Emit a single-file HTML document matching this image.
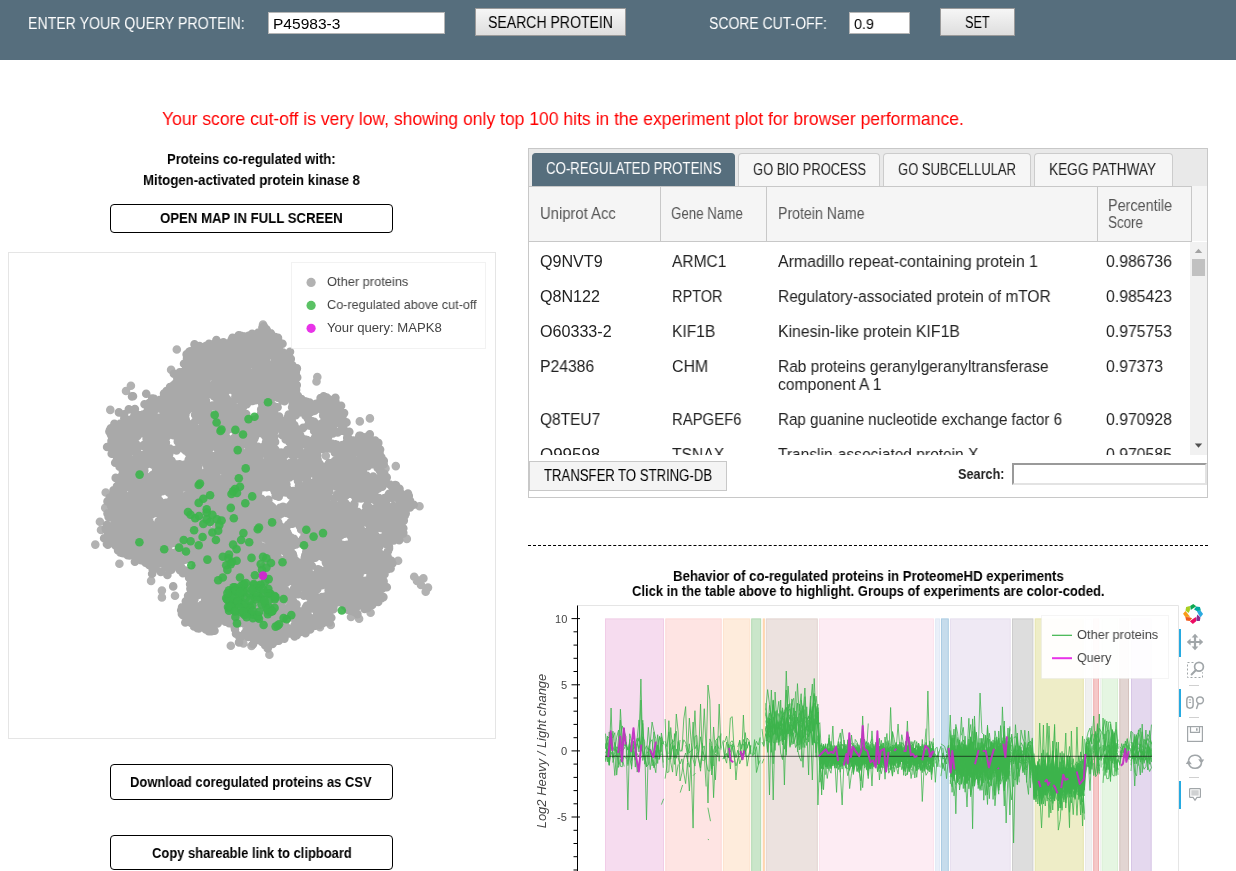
<!DOCTYPE html>
<html><head><meta charset="utf-8"><title>ProteomeHD</title>
<style>
html,body{margin:0;padding:0;background:#fff;}
body{width:1236px;height:871px;position:relative;overflow:hidden;font-family:"Liberation Sans",sans-serif;color:#000;}
.t{position:absolute;white-space:nowrap;transform-origin:0 0;line-height:20px;display:block;will-change:transform;}
.a{position:absolute;box-sizing:border-box;}
.btn{position:absolute;box-sizing:border-box;border:1px solid #9a9a9a;background:linear-gradient(#f6f6f6,#dedede);}
.bb{position:absolute;box-sizing:border-box;border:1px solid #000;border-radius:4px;background:#fff;}
.tab{position:absolute;box-sizing:border-box;border:1px solid #ccc;border-bottom:none;background:#f6f6f6;border-radius:4px 4px 0 0;}
</style></head><body>

<div class="a" style="left:0;top:0;width:1236px;height:60px;background:#566e7d"></div>
<span class="t" id="t0" style="left:28.30px;top:13.59px;font-size:15.6px;color:#fff;transform:scaleX(0.9061);">ENTER YOUR QUERY PROTEIN:</span>
<div class="a" style="left:268px;top:12px;width:177px;height:22px;background:#fff;border:1px solid #b5b5b5"></div>
<span class="t" id="t1" style="left:273.30px;top:13.80px;font-size:15px;transform:scaleX(1.0359);">P45983-3</span>
<div class="btn" style="left:475px;top:8px;width:151px;height:28px"></div>
<span class="t" id="t2" style="left:488.00px;top:12.41px;font-size:16.12px;transform:scaleX(0.8728);">SEARCH PROTEIN</span>
<span class="t" id="t3" style="left:709.00px;top:13.59px;font-size:15.6px;color:#fff;transform:scaleX(0.8961);">SCORE CUT-OFF:</span>
<div class="a" style="left:849px;top:12px;width:61px;height:22px;background:#fff;border:1px solid #b5b5b5"></div>
<span class="t" id="t4" style="left:854.00px;top:13.80px;font-size:15px;transform:scaleX(0.9588);">0.9</span>
<div class="btn" style="left:940px;top:8px;width:75px;height:28px"></div>
<span class="t" id="t5" style="left:965.00px;top:12.41px;font-size:16.12px;transform:scaleX(0.7880);">SET</span>
<span class="t" id="t6" style="left:161.70px;top:108.81px;font-size:18.72px;color:#f00;transform:scaleX(0.9371);">Your score cut-off is very low, showing only top 100 hits in the experiment plot for browser performance.</span>
<span class="t" id="t7" style="left:166.70px;top:148.95px;font-size:14.56px;font-weight:700;transform:scaleX(0.8991);">Proteins co-regulated with:</span>
<span class="t" id="t8" style="left:143.00px;top:169.95px;font-size:14.56px;font-weight:700;transform:scaleX(0.9100);">Mitogen-activated protein kinase 8</span>
<div class="bb" style="left:110px;top:204px;width:283px;height:29px"></div>
<span class="t" id="t9" style="left:160.00px;top:207.77px;font-size:15.08px;font-weight:700;transform:scaleX(0.8746);">OPEN MAP IN FULL SCREEN</span>
<div class="bb" style="left:110px;top:764px;width:283px;height:36px"></div>
<span class="t" id="t10" style="left:130.40px;top:772.25px;font-size:14.56px;font-weight:700;transform:scaleX(0.8892);">Download coregulated proteins as CSV</span>
<div class="bb" style="left:110px;top:835px;width:283px;height:35px"></div>
<span class="t" id="t11" style="left:151.50px;top:843.25px;font-size:14.56px;font-weight:700;transform:scaleX(0.8891);">Copy shareable link to clipboard</span>
<div class="a" style="left:528px;top:148px;width:680px;height:350px;background:#e9e9e9;border:1px solid #c8c8c8"></div>
<div class="a" style="left:529px;top:186px;width:678px;height:56px;background:#f5f5f5"></div>
<div class="a" style="left:529px;top:241px;width:678px;height:256px;background:#fff"></div>
<div class="tab" style="left:532px;top:153px;width:203px;height:33px;background:#566e7d;border-color:#566e7d"></div>
<span class="t" id="t12" style="left:546.20px;top:158.59px;font-size:15.6px;color:#fff;transform:scaleX(0.8482);">CO-REGULATED PROTEINS</span>
<div class="tab" style="left:738px;top:153px;width:142px;height:33px"></div>
<span class="t" id="t13" style="left:753.00px;top:159.59px;font-size:15.6px;color:#222;transform:scaleX(0.8306);">GO BIO PROCESS</span>
<div class="tab" style="left:883px;top:153px;width:148px;height:33px"></div>
<span class="t" id="t14" style="left:898.00px;top:159.59px;font-size:15.6px;color:#222;transform:scaleX(0.8353);">GO SUBCELLULAR</span>
<div class="tab" style="left:1034px;top:153px;width:139px;height:33px"></div>
<span class="t" id="t15" style="left:1049.00px;top:159.59px;font-size:15.6px;color:#222;transform:scaleX(0.8738);">KEGG PATHWAY</span>
<div class="a" style="left:529px;top:186px;width:663px;height:56px;background:#f5f5f5;border:1px solid #c8c8c8;border-left:none"></div>
<div class="a" style="left:660px;top:187px;width:1px;height:54px;background:#c8c8c8"></div>
<div class="a" style="left:766px;top:187px;width:1px;height:54px;background:#c8c8c8"></div>
<div class="a" style="left:1097px;top:187px;width:1px;height:54px;background:#c8c8c8"></div>
<span class="t" id="t16" style="left:539.80px;top:203.59px;font-size:15.6px;color:#555;transform:scaleX(0.9492);">Uniprot Acc</span>
<span class="t" id="t17" style="left:671.30px;top:203.59px;font-size:15.6px;color:#555;transform:scaleX(0.8528);">Gene Name</span>
<span class="t" id="t18" style="left:777.50px;top:203.59px;font-size:15.6px;color:#555;transform:scaleX(0.9072);">Protein Name</span>
<span class="t" id="t19" style="left:1108.00px;top:195.59px;font-size:15.6px;color:#555;transform:scaleX(0.9229);">Percentile</span>
<span class="t" id="t20" style="left:1108.00px;top:212.59px;font-size:15.6px;color:#555;transform:scaleX(0.8589);">Score</span>
<div class="a" style="left:529px;top:242px;width:661px;height:213px;overflow:hidden">
<span class="t" id="t21" style="left:10.80px;top:8.51px;font-size:16.12px;color:#222;transform:scaleX(0.9973);">Q9NVT9</span>
<span class="t" id="t22" style="left:142.80px;top:8.51px;font-size:16.12px;color:#222;transform:scaleX(0.9627);">ARMC1</span>
<span class="t" id="t23" style="left:248.60px;top:8.51px;font-size:16.12px;color:#222;transform:scaleX(0.9872);">Armadillo repeat-containing protein 1</span>
<span class="t" id="t24" style="left:577.20px;top:8.51px;font-size:16.12px;color:#222;transform:scaleX(0.9806);">0.986736</span>
<span class="t" id="t25" style="left:10.80px;top:43.51px;font-size:16.12px;color:#222;transform:scaleX(0.9947);">Q8N122</span>
<span class="t" id="t26" style="left:142.80px;top:43.51px;font-size:16.12px;color:#222;transform:scaleX(0.8985);">RPTOR</span>
<span class="t" id="t27" style="left:248.60px;top:43.51px;font-size:16.12px;color:#222;transform:scaleX(0.9617);">Regulatory-associated protein of mTOR</span>
<span class="t" id="t28" style="left:577.20px;top:43.51px;font-size:16.12px;color:#222;transform:scaleX(0.9806);">0.985423</span>
<span class="t" id="t29" style="left:10.80px;top:78.61px;font-size:16.12px;color:#222;transform:scaleX(0.9992);">O60333-2</span>
<span class="t" id="t30" style="left:142.80px;top:78.61px;font-size:16.12px;color:#222;transform:scaleX(0.9673);">KIF1B</span>
<span class="t" id="t31" style="left:248.60px;top:78.61px;font-size:16.12px;color:#222;transform:scaleX(0.9813);">Kinesin-like protein KIF1B</span>
<span class="t" id="t32" style="left:577.20px;top:78.61px;font-size:16.12px;color:#222;transform:scaleX(0.9806);">0.975753</span>
<span class="t" id="t33" style="left:10.80px;top:113.61px;font-size:16.12px;color:#222;transform:scaleX(0.9758);">P24386</span>
<span class="t" id="t34" style="left:142.80px;top:113.61px;font-size:16.12px;color:#222;transform:scaleX(0.9840);">CHM</span>
<span class="t" id="t35" style="left:248.60px;top:113.61px;font-size:16.12px;color:#222;transform:scaleX(0.9593);">Rab proteins geranylgeranyltransferase</span>
<span class="t" id="t36" style="left:577.20px;top:113.61px;font-size:16.12px;color:#222;transform:scaleX(0.9788);">0.97373</span>
<span class="t" id="t37" style="left:10.80px;top:166.71px;font-size:16.12px;color:#222;transform:scaleX(0.9606);">Q8TEU7</span>
<span class="t" id="t38" style="left:142.80px;top:166.71px;font-size:16.12px;color:#222;transform:scaleX(0.9228);">RAPGEF6</span>
<span class="t" id="t39" style="left:248.60px;top:166.71px;font-size:16.12px;color:#222;transform:scaleX(0.9413);">Rap guanine nucleotide exchange factor 6</span>
<span class="t" id="t40" style="left:577.20px;top:166.71px;font-size:16.12px;color:#222;transform:scaleX(0.9806);">0.970928</span>
<span class="t" id="t41" style="left:10.80px;top:201.81px;font-size:16.12px;color:#222;transform:scaleX(1.0501);">Q99598</span>
<span class="t" id="t42" style="left:142.80px;top:201.81px;font-size:16.12px;color:#222;transform:scaleX(0.9717);">TSNAX</span>
<span class="t" id="t43" style="left:248.60px;top:201.81px;font-size:16.12px;color:#222;transform:scaleX(0.9633);">Translin-associated protein X</span>
<span class="t" id="t44" style="left:577.20px;top:201.81px;font-size:16.12px;color:#222;transform:scaleX(0.9806);">0.970585</span>
<span class="t" id="t45" style="left:248.60px;top:132.31px;font-size:16.12px;color:#222;transform:scaleX(0.9719);">component A 1</span>
</div>
<div class="a" style="left:1190px;top:242px;width:17px;height:213px;background:#f1f1f1"></div>
<div class="a" style="left:1192px;top:259px;width:13px;height:17px;background:#c1c1c1"></div>
<svg class="a" style="left:1190px;top:242px" width="17" height="215"><path d="M4.8 11L8.5 6.7L12.2 11Z" fill="#a3a3a3"/><path d="M4.8 201.5L8.5 205.8L12.2 201.5Z" fill="#505050"/></svg>
<div class="a" style="left:529px;top:461px;width:198px;height:30px;background:#f4f4f4;border:1px solid #c8c8c8"></div>
<span class="t" id="t46" style="left:544.00px;top:465.59px;font-size:15.6px;transform:scaleX(0.8418);">TRANSFER TO STRING-DB</span>
<span class="t" id="t47" style="left:958.10px;top:463.55px;font-size:14.56px;font-weight:700;color:#222;transform:scaleX(0.8693);">Search:</span>
<div class="a" style="left:1012px;top:463px;width:195px;height:22px;background:#fff;border:2px solid;border-color:#9a9a9a #e3e3e3 #e3e3e3 #9a9a9a"></div>
<div class="a" style="left:528px;top:545px;width:680px;height:0;border-top:1px dashed #000"></div>
<span class="t" id="t48" style="left:673.40px;top:565.94px;font-size:14.04px;font-weight:700;transform:scaleX(0.9386);">Behavior of co-regulated proteins in ProteomeHD experiments</span>
<span class="t" id="t49" style="left:632.10px;top:581.34px;font-size:14.04px;font-weight:700;transform:scaleX(0.9253);">Click in the table above to highlight. Groups of experiments are color-coded.</span>
<svg class="a" style="left:8px;top:252px" width="488" height="487" viewBox="0 0 488 487">
<rect x=".5" y=".5" width="487" height="486" fill="#fff" stroke="#e5e5e5"/>
<g fill="none" stroke-linecap="round" stroke-width="8.6">
<path stroke="#b2b2b2" d="M168.8 97.5h.01M163.1 117.7h.01M102.3 157.9h.01M97.7 240.5h.01M111.4 311.7h.01M143.1 328.9h.01M153.9 338.6h.01M153.9 345.4h.01M167.0 343.8h.01M309.3 125.0h.01M308.5 129.5h.01M351.8 169.4h.01M361.9 166.4h.01M387.8 214.1h.01M377.5 216.4h.01M261.4 402.8h.01M222.8 393.7h.01M235.4 391.5h.01M243.5 394.0h.01M406.2 324.8h.01M409.0 329.0h.01M411.9 328.2h.01M415.4 326.4h.01M420.0 335.6h.01M417.7 339.7h.01M413.0 333.0h.01M343.0 365.0h.01M351.1 366.8h.01M362.6 360.8h.01M322.8 373.0h.01M312.0 375.3h.01M317.8 203.8h.01M255.0 72.5h.01M258.0 77.0h.01M122.9 133.8h.01M118.0 139.0h.01M87.3 292.6h.01M91.9 269.7h.01M93.0 278.0h.01M97.2 255.9h.01M390.1 308.7h.01M411.5 254.3h.01M398.8 286.9h.01"/>
<path stroke="#a9a9a9" d="M207.0 137.0h.01M227.8 258.2h.01M266.7 190.1h.01M221.1 239.1h.01M369.3 326.9h.01M120.1 209.7h.01M274.7 315.6h.01M257.1 306.7h.01M138.7 179.8h.01M342.8 327.4h.01M307.2 323.7h.01M107.8 279.3h.01M285.1 211.7h.01M267.8 99.6h.01M140.8 168.2h.01M255.8 74.4h.01M248.2 134.1h.01M251.2 206.9h.01M215.5 131.9h.01M255.4 155.2h.01M311.5 180.2h.01M236.7 137.5h.01M182.4 250.4h.01M304.7 335.9h.01M225.9 193.0h.01M273.4 280.3h.01M207.9 306.4h.01M329.0 298.9h.01M233.1 160.3h.01M199.4 376.3h.01M290.1 380.5h.01M282.6 135.1h.01M146.7 188.2h.01M322.3 351.7h.01M185.2 331.3h.01M124.7 242.4h.01M198.1 178.4h.01M154.6 260.8h.01M258.4 254.1h.01M220.5 245.7h.01M136.9 248.2h.01M239.9 88.4h.01M270.6 92.0h.01M187.7 144.5h.01M249.3 92.7h.01M378.7 255.5h.01M324.6 352.7h.01M336.1 257.7h.01M173.7 150.9h.01M302.2 258.2h.01M206.8 204.8h.01M224.1 109.8h.01M186.1 259.6h.01M212.3 260.9h.01M345.8 280.3h.01M216.5 144.2h.01M342.9 331.5h.01M129.5 273.8h.01M180.3 142.4h.01M308.4 205.4h.01M323.1 339.9h.01M261.5 289.9h.01M139.2 212.1h.01M324.7 346.4h.01M189.6 209.1h.01M117.9 201.5h.01M326.9 148.9h.01M307.3 373.8h.01M188.8 279.7h.01M282.0 223.9h.01M214.7 118.4h.01M208.8 300.3h.01M378.8 335.3h.01M160.8 240.5h.01M355.2 269.1h.01M191.2 105.4h.01M309.6 321.6h.01M196.9 266.6h.01M188.3 176.9h.01M127.1 217.5h.01M309.2 294.4h.01M210.1 264.0h.01M254.9 235.1h.01M329.5 317.2h.01M348.7 189.9h.01M198.5 143.0h.01M195.1 96.6h.01M240.6 255.0h.01M132.0 298.2h.01M281.8 381.5h.01M314.9 243.6h.01M217.5 139.9h.01M385.6 283.9h.01M301.9 266.3h.01M320.3 221.1h.01M348.3 317.5h.01M225.9 164.9h.01M304.8 291.6h.01M343.4 267.0h.01M208.6 175.2h.01M378.2 307.4h.01M233.6 233.0h.01M241.3 266.7h.01M350.4 338.0h.01M130.6 284.5h.01M184.4 350.1h.01M284.5 147.3h.01M96.1 286.2h.01M231.3 96.3h.01M138.4 181.2h.01M300.9 281.7h.01M363.5 208.5h.01M309.4 190.8h.01M242.4 344.0h.01M218.0 179.7h.01M297.6 152.2h.01M211.2 369.1h.01M278.2 211.7h.01M213.9 163.0h.01M147.7 307.7h.01M237.1 252.7h.01M350.2 243.7h.01M391.9 259.8h.01M190.8 208.8h.01M221.5 253.2h.01M192.4 99.6h.01M245.9 313.9h.01M341.0 187.3h.01M345.3 300.5h.01M311.6 184.7h.01M365.2 224.5h.01M324.4 262.3h.01M309.6 153.0h.01M191.2 342.6h.01M201.9 297.9h.01M303.2 292.4h.01M277.0 279.8h.01M190.6 185.6h.01M161.9 265.0h.01M362.9 315.5h.01M131.9 243.3h.01M286.4 179.3h.01M317.6 181.4h.01M299.1 188.1h.01M225.8 219.6h.01M295.3 256.3h.01M176.8 185.4h.01M251.5 259.7h.01M330.8 160.6h.01M346.3 289.8h.01M206.1 306.6h.01M108.3 268.7h.01M232.9 83.9h.01M117.8 178.8h.01M278.0 255.9h.01M223.8 364.9h.01M323.8 343.0h.01M226.8 375.9h.01M398.4 251.7h.01M189.1 157.9h.01M115.3 191.3h.01M271.2 211.7h.01M365.4 256.8h.01M252.1 301.9h.01M324.1 288.6h.01M299.3 204.9h.01M358.1 355.0h.01M193.9 223.2h.01M152.0 196.6h.01M321.0 321.6h.01M270.5 104.5h.01M179.1 107.0h.01M228.7 263.6h.01M110.2 181.5h.01M151.5 248.8h.01M264.8 334.1h.01M283.8 314.5h.01M165.1 162.2h.01M215.1 200.3h.01M331.3 349.6h.01M309.9 154.7h.01M240.0 343.2h.01M225.0 219.3h.01M177.4 162.8h.01M350.0 303.0h.01M295.4 159.3h.01M191.8 168.2h.01M279.1 128.9h.01M362.4 321.5h.01M168.3 265.6h.01M342.6 219.1h.01M204.0 306.6h.01M244.6 126.0h.01M325.6 171.1h.01M128.8 218.1h.01M281.3 179.6h.01M183.5 116.8h.01M237.2 352.0h.01M305.9 252.9h.01M218.9 200.7h.01M312.7 277.8h.01M229.3 209.9h.01M294.8 176.1h.01M253.2 161.1h.01M263.8 292.8h.01M292.4 291.1h.01M344.2 332.0h.01M108.2 286.7h.01M133.8 257.2h.01M173.2 142.4h.01M270.0 310.5h.01M266.1 120.9h.01M267.2 320.7h.01M266.2 89.7h.01M144.4 163.7h.01M169.7 159.2h.01M249.2 387.9h.01M136.3 218.5h.01M259.6 314.2h.01M379.6 268.0h.01M277.3 219.0h.01M140.9 231.6h.01M280.2 135.8h.01M218.8 289.6h.01M128.2 291.8h.01M368.6 321.1h.01M343.4 210.6h.01M348.9 321.9h.01M381.3 259.2h.01M278.6 236.4h.01M189.5 343.1h.01M148.0 307.9h.01M366.8 342.2h.01M269.9 145.7h.01M135.9 202.8h.01M292.8 235.5h.01M205.1 100.3h.01M365.9 188.8h.01M269.0 209.4h.01M208.2 332.7h.01M122.8 215.5h.01M220.9 164.1h.01M363.5 286.9h.01M327.3 273.2h.01M325.6 258.6h.01M233.1 252.6h.01M265.2 195.3h.01M269.3 378.3h.01M183.7 191.2h.01M187.9 193.2h.01M174.3 161.9h.01M121.8 182.8h.01M223.7 87.6h.01M348.5 196.6h.01M179.0 106.2h.01M226.9 239.4h.01M256.8 156.8h.01M367.5 309.7h.01M204.9 363.2h.01M189.9 199.7h.01M145.6 223.0h.01M147.7 165.8h.01M227.8 202.8h.01M275.4 222.0h.01M233.2 140.4h.01M309.8 255.4h.01M315.6 361.7h.01M258.0 366.4h.01M233.8 233.3h.01M269.0 332.4h.01M221.3 166.5h.01M315.2 163.5h.01M167.8 245.6h.01M110.9 160.4h.01M194.0 175.5h.01M195.7 148.8h.01M337.2 267.7h.01M242.9 359.6h.01M111.9 293.1h.01M202.1 115.2h.01M325.7 296.4h.01M381.6 307.8h.01M181.1 223.9h.01M216.5 225.4h.01M255.1 86.0h.01M248.3 111.5h.01M126.7 302.4h.01M328.5 341.0h.01M365.4 332.8h.01M153.2 230.5h.01M189.7 254.7h.01M185.6 349.0h.01M99.8 292.8h.01M131.0 177.3h.01M124.1 193.9h.01M263.0 83.0h.01M146.2 261.2h.01M238.4 341.9h.01M238.1 370.4h.01M182.0 208.6h.01M150.1 181.7h.01M273.4 350.9h.01M306.8 255.8h.01M246.4 186.6h.01M400.7 252.5h.01M205.9 170.9h.01M367.0 332.3h.01M244.7 315.3h.01M282.8 349.4h.01M265.5 343.5h.01M151.1 298.4h.01M263.4 218.0h.01M312.6 173.4h.01M362.4 324.0h.01M234.1 178.3h.01M189.3 303.4h.01M381.3 286.1h.01M352.3 316.9h.01M117.0 283.4h.01M356.4 350.9h.01M170.5 275.3h.01M245.2 248.5h.01M127.9 166.8h.01M311.9 362.6h.01M217.6 265.4h.01M193.1 367.3h.01M187.5 258.4h.01M208.3 181.7h.01M143.5 260.2h.01M322.9 308.0h.01M217.1 212.7h.01M310.3 332.8h.01M300.2 290.2h.01M278.9 330.4h.01M270.2 274.5h.01M373.4 205.2h.01M310.6 178.9h.01M307.1 222.2h.01M394.9 251.1h.01M229.9 173.3h.01M229.2 204.9h.01M108.9 234.4h.01M267.2 205.3h.01M111.5 226.3h.01M297.7 189.0h.01M232.5 93.0h.01M362.3 330.4h.01M362.1 262.2h.01M274.5 376.5h.01M255.8 299.1h.01M241.7 280.2h.01M323.8 263.6h.01M258.6 136.6h.01M233.7 116.4h.01M248.0 128.6h.01M314.3 181.3h.01M328.0 169.7h.01M356.5 317.7h.01M331.8 318.7h.01M272.4 309.5h.01M238.3 247.5h.01M255.7 151.1h.01M244.2 112.2h.01M116.6 275.1h.01M214.2 289.9h.01M361.9 331.8h.01M178.7 291.3h.01M144.3 226.4h.01M192.4 182.6h.01M148.1 203.4h.01M380.3 277.2h.01M234.9 329.4h.01M247.9 222.4h.01M312.7 239.2h.01M250.7 225.9h.01M321.9 279.7h.01M349.2 215.9h.01M165.8 256.5h.01M269.8 137.6h.01M212.0 228.0h.01M260.0 144.6h.01M226.5 282.9h.01M161.6 261.0h.01M245.8 241.6h.01M136.8 303.0h.01M390.5 237.0h.01M141.9 172.0h.01M224.3 258.6h.01M165.3 239.6h.01M247.4 344.1h.01M276.8 228.8h.01M231.3 173.1h.01M301.6 150.5h.01M208.7 93.1h.01M106.4 266.5h.01M260.2 208.7h.01M275.1 105.4h.01M309.9 221.7h.01M118.0 274.5h.01M239.3 207.0h.01M169.2 233.5h.01M291.7 310.9h.01M271.6 90.8h.01M254.7 320.8h.01M141.9 250.3h.01M137.9 207.0h.01M300.2 363.8h.01M297.2 203.4h.01M310.0 317.3h.01M232.0 384.2h.01M161.4 215.1h.01M221.0 246.2h.01M332.3 281.6h.01M230.3 131.1h.01M182.7 300.4h.01M187.7 315.4h.01M327.8 154.1h.01M138.6 280.3h.01M111.5 252.1h.01M188.2 228.0h.01M127.4 289.9h.01M119.6 303.2h.01M286.8 184.7h.01M128.6 227.5h.01M297.0 266.4h.01M131.2 251.9h.01M199.6 313.2h.01M252.4 197.9h.01M326.2 172.6h.01M301.4 304.5h.01M109.7 286.1h.01M303.9 350.3h.01M234.9 309.4h.01M165.2 156.9h.01M297.9 311.4h.01M154.1 236.3h.01M225.1 130.8h.01M215.3 282.3h.01M177.3 370.5h.01M280.4 118.2h.01M292.0 326.7h.01M305.0 289.3h.01M249.0 106.5h.01M260.0 220.8h.01M219.0 258.8h.01M265.4 257.7h.01M194.1 181.6h.01M174.1 270.0h.01M316.0 246.9h.01M101.9 178.0h.01M224.4 305.4h.01M269.8 127.1h.01M195.2 157.3h.01M201.3 347.1h.01M249.6 326.1h.01M198.4 93.9h.01M340.4 300.7h.01M206.2 207.0h.01M187.5 288.6h.01M232.6 366.1h.01M190.1 269.3h.01M140.4 298.7h.01M211.9 110.4h.01M168.5 140.1h.01M195.8 339.0h.01M250.8 285.7h.01M238.0 130.0h.01M219.3 291.7h.01M297.8 210.6h.01M242.4 93.6h.01M226.9 185.6h.01M105.2 187.3h.01M272.1 277.2h.01M251.5 98.1h.01M265.2 391.0h.01M261.8 161.5h.01M130.8 206.1h.01M336.7 307.8h.01M274.4 327.6h.01M139.8 202.5h.01M292.8 325.8h.01M296.7 281.8h.01M146.9 259.8h.01M212.0 314.2h.01M365.0 336.4h.01M279.4 285.4h.01M156.6 152.0h.01M357.3 185.8h.01M189.4 304.8h.01M268.4 339.5h.01M292.2 160.1h.01M253.9 199.3h.01M123.3 176.3h.01M359.6 232.0h.01M180.9 118.4h.01M188.0 238.9h.01M274.8 371.2h.01M263.0 154.6h.01M177.6 137.0h.01M156.0 165.2h.01M211.7 203.0h.01M340.0 301.2h.01M254.8 120.2h.01M191.2 286.7h.01M320.7 264.9h.01M226.4 213.0h.01M145.7 166.8h.01M239.9 183.6h.01M111.9 268.0h.01M251.4 369.3h.01M150.2 281.4h.01M170.5 299.2h.01M208.1 275.4h.01M247.9 379.4h.01M99.4 275.6h.01M165.9 249.3h.01M309.6 207.5h.01M266.6 268.4h.01M250.3 248.5h.01M136.1 176.1h.01M150.0 301.1h.01M140.2 288.8h.01M184.8 139.3h.01M145.9 159.3h.01M280.6 256.4h.01M253.5 226.4h.01M241.0 215.7h.01M345.7 254.4h.01M257.9 301.9h.01M325.3 302.1h.01M365.3 279.0h.01M273.5 353.9h.01M150.0 286.2h.01M249.1 351.5h.01M245.1 287.3h.01M257.3 277.9h.01M384.5 239.2h.01M295.2 318.4h.01M246.0 227.1h.01M314.8 305.2h.01M121.4 303.5h.01M215.7 321.9h.01M329.3 242.4h.01M190.5 128.9h.01M357.9 190.7h.01M342.6 283.8h.01M395.2 247.8h.01M206.7 189.5h.01M290.2 255.2h.01M177.6 283.2h.01M156.7 141.1h.01M228.3 164.4h.01M347.0 226.8h.01M390.8 272.3h.01M130.6 250.5h.01M279.2 115.3h.01M273.4 280.1h.01M196.9 254.0h.01M266.1 128.8h.01M366.6 229.7h.01M362.5 342.8h.01M191.1 99.7h.01M259.8 281.3h.01M361.6 186.3h.01M137.1 265.4h.01M312.7 173.3h.01M164.4 256.8h.01M127.3 208.3h.01M219.1 95.8h.01M313.5 154.4h.01M355.4 317.2h.01M190.7 146.2h.01M313.8 320.0h.01M147.5 226.0h.01M240.2 193.9h.01M149.5 165.5h.01M286.2 160.8h.01M301.6 342.4h.01M183.2 216.8h.01M287.9 220.6h.01M213.2 203.8h.01M310.7 237.4h.01M286.5 364.5h.01M244.4 143.1h.01M373.2 210.9h.01M225.8 264.9h.01M243.7 295.2h.01M286.9 265.5h.01M189.4 376.2h.01M290.6 359.0h.01M179.8 151.3h.01M267.9 177.2h.01M232.6 361.2h.01M219.2 318.2h.01M348.0 329.2h.01M200.7 198.4h.01M244.0 260.3h.01M203.5 257.9h.01M233.4 118.6h.01M176.8 134.9h.01M186.1 236.5h.01M223.5 101.0h.01M365.7 265.2h.01M323.3 157.6h.01M355.7 309.1h.01M195.9 244.2h.01M327.0 277.5h.01M194.7 134.8h.01M346.5 313.5h.01M164.1 218.4h.01M340.8 318.5h.01M239.2 359.6h.01M231.6 236.0h.01M238.8 365.3h.01M212.0 328.5h.01M215.8 130.4h.01M193.2 104.8h.01M186.5 137.7h.01M137.0 193.3h.01M319.8 235.5h.01M378.5 267.4h.01M366.3 266.7h.01M296.3 311.7h.01M124.7 265.5h.01M154.9 147.2h.01M252.5 360.8h.01M136.4 168.0h.01M264.3 255.1h.01M313.4 346.9h.01M232.0 238.4h.01M353.6 218.5h.01M226.9 261.3h.01M333.1 206.0h.01M229.8 267.5h.01M215.3 119.6h.01M289.1 332.6h.01M242.0 288.2h.01M260.5 86.6h.01M282.4 285.4h.01M264.3 192.7h.01M316.4 235.8h.01M141.2 233.0h.01M245.9 249.9h.01M295.6 150.7h.01M188.9 178.9h.01M228.4 356.5h.01M176.9 177.7h.01M214.9 339.4h.01M189.2 245.2h.01M342.1 282.5h.01M145.6 293.5h.01M199.4 338.7h.01M231.4 347.2h.01M334.9 330.3h.01M282.5 359.3h.01M138.5 173.9h.01M366.0 241.5h.01M220.1 303.8h.01M217.1 107.3h.01M185.2 132.2h.01M396.7 263.8h.01M234.6 161.4h.01M381.2 266.0h.01M266.3 86.8h.01M347.6 275.1h.01M190.0 118.6h.01M329.6 163.6h.01M312.6 146.1h.01M250.3 143.6h.01M226.3 160.4h.01M173.5 257.2h.01M159.4 301.7h.01M296.5 155.2h.01M303.8 283.8h.01M291.2 183.9h.01M225.7 120.7h.01M131.2 165.9h.01M177.9 157.3h.01M196.3 126.7h.01M389.8 255.0h.01M269.6 109.3h.01M215.4 90.2h.01M199.9 226.3h.01M349.3 192.1h.01M388.6 269.9h.01M193.9 295.0h.01M340.4 186.1h.01M337.1 267.7h.01M265.1 230.8h.01M148.7 248.4h.01M339.7 339.1h.01M110.5 190.6h.01M242.4 307.2h.01M382.6 316.4h.01M101.4 179.6h.01M168.5 198.4h.01M288.0 135.4h.01M182.3 254.4h.01M334.1 242.5h.01M339.6 274.9h.01M236.5 153.3h.01M110.1 233.7h.01M360.0 293.5h.01M220.8 347.9h.01M332.3 276.5h.01M363.5 346.3h.01M279.4 308.8h.01M180.8 207.5h.01M216.3 148.0h.01M214.5 193.3h.01M241.7 280.9h.01M187.4 227.0h.01M225.7 329.6h.01M164.6 173.0h.01M362.5 317.4h.01M294.8 243.1h.01M305.8 273.9h.01M257.2 351.1h.01M224.9 336.7h.01M151.6 277.6h.01M122.5 278.0h.01M126.3 209.0h.01M364.2 352.9h.01M202.8 154.4h.01M253.5 256.7h.01M273.3 261.6h.01M163.4 317.6h.01M286.5 373.4h.01M190.1 260.4h.01M256.9 107.2h.01M199.2 185.3h.01M134.6 277.7h.01M310.0 190.6h.01M294.9 327.4h.01M246.4 97.3h.01M250.3 345.4h.01M326.5 166.1h.01M195.4 318.4h.01M213.8 253.8h.01M134.9 203.1h.01M268.2 87.4h.01M323.2 265.0h.01M198.9 202.8h.01M290.0 254.8h.01M209.6 138.6h.01M351.8 193.6h.01M318.5 359.5h.01M347.1 244.6h.01M268.2 264.0h.01M287.6 331.7h.01M222.1 271.4h.01M266.8 214.5h.01M116.5 298.3h.01M215.7 205.6h.01M138.6 282.6h.01M249.6 283.5h.01M304.5 155.5h.01M231.9 156.7h.01M370.4 332.9h.01M402.2 250.1h.01M123.5 279.1h.01M241.2 374.3h.01M312.7 283.4h.01M188.0 309.2h.01M315.1 238.8h.01M364.5 286.2h.01M294.1 360.0h.01M351.8 191.1h.01M371.4 286.1h.01M179.6 179.9h.01M213.8 300.5h.01M347.4 335.4h.01M338.7 304.3h.01M264.5 356.2h.01M196.1 352.1h.01M317.5 234.2h.01M225.3 198.7h.01M153.4 280.8h.01M190.3 238.4h.01M190.5 135.6h.01M193.8 200.6h.01M164.4 143.7h.01M320.3 259.1h.01M225.2 202.2h.01M331.3 349.9h.01M249.3 319.4h.01M394.1 244.3h.01M135.2 235.2h.01M236.5 262.7h.01M196.5 206.7h.01M254.7 252.8h.01M346.9 244.3h.01M122.1 297.6h.01M258.0 256.1h.01M314.6 180.9h.01M302.2 338.0h.01M228.8 211.7h.01M198.4 95.2h.01M223.4 149.6h.01M201.9 284.6h.01M258.7 254.6h.01M248.1 220.5h.01M225.4 233.5h.01M259.3 175.6h.01M228.9 369.1h.01M142.0 170.6h.01M311.6 271.8h.01M307.2 231.2h.01M364.0 299.8h.01M201.7 175.6h.01M270.7 96.7h.01M245.1 109.9h.01M184.1 277.3h.01M242.4 367.6h.01M277.7 362.2h.01M271.8 330.0h.01M258.1 358.1h.01M169.8 260.5h.01M296.7 363.6h.01M320.0 227.3h.01M309.6 369.7h.01M238.8 152.1h.01M260.5 201.6h.01M171.3 154.4h.01M225.3 190.0h.01M364.8 342.9h.01M376.5 322.2h.01M197.1 318.2h.01M297.1 214.2h.01M188.0 196.4h.01M200.8 352.4h.01M259.8 369.1h.01M274.0 324.3h.01M262.8 345.4h.01M143.6 313.1h.01M133.9 303.7h.01M168.7 155.1h.01M160.0 285.4h.01M305.1 212.8h.01M179.8 349.0h.01M400.0 248.0h.01M329.0 168.8h.01M227.2 177.0h.01M229.2 237.3h.01M277.0 136.4h.01M239.2 93.1h.01M262.0 343.9h.01M306.7 172.7h.01M190.2 214.5h.01M260.9 366.4h.01M284.0 254.5h.01M182.1 360.7h.01M275.4 120.3h.01M135.7 297.1h.01M237.0 318.0h.01M217.5 369.6h.01M273.1 200.5h.01M292.5 328.6h.01M215.8 122.5h.01M218.4 241.0h.01M363.9 287.8h.01M125.5 169.0h.01M208.1 330.3h.01M152.0 233.9h.01M375.9 264.1h.01M199.2 164.0h.01M374.1 308.3h.01M257.0 393.1h.01M143.3 233.7h.01M116.6 287.4h.01M289.9 181.3h.01M384.1 276.6h.01M142.7 271.7h.01M313.8 221.8h.01M258.7 322.4h.01M132.7 243.8h.01M240.2 101.4h.01M156.8 304.6h.01M156.9 144.1h.01M265.5 230.5h.01M263.9 322.8h.01M147.7 193.6h.01M298.6 270.8h.01M264.3 114.7h.01M219.9 324.4h.01M257.4 328.1h.01M194.2 221.7h.01M331.2 231.3h.01M224.7 171.6h.01M159.7 155.9h.01M115.0 233.6h.01M213.1 356.5h.01M300.3 173.1h.01M170.0 188.5h.01M195.6 327.1h.01M231.8 300.6h.01M186.3 135.8h.01M265.5 294.3h.01M316.4 296.0h.01M258.7 77.8h.01M138.6 240.4h.01M297.0 332.4h.01M167.4 247.4h.01M301.2 209.0h.01M355.6 285.9h.01M145.0 212.7h.01M277.1 298.0h.01M356.4 291.6h.01M231.5 196.6h.01M253.8 199.1h.01M207.9 154.2h.01M221.4 277.0h.01M369.8 345.8h.01M270.6 347.9h.01M134.0 252.1h.01M325.9 265.0h.01M275.4 226.1h.01M234.0 151.9h.01M263.8 144.2h.01M283.4 285.9h.01M216.0 267.5h.01M375.1 323.5h.01M210.3 203.1h.01M189.2 130.9h.01M272.1 281.8h.01M193.1 267.7h.01M274.5 226.0h.01M280.7 376.9h.01M180.0 243.4h.01M301.7 194.7h.01M246.8 113.7h.01M321.0 312.8h.01M240.0 133.4h.01M312.7 273.5h.01M270.5 239.9h.01M263.4 115.7h.01M287.0 376.3h.01M336.9 239.1h.01M184.2 149.0h.01M283.3 180.1h.01M313.1 299.6h.01M228.1 257.5h.01M313.5 219.2h.01M248.3 111.9h.01M128.3 298.8h.01M361.0 238.8h.01M209.0 143.1h.01M252.4 362.6h.01M135.7 243.2h.01M176.9 278.5h.01M329.7 294.8h.01M301.1 282.2h.01M228.3 371.8h.01M256.7 316.3h.01M250.2 213.4h.01M218.6 276.4h.01M297.2 278.5h.01M366.8 289.2h.01M214.8 206.8h.01M151.3 257.6h.01M396.2 255.9h.01M128.5 206.6h.01M263.8 350.3h.01M373.7 346.1h.01M256.8 380.7h.01M190.5 233.4h.01M201.6 300.6h.01M190.5 254.4h.01M198.9 237.2h.01M349.5 348.8h.01M261.4 322.3h.01M144.1 306.1h.01M368.9 312.0h.01M300.5 241.2h.01M262.8 208.5h.01M202.2 370.0h.01M206.8 131.0h.01M252.5 260.8h.01M323.3 333.1h.01M304.0 278.5h.01M120.1 256.0h.01M205.6 347.6h.01M379.3 280.0h.01M292.0 273.9h.01M180.4 227.9h.01M132.9 270.5h.01M158.9 214.1h.01M125.8 215.8h.01M246.7 267.0h.01M295.0 264.1h.01M171.3 312.6h.01M283.3 187.7h.01M264.8 359.9h.01M99.0 272.8h.01M365.3 201.5h.01M198.9 358.7h.01M334.7 295.9h.01M340.2 278.6h.01M223.6 170.7h.01M162.0 135.1h.01M183.4 174.4h.01M221.1 122.6h.01M193.7 323.1h.01M262.0 169.2h.01M205.9 110.2h.01M221.9 131.8h.01M331.8 335.2h.01M206.6 296.5h.01M199.2 373.3h.01M191.0 110.3h.01M296.0 335.2h.01M391.4 237.9h.01M244.0 365.8h.01M219.4 170.4h.01M280.9 218.4h.01M116.8 193.8h.01M291.6 148.1h.01M203.4 366.1h.01M251.3 212.9h.01M149.2 287.6h.01M234.2 191.0h.01M327.5 217.4h.01M234.5 84.4h.01M177.0 256.4h.01M277.6 338.2h.01M288.1 252.6h.01M217.5 329.1h.01M255.0 201.5h.01M183.0 357.8h.01M264.5 190.4h.01M119.3 260.8h.01M351.6 285.0h.01M261.7 153.4h.01M261.6 100.9h.01M332.8 211.3h.01M112.5 276.8h.01M220.1 171.7h.01M309.6 290.3h.01M112.3 300.4h.01M203.4 375.6h.01M152.8 319.9h.01M149.8 237.7h.01M290.8 267.5h.01M327.3 192.2h.01M184.5 103.2h.01M160.3 298.1h.01M124.2 254.9h.01M325.3 325.5h.01M204.9 340.6h.01M205.1 117.2h.01M370.5 211.7h.01M344.4 304.1h.01M275.3 345.5h.01M104.4 276.6h.01M215.1 266.1h.01M183.7 340.2h.01M146.7 173.9h.01M325.4 357.3h.01M216.5 363.0h.01M272.7 231.6h.01M180.5 173.9h.01M271.3 138.4h.01M260.9 198.2h.01M168.6 215.9h.01M400.0 241.6h.01M140.5 267.3h.01M356.1 339.5h.01M277.4 319.4h.01M171.9 318.1h.01M180.2 150.3h.01M260.1 206.9h.01M357.2 329.1h.01M221.0 312.5h.01M229.8 161.2h.01M308.6 200.3h.01M247.1 320.3h.01M317.5 369.8h.01M208.8 296.5h.01M225.4 288.5h.01M318.7 145.6h.01M303.0 327.9h.01M216.8 158.7h.01M312.2 185.2h.01M203.5 367.1h.01M225.1 91.8h.01M269.4 126.2h.01M391.5 258.9h.01M168.5 281.5h.01M230.9 269.6h.01M278.7 292.8h.01M334.0 292.8h.01M234.8 145.3h.01M171.4 255.1h.01M274.6 371.7h.01M314.6 232.0h.01M287.8 163.3h.01M199.0 107.5h.01M282.0 99.7h.01M225.5 162.0h.01M303.6 215.9h.01M351.3 230.9h.01M227.3 125.7h.01M344.1 295.4h.01M210.6 345.2h.01M330.1 261.8h.01M264.3 85.8h.01M171.3 243.8h.01M287.1 183.1h.01M323.9 262.6h.01M173.1 179.6h.01M180.4 108.5h.01M208.4 355.4h.01M134.9 224.3h.01M340.4 266.1h.01M290.1 227.5h.01M241.4 381.7h.01M191.8 329.7h.01M195.6 151.8h.01M371.4 309.0h.01M192.5 188.7h.01M152.4 212.8h.01M251.4 366.9h.01M333.0 305.7h.01M221.9 274.6h.01M369.9 342.8h.01M190.5 262.9h.01M253.9 99.8h.01M116.3 193.9h.01M298.6 374.5h.01M332.5 276.7h.01M269.7 363.4h.01M183.0 253.3h.01M247.4 298.8h.01M117.1 255.4h.01M200.0 320.8h.01M162.2 135.5h.01M146.8 313.8h.01M126.6 279.3h.01M179.7 123.0h.01M195.9 276.1h.01M268.5 357.8h.01M261.8 208.8h.01M264.6 100.6h.01M282.6 319.0h.01M313.0 281.8h.01M379.7 310.1h.01M331.2 296.8h.01M169.8 183.0h.01M182.4 336.8h.01M215.0 337.8h.01M200.9 137.2h.01M187.8 365.8h.01M158.3 299.7h.01M135.0 270.2h.01M284.3 212.4h.01M308.7 209.2h.01M169.8 168.4h.01M369.6 331.8h.01M227.4 144.8h.01M263.1 254.0h.01M254.9 109.8h.01M188.3 249.7h.01M241.6 306.5h.01M279.0 260.2h.01M322.4 260.8h.01M373.2 264.8h.01M191.7 151.4h.01M354.6 279.8h.01M363.9 206.8h.01M298.5 371.5h.01M354.8 217.2h.01M294.2 249.3h.01M307.3 351.8h.01M167.3 268.2h.01M376.5 269.0h.01M247.1 380.9h.01M282.4 270.5h.01M375.4 328.9h.01M200.0 155.9h.01M154.5 294.0h.01M168.2 181.1h.01M288.5 248.8h.01M196.8 107.0h.01M266.3 349.6h.01M276.7 290.5h.01M224.0 265.4h.01M313.0 346.9h.01M173.8 263.2h.01M145.5 206.4h.01M163.6 208.8h.01M327.4 145.7h.01M235.9 229.2h.01M363.1 262.0h.01M309.7 153.6h.01M136.0 297.3h.01M269.2 109.7h.01M231.0 307.5h.01M376.0 256.5h.01M247.9 203.3h.01M184.7 337.8h.01M150.8 184.3h.01M125.3 183.3h.01M250.9 251.5h.01M293.5 257.9h.01M120.2 182.6h.01M301.9 340.7h.01M167.5 281.6h.01M266.0 154.2h.01M299.3 224.8h.01M183.0 201.3h.01M133.6 235.2h.01M249.6 223.9h.01M205.2 204.2h.01M375.4 345.1h.01M112.7 186.4h.01M134.6 256.2h.01M189.6 235.9h.01M222.7 305.8h.01M175.0 267.1h.01M173.3 274.7h.01M254.2 138.4h.01M383.2 255.7h.01M298.6 149.8h.01M232.5 154.9h.01M251.9 362.9h.01M144.5 316.7h.01M244.4 337.9h.01M141.1 263.4h.01M353.7 331.3h.01M275.0 240.1h.01M178.2 217.2h.01M353.9 348.2h.01M178.9 262.3h.01M234.9 306.4h.01M149.9 241.2h.01M194.7 267.0h.01M243.1 249.9h.01M292.6 372.1h.01M197.3 293.5h.01M181.5 266.8h.01M107.7 191.1h.01M227.4 224.9h.01M151.4 149.4h.01M191.6 152.6h.01M217.1 99.0h.01M233.1 317.3h.01M307.3 254.1h.01M114.4 217.5h.01M258.7 264.1h.01M106.8 266.4h.01M186.1 292.6h.01M153.5 214.9h.01M385.9 262.3h.01M118.0 181.4h.01M263.9 209.1h.01M283.0 353.3h.01M147.3 276.0h.01M283.9 342.6h.01M281.6 305.9h.01M196.2 264.1h.01M302.1 258.1h.01M263.9 282.9h.01M231.0 114.2h.01M311.5 282.7h.01M114.8 294.5h.01M183.1 320.9h.01M316.6 179.9h.01M265.2 121.8h.01M123.1 217.9h.01M117.6 293.6h.01M166.6 166.2h.01M229.5 199.6h.01M208.6 91.3h.01M319.0 191.9h.01M299.4 220.8h.01M281.9 295.5h.01M233.7 294.9h.01M174.8 123.3h.01M208.3 274.2h.01M285.4 289.4h.01M348.5 301.0h.01M208.2 101.1h.01M185.2 264.2h.01M360.4 271.6h.01M216.8 304.2h.01M299.5 243.2h.01M117.4 287.0h.01M304.5 231.8h.01M172.1 242.8h.01M134.8 216.5h.01M116.9 193.1h.01M164.7 279.6h.01M265.8 380.3h.01M326.3 214.6h.01M137.9 172.6h.01M317.3 219.5h.01M223.0 173.5h.01M143.1 307.4h.01M323.6 191.6h.01M341.0 188.4h.01M161.4 270.5h.01M305.6 205.2h.01M217.2 273.0h.01M191.1 361.7h.01M271.7 292.4h.01M325.7 332.6h.01M245.9 366.8h.01M167.1 290.6h.01M263.6 260.3h.01M215.7 289.9h.01M375.6 329.3h.01M157.4 206.7h.01M315.5 236.4h.01M185.9 99.9h.01M199.6 241.4h.01M252.7 315.9h.01M305.5 216.5h.01M339.2 185.9h.01M269.1 347.6h.01M292.2 263.4h.01M323.8 195.9h.01M305.2 238.7h.01M148.0 252.8h.01M213.7 155.0h.01M359.5 291.6h.01M191.6 182.4h.01M181.9 284.0h.01M279.0 128.7h.01M308.2 218.6h.01M107.7 225.9h.01M251.0 230.1h.01M154.2 311.5h.01M211.6 275.1h.01M164.9 282.7h.01M211.7 173.9h.01M195.0 367.0h.01M255.3 117.1h.01M213.3 97.8h.01M109.4 207.4h.01M202.4 258.6h.01M342.2 349.4h.01M241.9 246.1h.01M124.5 215.8h.01M282.9 202.0h.01M101.7 250.0h.01M113.9 198.8h.01M169.3 230.2h.01M308.3 220.4h.01M221.8 294.7h.01M318.4 311.5h.01M338.4 344.4h.01M324.5 313.8h.01M211.5 136.3h.01M321.9 265.8h.01M153.3 174.4h.01M270.1 351.9h.01M207.7 235.6h.01M190.4 135.9h.01M173.9 125.5h.01M196.5 162.4h.01M217.3 331.2h.01M110.3 257.1h.01M319.3 239.0h.01M195.7 373.4h.01M219.4 216.8h.01M255.8 276.5h.01M373.2 271.6h.01M309.2 353.7h.01M116.3 301.1h.01M343.3 273.7h.01M218.8 154.8h.01M247.3 101.7h.01M354.7 220.5h.01M179.1 248.0h.01M240.6 274.5h.01M298.1 363.0h.01M214.7 299.0h.01M316.9 319.0h.01M183.8 195.0h.01M216.1 314.5h.01M391.5 236.7h.01M219.0 205.8h.01M104.6 274.5h.01M280.7 213.5h.01M240.5 168.6h.01M231.3 332.1h.01M271.0 231.2h.01M140.8 248.7h.01M248.5 257.2h.01M157.2 184.3h.01M302.2 250.0h.01M129.9 177.0h.01M115.3 243.1h.01M283.7 341.4h.01M323.3 365.8h.01M126.3 163.9h.01M370.9 264.3h.01M158.8 224.9h.01M184.6 119.6h.01M364.5 212.3h.01M116.0 285.6h.01M174.5 130.5h.01M147.2 228.2h.01M163.6 160.7h.01M189.3 317.5h.01M292.7 210.9h.01M361.8 182.2h.01M202.5 310.8h.01M339.2 345.6h.01M204.0 269.4h.01M216.4 354.1h.01M147.3 279.1h.01M141.3 290.4h.01M198.5 358.8h.01M259.4 121.1h.01M268.7 307.2h.01M174.0 134.1h.01M185.5 130.1h.01M128.1 172.9h.01M292.9 273.0h.01M238.3 124.8h.01M330.0 303.4h.01M260.0 193.8h.01M187.7 368.5h.01M181.9 116.6h.01M187.1 145.4h.01M355.4 212.4h.01M240.5 244.0h.01M315.0 216.8h.01M358.3 244.9h.01M128.8 204.3h.01M196.5 314.7h.01M285.4 304.3h.01M353.0 296.6h.01M377.4 273.9h.01M273.1 205.9h.01M201.0 91.8h.01M163.5 291.4h.01M257.6 383.2h.01M103.8 290.4h.01M223.8 187.5h.01M241.9 264.5h.01M194.0 366.7h.01M244.7 244.4h.01M222.1 152.5h.01M210.8 285.3h.01M285.9 254.2h.01M230.3 214.1h.01M208.0 203.8h.01M343.0 213.7h.01M183.0 295.1h.01M278.8 217.8h.01M260.4 247.9h.01M321.5 231.0h.01M247.3 311.0h.01M117.1 231.4h.01M359.9 214.1h.01M318.4 186.2h.01M290.0 252.3h.01M358.2 254.5h.01M395.2 281.4h.01M199.8 248.1h.01M107.0 292.3h.01M140.9 208.8h.01M126.9 157.0h.01M192.6 105.9h.01M219.1 369.3h.01M201.8 137.2h.01M133.9 246.6h.01M376.8 335.2h.01M98.9 292.0h.01M360.6 187.8h.01M205.5 346.9h.01M254.3 210.5h.01M193.6 184.2h.01M207.4 355.4h.01M209.8 115.0h.01M288.1 239.5h.01M290.9 234.1h.01M196.8 128.7h.01M177.1 358.7h.01M181.5 325.1h.01M346.3 354.7h.01M129.4 302.0h.01M264.1 166.4h.01M134.9 234.3h.01M141.8 262.5h.01M324.5 347.2h.01M289.8 201.9h.01M313.1 271.3h.01M348.8 348.5h.01M187.5 252.0h.01M319.8 265.9h.01M252.0 110.0h.01M120.1 194.4h.01M274.3 327.0h.01M197.3 265.5h.01M257.0 378.2h.01M231.5 237.2h.01M105.0 265.4h.01M252.6 198.0h.01M167.7 181.9h.01M356.6 357.0h.01M229.9 235.7h.01M209.3 206.0h.01M302.0 367.2h.01M335.2 326.6h.01M319.5 274.8h.01M231.2 211.5h.01M320.6 338.0h.01M180.7 207.8h.01M294.1 370.1h.01M212.6 286.0h.01M336.5 217.7h.01M240.0 340.4h.01M204.1 204.5h.01M129.7 207.5h.01M225.7 305.0h.01M210.8 125.6h.01M282.5 261.4h.01M183.9 229.1h.01M274.6 216.5h.01M351.2 188.1h.01M378.3 280.0h.01M262.4 301.4h.01M152.7 172.6h.01M285.0 328.3h.01M225.9 290.5h.01M155.7 160.9h.01M193.0 121.7h.01M378.0 270.2h.01M221.5 240.1h.01M259.1 111.3h.01M212.7 311.7h.01M173.8 121.0h.01M242.5 290.5h.01M297.5 381.3h.01M199.9 204.5h.01M238.9 318.0h.01M259.0 223.1h.01M280.8 224.6h.01M357.4 226.2h.01M350.7 228.4h.01M195.6 171.1h.01M369.0 192.5h.01M328.9 306.0h.01M179.9 145.6h.01M207.7 210.7h.01M215.5 154.7h.01M387.3 264.1h.01M270.8 168.6h.01M368.8 318.2h.01M223.0 278.1h.01M176.1 223.8h.01M148.1 198.6h.01M353.8 319.0h.01M145.5 228.4h.01M220.8 364.8h.01M226.6 286.2h.01M348.3 340.8h.01M291.6 329.4h.01M277.7 117.5h.01M155.9 229.1h.01M316.5 238.8h.01M226.7 364.7h.01M110.9 205.9h.01M339.1 293.8h.01M141.6 241.4h.01M334.1 274.2h.01M352.5 300.7h.01M107.3 275.3h.01M280.4 300.1h.01M114.0 258.6h.01M140.4 299.9h.01M229.6 370.7h.01M347.0 227.6h.01M146.2 297.3h.01M360.3 209.7h.01M254.9 94.0h.01M303.7 197.8h.01M355.1 186.2h.01M381.7 264.6h.01M187.0 223.9h.01M348.1 306.0h.01M266.2 287.8h.01M304.1 339.1h.01M297.0 192.5h.01M277.1 280.5h.01M395.3 276.2h.01M236.4 354.5h.01M112.6 194.6h.01M339.1 228.7h.01M384.4 311.5h.01M213.5 361.8h.01M243.4 253.8h.01M162.8 283.7h.01M197.9 324.0h.01M240.9 85.2h.01M183.1 223.6h.01M156.9 290.8h.01M328.7 260.3h.01M244.1 269.4h.01M179.6 118.7h.01M140.0 180.9h.01M264.1 139.9h.01M369.2 229.5h.01M237.0 362.6h.01M391.2 288.2h.01M303.0 339.9h.01M368.7 273.4h.01M281.5 364.3h.01M195.8 206.1h.01M211.6 350.3h.01M256.2 182.1h.01M224.4 305.0h.01M312.5 220.2h.01M317.9 176.9h.01M211.7 172.7h.01M302.7 254.2h.01M341.9 295.7h.01M227.8 112.4h.01M270.2 270.3h.01M199.8 215.8h.01M187.4 373.1h.01M121.9 167.8h.01M358.0 263.0h.01M359.0 342.8h.01M255.7 385.7h.01M234.3 89.4h.01M192.1 128.3h.01M203.6 338.8h.01M126.9 227.6h.01M236.9 317.5h.01M198.0 172.3h.01M328.8 307.7h.01M237.2 294.8h.01M215.3 273.6h.01M263.8 189.4h.01M250.3 284.6h.01M189.8 121.7h.01M133.7 249.9h.01M145.2 292.0h.01M175.0 363.3h.01M253.8 296.4h.01M256.9 286.4h.01M294.3 366.4h.01M207.4 366.8h.01M199.9 99.2h.01M223.4 268.8h.01M371.9 311.1h.01M173.2 143.3h.01M263.8 281.8h.01M170.2 168.8h.01M193.3 246.3h.01M345.3 340.4h.01M265.6 335.5h.01M319.0 331.2h.01M217.3 235.8h.01M260.0 196.7h.01M373.0 254.9h.01M155.0 220.9h.01M254.7 348.8h.01M141.2 203.8h.01M264.0 206.1h.01M228.9 254.6h.01M260.7 164.1h.01M250.0 175.3h.01M353.5 288.2h.01M270.4 165.5h.01M269.1 127.2h.01M338.4 170.3h.01M136.0 238.0h.01M350.4 353.3h.01M188.4 105.9h.01M209.0 225.0h.01M228.0 205.6h.01M265.2 89.2h.01M223.9 296.1h.01M331.2 292.2h.01M244.6 149.0h.01M162.7 157.7h.01M182.4 306.2h.01M182.2 290.3h.01M233.2 188.3h.01M173.2 272.9h.01M182.2 353.7h.01M297.5 314.8h.01M257.0 177.6h.01M335.9 172.8h.01M266.6 228.8h.01M305.7 328.0h.01M285.9 286.9h.01M161.0 316.6h.01M159.6 256.4h.01M253.0 330.9h.01M224.0 106.5h.01M183.1 146.3h.01M275.3 319.4h.01M209.6 123.5h.01M296.9 211.6h.01M194.5 101.2h.01M243.9 96.8h.01M242.1 111.5h.01M351.5 323.1h.01M246.6 308.3h.01M336.6 353.6h.01M254.2 152.0h.01M190.6 161.2h.01M289.2 160.8h.01M308.8 180.8h.01M133.9 254.2h.01M207.2 99.3h.01M269.4 320.1h.01M128.1 184.7h.01M192.4 156.0h.01M159.8 232.1h.01M107.3 254.3h.01M320.3 315.2h.01M356.5 354.6h.01M239.9 199.7h.01M233.3 141.4h.01M147.9 183.9h.01M334.0 170.9h.01M311.5 260.0h.01M328.3 234.7h.01M169.0 131.7h.01M380.9 281.3h.01M341.9 265.2h.01M239.4 364.8h.01M202.3 319.1h.01M250.2 119.4h.01M329.1 298.9h.01M214.3 139.0h.01M280.3 329.5h.01M184.5 146.3h.01M204.3 154.5h.01M156.1 199.0h.01M262.4 230.7h.01M319.8 180.1h.01M205.5 291.3h.01M330.3 286.1h.01M171.2 170.1h.01M170.6 297.3h.01M248.5 329.4h.01M150.5 214.5h.01M334.3 336.9h.01M156.2 143.8h.01M174.7 258.6h.01M205.0 372.1h.01M177.6 180.6h.01M327.1 346.4h.01M127.0 291.5h.01M356.3 331.9h.01M286.6 384.4h.01M168.8 309.0h.01M206.5 335.6h.01M250.5 370.8h.01M253.5 212.6h.01M320.4 196.1h.01M335.0 240.6h.01M158.5 155.7h.01M284.6 355.6h.01M305.4 276.0h.01M123.7 270.3h.01M215.7 135.9h.01M278.5 281.2h.01M212.8 116.9h.01M306.9 185.7h.01M112.4 255.4h.01M206.1 361.1h.01M263.5 190.1h.01M202.5 255.9h.01M328.9 334.7h.01M375.7 319.3h.01M274.6 179.3h.01M124.4 171.9h.01M375.6 275.8h.01M199.6 160.0h.01M162.1 163.1h.01M181.2 109.0h.01M263.0 312.6h.01M166.6 221.4h.01M222.5 196.0h.01M324.4 291.0h.01M356.9 308.1h.01M111.0 180.3h.01M290.5 191.2h.01M248.9 366.1h.01M306.4 152.4h.01M162.5 273.1h.01M187.5 204.3h.01M169.5 165.6h.01M282.3 305.5h.01M221.3 295.3h.01M150.2 150.8h.01M247.7 252.6h.01M187.6 107.6h.01M231.1 113.2h.01M357.1 330.8h.01M219.4 108.5h.01M284.8 302.0h.01M172.4 146.8h.01M147.3 208.1h.01M246.7 364.5h.01M279.2 280.2h.01M192.6 112.4h.01M107.4 258.6h.01M297.7 371.5h.01M213.8 168.1h.01M374.5 221.9h.01M145.5 203.2h.01M271.3 91.7h.01M318.2 292.1h.01M196.2 146.5h.01M361.7 236.0h.01M271.8 279.5h.01M214.3 173.7h.01M339.5 348.7h.01M131.0 171.2h.01M239.6 373.6h.01M227.5 234.2h.01M185.5 132.0h.01M293.3 160.2h.01M218.2 323.6h.01M360.6 269.8h.01M260.4 220.4h.01M155.9 152.5h.01M309.8 242.4h.01M402.6 251.6h.01M199.8 341.9h.01M242.8 203.8h.01M154.5 302.4h.01M248.7 147.1h.01M353.4 271.6h.01M215.0 337.0h.01M381.8 232.5h.01M234.7 141.0h.01M267.7 243.7h.01M223.0 215.1h.01M127.7 191.3h.01M311.2 369.0h.01M229.5 158.4h.01M147.3 305.4h.01M369.2 255.9h.01M337.7 231.6h.01M245.7 275.5h.01M316.5 269.6h.01M285.5 364.2h.01M300.7 220.4h.01M251.6 248.5h.01M200.0 132.5h.01M186.5 92.4h.01M328.0 280.5h.01M362.7 265.9h.01M212.7 176.6h.01M114.7 282.8h.01M174.7 220.4h.01M213.3 287.1h.01M98.1 277.7h.01M265.5 351.9h.01M181.1 325.7h.01M283.1 291.3h.01M125.8 274.4h.01M157.9 190.5h.01M311.9 257.7h.01M229.7 238.9h.01M201.2 187.7h.01M216.9 362.5h.01M234.7 259.5h.01M206.2 290.5h.01M297.4 370.5h.01M160.7 204.0h.01M202.3 266.4h.01M170.3 167.9h.01M312.0 296.4h.01M373.0 249.3h.01M203.2 308.7h.01M273.8 371.2h.01M213.6 342.7h.01M285.2 306.1h.01M295.2 175.7h.01M206.5 113.9h.01M156.8 255.3h.01M234.7 285.3h.01M372.5 265.7h.01M275.5 348.2h.01M256.8 90.5h.01M247.1 127.0h.01M254.4 75.5h.01M276.1 176.9h.01M370.4 236.4h.01M145.5 258.8h.01M266.6 106.0h.01M214.1 119.6h.01M188.1 270.4h.01M200.9 338.1h.01M249.1 244.0h.01M333.9 176.7h.01M179.2 300.8h.01M173.9 361.9h.01M302.8 327.8h.01M218.8 219.9h.01M290.3 377.4h.01M261.3 315.3h.01M358.4 348.8h.01M253.2 157.4h.01M360.9 313.3h.01M232.7 257.8h.01M285.4 157.6h.01M315.0 363.1h.01M193.8 352.9h.01M338.1 279.8h.01M298.3 281.4h.01M257.2 95.3h.01M194.2 118.3h.01M251.4 234.2h.01M360.7 186.7h.01M107.7 293.8h.01M230.5 146.2h.01M176.4 244.4h.01M187.0 186.1h.01M316.9 285.7h.01M220.7 301.2h.01M278.3 174.6h.01M110.1 298.5h.01M204.3 153.5h.01M265.6 308.7h.01M238.8 228.1h.01M389.3 242.9h.01M181.5 206.2h.01M138.6 242.0h.01M111.8 261.5h.01M126.2 256.4h.01M114.7 291.5h.01M245.8 215.6h.01M333.9 346.2h.01M145.3 305.6h.01M361.8 240.7h.01M172.7 235.7h.01M314.6 245.7h.01M321.2 320.8h.01M139.7 158.5h.01M158.9 174.7h.01M248.5 88.0h.01M115.4 251.8h.01M262.1 382.3h.01M272.0 105.0h.01M349.9 238.9h.01M192.1 302.0h.01M336.6 209.5h.01M205.7 326.7h.01M308.8 172.3h.01M238.1 94.1h.01M362.5 284.5h.01M217.0 294.6h.01M216.6 145.7h.01M119.9 278.4h.01M224.3 176.9h.01M289.9 143.9h.01M208.6 190.0h.01M348.6 304.4h.01M376.4 333.2h.01M382.6 265.8h.01M186.0 199.8h.01M274.6 132.6h.01M339.3 195.9h.01M238.6 215.2h.01M154.1 147.3h.01M274.9 208.7h.01M225.6 104.7h.01M245.4 316.2h.01M252.8 366.8h.01M295.4 333.2h.01M180.7 366.4h.01M202.1 142.0h.01M187.1 162.7h.01M189.0 181.9h.01M274.8 326.3h.01M178.6 102.4h.01M126.9 170.3h.01M217.2 108.9h.01M217.0 182.3h.01M372.4 326.5h.01M251.2 165.0h.01M212.3 164.0h.01M266.6 305.8h.01M258.9 358.3h.01M207.7 125.5h.01M202.1 310.5h.01M177.7 230.3h.01M333.9 207.7h.01M136.3 227.9h.01M344.8 226.5h.01M206.5 378.8h.01M307.2 255.0h.01M168.4 229.3h.01M160.9 165.9h.01M239.1 319.2h.01M370.3 190.9h.01M203.2 297.5h.01M300.4 232.6h.01M270.5 275.8h.01M162.3 166.3h.01M169.8 189.4h.01M215.0 342.1h.01M180.0 235.5h.01M261.4 187.1h.01M242.6 203.2h.01M232.2 237.7h.01M329.6 242.9h.01M380.9 242.5h.01M320.2 260.2h.01M189.6 155.2h.01M218.4 214.8h.01M210.7 230.6h.01M298.7 274.2h.01M128.0 236.7h.01M322.9 153.6h.01M130.8 224.1h.01M205.9 363.4h.01M253.0 104.1h.01M206.4 229.8h.01M152.2 147.9h.01M268.7 167.4h.01M192.6 115.8h.01M195.3 281.1h.01M204.9 321.6h.01M306.3 269.8h.01M195.3 241.6h.01M207.0 285.9h.01M195.8 284.7h.01M291.0 184.1h.01M219.5 214.8h.01M235.1 347.0h.01M188.1 132.4h.01M107.5 290.8h.01M227.3 243.1h.01M403.2 252.6h.01M161.4 300.3h.01M227.3 317.0h.01M202.0 285.9h.01M195.0 335.2h.01M301.6 345.3h.01M212.7 169.4h.01M390.4 270.7h.01M163.8 259.5h.01M224.9 210.9h.01M280.5 358.2h.01M160.8 225.0h.01M132.1 167.8h.01M371.9 214.4h.01M346.4 348.0h.01M157.4 272.1h.01M160.2 234.4h.01M362.3 201.4h.01M227.5 190.5h.01M173.1 120.5h.01M163.2 236.7h.01M292.9 262.0h.01M208.1 214.6h.01M103.2 183.1h.01M321.4 350.1h.01M261.7 266.3h.01M349.2 208.6h.01M147.7 198.4h.01M247.2 179.8h.01M149.7 234.3h.01M183.8 362.0h.01M316.9 254.0h.01M239.8 209.1h.01M114.1 228.8h.01M220.8 271.8h.01M125.8 197.7h.01M193.1 358.6h.01M248.4 296.3h.01M338.5 170.5h.01M321.5 222.9h.01M149.3 243.3h.01M275.0 100.6h.01M346.1 258.5h.01M226.0 360.8h.01M241.3 203.5h.01M244.4 311.6h.01M357.6 201.8h.01M351.5 271.9h.01M240.2 243.2h.01M300.4 203.0h.01M269.1 371.9h.01M188.3 282.9h.01M293.4 269.3h.01M196.0 256.4h.01M367.5 337.8h.01M181.2 218.3h.01M187.3 225.6h.01M201.3 312.0h.01M148.3 308.7h.01M156.3 227.7h.01M302.7 284.3h.01M269.3 291.0h.01M141.2 238.8h.01M136.0 289.1h.01M236.2 371.6h.01M216.3 246.5h.01M210.9 361.1h.01M375.1 304.1h.01M99.7 283.4h.01M200.2 270.7h.01M200.6 379.1h.01M251.6 257.1h.01M174.2 316.9h.01M249.5 213.9h.01M284.0 340.1h.01M267.6 386.5h.01M322.5 262.5h.01M239.4 129.9h.01M121.6 301.8h.01M307.1 244.8h.01M244.0 142.2h.01M118.1 284.1h.01M351.6 300.2h.01M147.5 227.8h.01M311.6 302.0h.01M192.3 303.9h.01M240.4 215.9h.01M338.3 220.3h.01M296.5 149.2h.01M132.4 289.8h.01M129.2 274.2h.01M116.1 162.3h.01M259.9 132.3h.01M209.0 367.4h.01M204.6 242.5h.01M226.2 168.5h.01M113.8 196.6h.01M222.9 363.4h.01M386.1 279.3h.01M198.0 223.0h.01M233.9 108.6h.01M178.3 183.1h.01M355.0 204.3h.01M183.3 283.6h.01M106.8 285.4h.01M233.1 309.3h.01M333.4 208.0h.01M348.4 216.6h.01M212.4 215.9h.01M204.1 247.6h.01M146.5 312.2h.01M175.2 122.8h.01M244.4 325.8h.01M124.3 188.7h.01M300.8 240.3h.01M149.7 223.5h.01M368.7 231.5h.01M276.8 360.5h.01M333.6 199.8h.01M220.2 286.4h.01M221.5 220.9h.01M188.5 153.2h.01M254.1 355.7h.01M285.7 145.5h.01M328.8 167.6h.01M197.9 124.4h.01M283.9 317.0h.01M333.3 303.9h.01M276.7 384.7h.01M299.6 354.7h.01M136.5 175.8h.01M381.1 255.3h.01M378.6 264.1h.01M320.2 173.5h.01M201.7 225.6h.01M269.6 227.7h.01M144.7 177.9h.01M302.7 231.1h.01M234.1 326.0h.01M277.7 307.1h.01M253.0 89.9h.01M145.6 146.7h.01M245.1 295.9h.01M302.9 236.4h.01M290.5 217.3h.01M258.3 152.1h.01M387.8 241.8h.01M263.6 316.4h.01M331.7 316.0h.01M197.0 177.2h.01M127.5 255.6h.01M204.2 187.6h.01M204.8 171.0h.01M205.1 234.4h.01M172.4 283.9h.01M296.6 282.2h.01M173.1 227.2h.01M116.3 166.3h.01M321.1 174.4h.01M325.2 348.9h.01M205.2 192.6h.01M218.0 222.6h.01M220.3 120.8h.01M234.4 349.8h.01M190.0 189.8h.01M402.1 248.7h.01M283.4 342.0h.01M311.0 328.9h.01M363.7 306.8h.01M350.6 229.3h.01M239.8 118.7h.01M302.5 341.6h.01M112.0 187.5h.01M359.7 194.1h.01M228.1 144.4h.01M208.3 261.3h.01M149.1 312.2h.01M194.1 282.9h.01M105.3 261.5h.01M337.4 331.8h.01M198.8 124.7h.01M265.9 190.6h.01M198.5 219.3h.01M288.0 118.7h.01M348.3 355.4h.01M195.5 116.9h.01M253.4 162.5h.01M282.2 364.7h.01M147.8 288.5h.01M212.4 257.9h.01M109.7 196.4h.01M340.5 234.2h.01M326.1 316.4h.01M194.1 366.2h.01M234.9 300.1h.01M290.2 253.4h.01M176.6 218.2h.01M153.4 275.3h.01M346.9 236.1h.01M189.5 214.9h.01M385.3 280.3h.01M177.1 150.0h.01M291.4 336.2h.01M156.2 175.1h.01M341.8 236.2h.01M197.7 161.3h.01M263.9 293.6h.01M216.3 180.5h.01M159.5 156.0h.01M109.6 275.2h.01M237.1 231.9h.01M162.7 165.9h.01M185.6 254.8h.01M197.3 202.2h.01M212.2 197.5h.01M268.0 310.9h.01M233.4 322.4h.01M176.3 235.5h.01M326.7 317.6h.01M309.4 320.9h.01M300.8 370.1h.01M241.7 233.4h.01M361.2 317.8h.01M189.3 285.7h.01M216.4 175.5h.01M343.8 296.7h.01M190.0 327.6h.01M241.2 182.7h.01M177.9 235.8h.01M209.9 361.2h.01M216.5 242.5h.01M243.7 304.2h.01M283.4 352.4h.01M290.0 248.2h.01M390.2 281.9h.01M206.0 335.3h.01M176.4 227.9h.01M316.8 151.1h.01M218.7 98.5h.01M323.7 345.6h.01M179.1 158.7h.01M263.4 157.2h.01M124.0 292.7h.01M204.1 207.6h.01M304.6 204.0h.01M140.3 182.5h.01M383.6 234.3h.01M353.8 316.6h.01M177.2 122.9h.01M179.9 111.4h.01M238.0 276.9h.01M253.0 348.6h.01M120.8 212.5h.01M315.7 297.5h.01M315.1 329.8h.01M138.0 232.6h.01M230.0 273.1h.01M340.5 268.8h.01M356.7 334.9h.01M153.5 234.7h.01M257.4 252.7h.01M238.5 368.7h.01M199.1 113.4h.01M328.0 324.6h.01M167.8 156.1h.01M221.4 314.1h.01M165.9 121.8h.01M263.5 371.4h.01M252.5 145.1h.01M202.5 108.9h.01M182.3 276.0h.01M218.1 321.4h.01M192.0 363.9h.01M236.1 105.4h.01M209.6 276.0h.01M375.3 307.8h.01M365.6 270.1h.01M105.6 199.0h.01M164.3 272.7h.01M303.9 374.8h.01M265.8 369.8h.01M311.7 184.8h.01M297.6 163.7h.01M276.7 215.9h.01M200.4 222.6h.01M165.2 137.6h.01M190.1 291.3h.01M263.5 184.8h.01M182.1 132.1h.01M188.2 107.5h.01M335.0 196.1h.01M287.9 264.7h.01M247.8 307.3h.01M151.0 199.7h.01M214.5 184.0h.01M123.3 242.1h.01M289.9 333.2h.01M282.7 216.6h.01M234.8 180.7h.01M362.0 350.5h.01M184.9 282.6h.01M294.9 241.6h.01M208.3 241.1h.01M286.6 361.0h.01M175.9 231.9h.01M263.2 339.6h.01M203.5 360.3h.01M111.3 188.7h.01M197.2 123.3h.01M111.8 259.9h.01M292.2 183.4h.01M210.7 332.3h.01M361.8 241.3h.01M144.1 321.8h.01M144.5 282.4h.01M216.2 161.2h.01M224.3 130.1h.01M114.4 222.6h.01M229.6 250.7h.01M327.4 152.3h.01M195.2 277.2h.01M188.0 308.1h.01M137.6 238.5h.01M159.0 146.2h.01M125.7 228.6h.01M381.1 241.7h.01M321.9 318.7h.01M102.5 177.0h.01M262.7 100.0h.01M296.3 154.2h.01M325.0 254.0h.01M232.8 132.5h.01M200.8 168.2h.01M275.1 239.4h.01M143.1 205.0h.01M134.7 281.4h.01M118.0 284.8h.01M219.9 343.4h.01M182.1 174.5h.01M259.1 388.1h.01M175.0 355.3h.01M284.7 341.4h.01M310.7 195.8h.01M295.7 324.3h.01M377.0 225.6h.01M210.6 105.2h.01M193.1 103.3h.01M318.0 358.4h.01M203.7 225.2h.01M246.7 203.2h.01M270.8 388.6h.01M275.8 222.3h.01M233.5 284.9h.01M206.0 91.9h.01M174.9 321.2h.01M212.9 230.8h.01M139.7 288.0h.01M233.2 144.1h.01M247.8 274.3h.01M254.0 389.9h.01M117.2 219.5h.01M216.8 296.2h.01M338.6 191.9h.01M182.3 217.9h.01M327.2 340.0h.01M324.2 298.7h.01M192.9 207.7h.01M240.1 384.9h.01M157.3 141.2h.01M133.0 236.4h.01M179.8 294.7h.01M332.6 242.9h.01M288.1 368.6h.01M177.8 127.1h.01M105.5 238.2h.01M296.8 188.0h.01M209.2 333.9h.01M278.2 322.1h.01M301.1 301.2h.01M148.1 186.9h.01M258.0 350.3h.01M118.2 245.9h.01M379.5 304.3h.01M221.1 150.3h.01M349.3 308.7h.01M325.5 354.4h.01M188.4 151.8h.01M208.7 255.8h.01M342.9 336.8h.01M363.1 345.9h.01M147.2 186.3h.01M220.6 350.9h.01M246.3 371.1h.01M216.1 252.8h.01M280.1 282.3h.01M280.8 318.0h.01M268.5 278.8h.01M246.4 387.6h.01M308.6 194.0h.01M171.6 142.2h.01M143.0 154.0h.01M265.0 127.1h.01M360.5 236.1h.01M125.6 211.4h.01M275.2 311.2h.01M372.5 224.8h.01M187.2 354.9h.01M243.7 237.7h.01M108.0 194.9h.01M214.2 210.3h.01M128.3 216.4h.01M148.6 216.6h.01M234.4 384.3h.01M189.6 356.9h.01M106.5 268.7h.01M217.5 216.7h.01M198.8 100.4h.01M131.9 212.1h.01M252.0 342.1h.01M243.8 271.3h.01M312.2 176.3h.01M229.5 135.8h.01M329.5 156.2h.01M319.1 298.5h.01M154.4 188.4h.01M176.7 318.2h.01M221.5 362.8h.01M188.6 114.0h.01M245.1 132.6h.01M236.5 259.9h.01M231.8 292.0h.01M189.5 214.6h.01M346.2 252.8h.01M281.7 139.9h.01M217.5 174.1h.01M177.2 122.8h.01M296.5 331.7h.01M253.8 359.8h.01M187.0 259.5h.01M320.3 233.6h.01M325.0 345.9h.01M378.2 274.1h.01M352.4 273.8h.01M218.0 101.0h.01M380.7 257.9h.01M284.0 142.1h.01M224.5 85.7h.01M251.4 134.2h.01M258.4 230.4h.01M193.7 144.3h.01M221.9 105.3h.01M308.4 214.3h.01M363.9 259.5h.01M356.3 348.2h.01M336.1 161.1h.01M237.7 178.5h.01M319.7 252.4h.01M223.4 342.8h.01M254.7 317.8h.01M248.7 142.4h.01M281.6 143.7h.01M346.2 328.7h.01M188.6 300.8h.01M223.8 150.8h.01M191.0 147.6h.01M171.5 185.0h.01M212.4 322.9h.01M290.7 371.8h.01M272.5 294.4h.01M279.9 113.3h.01M242.2 141.2h.01M123.1 252.1h.01M234.8 270.3h.01M203.4 99.0h.01M170.5 172.5h.01M383.6 283.0h.01M107.2 281.7h.01M257.9 149.5h.01M261.9 373.5h.01M241.4 183.7h.01M370.2 256.5h.01M188.8 141.4h.01M370.4 199.2h.01M367.4 236.0h.01M287.1 312.2h.01M349.1 216.5h.01M318.0 278.6h.01M333.6 311.5h.01M202.1 335.0h.01M323.0 319.8h.01M213.7 109.9h.01M317.7 192.0h.01M210.9 179.1h.01M136.3 233.5h.01M170.7 268.9h.01M395.8 268.6h.01M323.4 293.4h.01M108.4 200.4h.01M235.0 265.0h.01M192.4 231.6h.01M265.7 230.0h.01M263.4 186.9h.01M281.2 321.4h.01M150.6 269.2h.01M286.3 173.1h.01M228.9 328.7h.01M264.2 91.3h.01M265.6 113.3h.01M266.7 107.7h.01M307.8 297.5h.01M251.3 358.3h.01M110.5 237.8h.01M194.6 166.3h.01M247.3 348.6h.01M255.3 79.2h.01M350.1 344.8h.01M171.5 258.1h.01M339.3 297.5h.01M253.2 178.5h.01M289.3 367.9h.01M182.4 208.0h.01M296.3 373.3h.01M209.8 126.2h.01M320.9 196.3h.01M285.5 187.9h.01M252.4 129.9h.01M205.3 211.6h.01M214.1 201.4h.01M240.5 347.7h.01M130.3 241.9h.01M212.6 154.7h.01M240.0 210.4h.01M180.8 356.0h.01M206.6 125.3h.01M172.1 130.9h.01M270.3 355.8h.01M361.9 284.5h.01M234.6 249.4h.01M236.5 313.6h.01M265.1 371.7h.01M209.0 188.1h.01M204.8 314.0h.01M241.2 319.7h.01M201.4 278.5h.01M283.5 210.7h.01M306.4 280.6h.01M248.9 316.0h.01M225.1 103.0h.01M106.1 248.5h.01M200.9 135.4h.01M309.0 365.0h.01M231.0 365.7h.01M228.0 236.3h.01M251.0 198.7h.01M156.4 219.9h.01M229.9 159.8h.01M129.8 204.2h.01M283.0 138.1h.01M274.5 234.7h.01M293.1 260.1h.01M108.0 251.1h.01M294.7 206.1h.01M215.6 158.3h.01M267.8 118.0h.01M336.1 200.4h.01M353.1 285.3h.01M268.1 145.0h.01M301.7 237.0h.01M114.2 231.8h.01M363.6 303.4h.01M289.9 359.2h.01M153.2 183.5h.01M350.6 230.8h.01M232.1 184.9h.01M326.7 209.1h.01M215.6 123.3h.01M358.1 260.7h.01M351.6 264.8h.01M235.7 170.0h.01M279.8 357.8h.01M142.5 311.5h.01M199.4 174.6h.01M327.0 154.2h.01M179.3 286.6h.01M236.0 310.8h.01M380.4 290.4h.01M190.9 167.7h.01M242.6 205.5h.01M168.7 151.8h.01M267.4 226.1h.01M254.1 110.1h.01M244.5 326.9h.01M218.5 158.3h.01M309.0 285.1h.01M282.6 121.0h.01M233.3 97.6h.01M165.3 306.6h.01M99.5 261.6h.01M111.3 238.0h.01M187.5 262.1h.01M245.0 140.5h.01M167.7 226.1h.01M234.6 222.5h.01M128.9 198.2h.01M183.4 211.7h.01M303.3 342.7h.01M269.0 235.4h.01M229.8 169.3h.01M212.2 214.4h.01M226.7 369.0h.01M212.7 132.6h.01M228.4 260.2h.01M192.2 206.7h.01M225.2 204.1h.01M364.7 244.4h.01M151.4 190.2h.01M132.0 271.7h.01M288.8 158.3h.01M282.8 321.1h.01M112.8 298.9h.01M333.9 241.7h.01M199.7 173.1h.01M234.7 326.2h.01M187.8 368.6h.01M164.4 157.8h.01M213.1 148.9h.01M255.3 169.5h.01M263.5 334.8h.01M187.2 118.1h.01M248.5 121.6h.01M120.3 288.0h.01M293.7 256.3h.01M218.1 184.9h.01M180.0 357.4h.01M321.1 211.0h.01M311.7 247.4h.01M124.2 183.9h.01M306.8 331.5h.01M284.2 356.8h.01M203.6 134.0h.01M204.7 327.8h.01M208.2 244.3h.01M249.6 372.2h.01M258.4 97.8h.01M334.3 348.5h.01M266.8 197.8h.01M186.7 371.0h.01M295.4 246.5h.01M322.6 286.2h.01M252.9 234.1h.01M206.1 249.9h.01M166.3 305.8h.01M286.5 210.4h.01M217.8 268.5h.01M204.0 250.6h.01M392.3 272.3h.01M123.7 273.9h.01M260.0 184.9h.01M129.7 236.7h.01M106.7 195.0h.01M372.3 275.9h.01M254.8 295.1h.01M345.6 198.6h.01M263.3 356.0h.01M334.1 350.9h.01M283.2 201.7h.01M145.6 278.7h.01M336.2 299.1h.01M231.4 334.8h.01M104.3 244.1h.01M215.6 294.7h.01M320.9 270.0h.01M375.8 262.6h.01M219.7 134.8h.01M117.5 269.9h.01M252.1 258.0h.01M125.0 144.3h.01M306.6 158.8h.01M214.0 173.7h.01M261.6 304.8h.01M311.3 279.7h.01M323.2 220.3h.01M285.1 316.2h.01M211.3 150.4h.01M111.1 180.1h.01M304.2 333.0h.01M116.7 281.4h.01M329.0 222.7h.01M160.8 172.1h.01M208.5 120.9h.01M104.5 277.8h.01M129.3 176.3h.01M286.1 363.6h.01M219.2 299.4h.01M232.4 181.4h.01M364.7 280.5h.01M144.4 284.7h.01M238.7 377.3h.01M251.7 250.3h.01M265.9 317.8h.01M204.9 192.0h.01M256.6 329.5h.01M225.0 312.0h.01M316.7 328.9h.01M218.8 298.6h.01M376.6 246.0h.01M236.5 84.6h.01M277.3 230.5h.01M190.7 306.9h.01M225.5 126.8h.01M289.2 125.4h.01M286.3 262.4h.01M266.5 126.8h.01M271.7 170.1h.01M288.9 364.5h.01M295.9 289.9h.01M301.6 251.5h.01M222.5 332.0h.01M191.3 321.0h.01M355.0 314.5h.01M178.4 133.1h.01M186.8 225.7h.01M339.7 220.1h.01M291.3 261.2h.01M323.8 350.6h.01M274.7 169.0h.01M290.0 229.0h.01M238.4 260.0h.01M165.9 138.2h.01M279.8 340.9h.01M349.6 348.2h.01M288.5 144.9h.01M284.9 116.0h.01M343.4 358.9h.01M318.8 242.0h.01M101.9 290.8h.01M335.6 192.8h.01M260.4 335.9h.01M222.5 115.0h.01M318.7 164.9h.01M347.2 199.0h.01M325.3 148.3h.01M192.8 183.2h.01M304.5 154.9h.01M179.9 319.3h.01M127.6 249.2h.01M378.4 292.3h.01M271.6 214.2h.01M332.0 343.0h.01M237.0 203.5h.01M192.4 354.1h.01M152.0 184.1h.01M226.7 266.1h.01M348.1 191.8h.01M322.1 345.7h.01M110.4 176.3h.01M263.2 303.2h.01M224.1 195.3h.01M198.9 213.4h.01M335.1 238.6h.01M357.9 294.7h.01M345.8 282.7h.01M219.7 122.3h.01M142.6 169.9h.01M313.8 150.7h.01M298.2 295.5h.01M260.5 230.0h.01M186.0 320.0h.01M243.9 378.4h.01M350.0 209.9h.01M185.1 221.2h.01M342.8 337.7h.01M196.2 356.4h.01M270.4 201.1h.01M220.3 282.8h.01M169.6 168.1h.01M355.7 314.7h.01M188.4 135.9h.01M341.1 201.4h.01M193.6 293.1h.01M134.6 226.4h.01M282.1 316.2h.01M257.5 382.8h.01M358.8 310.2h.01M175.3 250.1h.01M364.1 205.8h.01M201.2 372.3h.01M386.7 280.2h.01M315.9 260.7h.01M392.2 250.1h.01M381.0 274.5h.01M309.0 355.3h.01M283.7 353.1h.01M187.6 313.9h.01M221.9 239.1h.01M204.8 304.2h.01M165.1 165.6h.01M364.2 284.2h.01M296.9 325.6h.01M292.3 290.9h.01M225.1 231.2h.01M192.7 256.0h.01M181.2 242.9h.01M275.4 213.8h.01M387.7 274.7h.01M318.3 177.6h.01M177.8 218.0h.01M319.0 359.2h.01M124.2 274.2h.01M264.7 192.1h.01M173.6 166.2h.01M353.5 291.5h.01M149.7 235.9h.01M249.6 106.9h.01M185.0 359.5h.01M244.2 143.8h.01M292.1 250.5h.01M150.7 203.2h.01M288.9 116.4h.01M220.8 170.5h.01M177.4 151.7h.01M258.1 317.9h.01M121.1 223.7h.01M158.5 139.1h.01M161.7 260.1h.01M242.6 105.6h.01M312.2 222.1h.01M240.4 272.9h.01M342.8 198.5h.01M261.9 193.8h.01M310.4 302.0h.01M198.3 132.0h.01M345.9 359.6h.01M230.7 261.2h.01M175.0 358.1h.01M187.2 157.0h.01M247.6 370.3h.01M317.1 319.8h.01M376.3 221.7h.01M270.3 306.4h.01M285.4 247.9h.01M285.8 217.6h.01M184.8 365.1h.01M193.2 315.1h.01M293.4 371.0h.01M248.3 339.9h.01M281.9 306.6h.01M132.8 307.7h.01M106.0 287.9h.01M249.0 169.2h.01M278.6 180.0h.01M148.5 167.6h.01M372.0 218.8h.01M131.1 299.4h.01M344.5 301.4h.01M246.6 106.7h.01M358.6 237.2h.01M143.9 189.2h.01M230.9 169.9h.01M120.4 232.4h.01M332.9 246.6h.01M197.7 195.2h.01M235.7 256.4h.01M298.1 275.9h.01M202.0 245.2h.01M116.4 184.1h.01M360.4 294.0h.01M299.2 371.4h.01M209.9 251.2h.01M210.8 304.8h.01M190.5 158.9h.01M195.4 343.3h.01M244.1 305.5h.01M287.2 144.0h.01M136.7 309.8h.01M166.4 305.2h.01M243.5 187.8h.01M340.9 337.8h.01M166.8 243.9h.01M141.0 300.1h.01M270.7 244.7h.01M150.9 218.9h.01M138.7 262.3h.01M300.3 355.7h.01M258.0 351.2h.01M333.1 202.0h.01M185.2 294.5h.01M372.7 218.6h.01M196.4 107.3h.01M334.9 221.7h.01M125.9 212.2h.01M224.2 319.2h.01M369.1 237.2h.01M135.0 216.4h.01M367.9 321.2h.01M238.6 331.0h.01M300.7 218.7h.01M174.0 355.4h.01M255.1 111.0h.01M352.9 289.9h.01M177.3 188.1h.01M249.9 198.7h.01M229.3 254.8h.01M221.8 292.7h.01M395.3 280.7h.01M193.8 206.5h.01M185.5 145.6h.01M193.4 205.4h.01M174.0 291.4h.01M368.2 266.1h.01M180.4 102.6h.01M148.9 312.2h.01M273.0 274.9h.01M150.7 168.5h.01M255.2 232.7h.01M231.9 267.7h.01M274.7 220.0h.01M276.0 280.4h.01M364.4 304.5h.01M328.0 218.0h.01M331.4 272.3h.01M216.9 210.9h.01M322.3 233.6h.01M189.6 367.6h.01M271.9 384.8h.01M323.4 215.7h.01M344.0 287.3h.01M134.0 215.7h.01M315.8 174.7h.01M207.8 288.0h.01M393.2 282.2h.01M192.0 247.0h.01M294.3 246.8h.01M209.6 371.4h.01M195.2 129.0h.01M176.8 290.8h.01M271.1 169.4h.01M203.3 225.1h.01M370.2 275.3h.01M269.1 287.8h.01M377.6 305.6h.01M173.1 314.7h.01M334.8 342.2h.01M319.4 270.5h.01M195.9 181.9h.01M212.6 113.7h.01M246.9 295.2h.01M386.4 255.4h.01M243.8 101.6h.01M176.1 197.2h.01M210.9 283.5h.01M282.0 165.2h.01M220.6 231.2h.01M347.9 333.0h.01M166.2 212.7h.01M223.9 176.6h.01M238.4 124.9h.01M176.5 272.3h.01M119.6 271.3h.01M183.6 173.2h.01M181.8 214.9h.01M324.1 177.0h.01M307.7 345.6h.01M252.6 301.8h.01M232.7 166.8h.01M310.5 181.9h.01M272.0 255.9h.01M369.2 333.3h.01M321.2 263.7h.01M251.3 364.9h.01M237.7 274.1h.01M270.7 123.6h.01M125.4 192.4h.01M271.5 99.1h.01M306.7 195.3h.01M322.8 180.2h.01M342.9 193.6h.01M252.5 303.7h.01M264.7 384.0h.01M145.4 155.0h.01M311.9 240.8h.01M340.9 221.8h.01M238.4 190.5h.01M297.1 364.2h.01M230.7 83.3h.01M174.2 268.1h.01M185.8 243.9h.01M257.9 153.2h.01M179.6 358.1h.01M205.8 185.7h.01M270.1 139.1h.01M182.4 182.4h.01M177.7 198.7h.01M258.4 384.6h.01M193.1 147.0h.01M135.1 259.1h.01M183.0 102.7h.01M116.6 183.0h.01M225.4 275.7h.01M301.7 321.2h.01M236.6 313.1h.01M184.9 207.7h.01M118.7 297.5h.01M216.9 113.1h.01M122.6 224.8h.01M185.9 127.5h.01M359.9 343.2h.01M165.4 245.0h.01M222.9 152.1h.01M122.5 199.2h.01M199.9 178.6h.01M255.8 385.3h.01M211.7 127.2h.01M208.3 325.7h.01M382.8 244.1h.01M366.2 330.5h.01M163.3 314.1h.01M349.2 218.2h.01M262.2 316.8h.01M283.1 184.8h.01M284.0 171.7h.01M270.1 290.3h.01M317.6 261.6h.01M353.1 280.2h.01M273.5 209.6h.01M252.1 197.1h.01M241.3 135.2h.01M237.2 223.8h.01M252.1 122.9h.01M207.7 114.4h.01M339.2 326.7h.01M140.7 255.7h.01M263.1 315.9h.01M275.5 141.7h.01M291.3 313.2h.01M217.8 347.0h.01M301.4 337.0h.01M280.7 346.8h.01M217.9 272.2h.01M190.1 308.5h.01M251.4 92.3h.01M212.3 121.1h.01M260.9 259.7h.01M205.8 144.1h.01M218.1 267.5h.01M337.7 271.7h.01M218.5 363.0h.01M326.6 288.5h.01M292.4 154.2h.01M357.1 241.0h.01M126.6 237.9h.01M161.7 216.5h.01M245.6 111.2h.01M290.0 252.8h.01M203.2 373.3h.01M365.4 262.8h.01M171.7 135.6h.01M312.8 366.5h.01M202.2 316.9h.01M246.1 214.9h.01M154.6 156.1h.01M231.5 195.2h.01M128.4 267.7h.01M344.0 293.8h.01M370.6 273.2h.01M243.9 280.2h.01M184.6 141.2h.01M252.7 248.3h.01M218.2 167.9h.01M178.0 265.0h.01M240.8 292.1h.01M316.7 273.9h.01M337.3 299.4h.01M275.0 254.7h.01M177.7 184.0h.01M194.4 243.6h.01M122.8 293.5h.01M183.6 301.9h.01M156.4 188.8h.01M361.4 299.7h.01M287.0 354.2h.01M249.0 218.3h.01M176.0 181.4h.01M178.2 115.2h.01M254.3 232.2h.01M183.2 370.9h.01M143.9 205.4h.01M317.3 270.5h.01M191.3 354.2h.01M333.7 173.3h.01M108.7 244.4h.01M235.9 227.2h.01M341.6 217.1h.01M243.5 384.6h.01M172.5 257.6h.01M352.1 302.5h.01M356.5 292.5h.01M232.1 92.8h.01M192.2 226.0h.01M400.8 243.9h.01M239.5 278.1h.01M379.8 317.1h.01M254.1 221.8h.01M341.4 354.8h.01M113.7 269.7h.01M177.8 349.2h.01M361.4 237.6h.01M246.3 274.3h.01M156.9 257.7h.01M257.7 220.6h.01M216.2 183.1h.01M267.3 363.5h.01M268.8 263.6h.01M266.5 288.7h.01M250.2 303.0h.01M250.2 194.7h.01M236.1 162.5h.01M199.6 340.6h.01M125.8 272.9h.01M266.0 180.3h.01M192.7 253.3h.01M314.2 196.9h.01M213.7 266.7h.01M252.3 179.2h.01M144.4 175.7h.01M147.8 310.1h.01M116.9 234.7h.01M271.3 120.4h.01M261.6 157.2h.01M358.2 343.1h.01M353.1 221.8h.01M211.7 271.9h.01M337.0 233.9h.01M313.2 172.8h.01M168.0 265.4h.01M261.7 275.4h.01M347.3 314.2h.01M361.5 289.6h.01M252.9 274.5h.01M123.0 287.4h.01M134.9 281.5h.01M284.7 122.0h.01M236.0 174.7h.01M225.6 114.4h.01M205.9 219.1h.01M360.9 337.3h.01M134.8 235.6h.01M272.5 294.0h.01M113.7 253.1h.01M351.9 219.2h.01M324.9 168.5h.01M252.2 277.3h.01M224.2 311.0h.01M197.3 152.0h.01M181.4 266.3h.01M163.5 142.1h.01M266.2 122.6h.01M292.7 254.0h.01M281.3 254.7h.01M236.2 88.7h.01M271.0 131.4h.01M372.2 213.3h.01M357.8 331.9h.01M234.1 255.1h.01M227.3 318.1h.01M337.9 204.2h.01M284.4 244.1h.01M286.3 139.0h.01M269.9 140.0h.01M175.0 158.2h.01M207.8 96.6h.01M133.2 270.4h.01M130.8 194.8h.01M187.9 204.2h.01M120.8 285.9h.01M385.3 263.9h.01M194.4 283.9h.01M179.7 200.1h.01M189.9 140.5h.01M245.0 189.4h.01M148.2 168.6h.01M285.5 349.9h.01M292.4 378.3h.01M286.3 382.4h.01M361.1 316.5h.01M341.2 312.2h.01M197.5 312.2h.01M138.0 291.2h.01M395.3 255.1h.01M259.7 159.8h.01M390.4 271.5h.01M173.7 120.2h.01M156.4 309.7h.01M202.8 336.4h.01M328.5 283.3h.01M283.1 286.8h.01M121.0 198.7h.01M209.9 184.4h.01M326.6 259.8h.01M197.2 209.3h.01M231.2 220.1h.01M146.3 185.2h.01M326.2 311.3h.01M252.2 127.2h.01M235.0 125.9h.01M362.1 295.6h.01M161.0 171.8h.01M145.5 153.4h.01M282.0 327.2h.01M100.6 264.9h.01M240.7 131.7h.01M193.9 124.5h.01M261.4 225.6h.01M109.3 210.5h.01M196.3 169.9h.01M350.0 211.2h.01M237.2 297.5h.01M367.3 288.5h.01M366.1 192.1h.01M237.8 331.6h.01M310.6 246.2h.01M173.9 165.2h.01M240.2 113.2h.01M227.7 303.7h.01M194.9 284.7h.01M285.2 204.1h.01M129.2 259.7h.01M342.1 218.3h.01M282.7 129.8h.01M328.8 348.9h.01M358.5 288.6h.01M112.0 192.4h.01M338.9 325.0h.01M321.7 234.6h.01M198.1 120.5h.01M332.4 345.9h.01M245.0 314.1h.01M142.4 174.1h.01M287.6 189.0h.01M328.4 218.1h.01M193.8 190.3h.01M186.8 345.6h.01M323.1 225.5h.01M158.0 275.6h.01M324.1 150.3h.01M330.9 209.9h.01M198.3 296.3h.01M190.1 308.4h.01M155.2 198.0h.01M359.5 355.9h.01M126.0 288.8h.01M272.0 260.1h.01M199.2 126.3h.01M336.7 230.6h.01M190.5 322.2h.01M238.2 368.5h.01M290.8 224.1h.01M193.4 271.8h.01M320.3 232.4h.01M178.3 128.8h.01M184.5 147.4h.01M182.5 278.5h.01M330.4 211.2h.01M257.2 376.7h.01M162.2 316.7h.01M136.5 252.6h.01M227.4 355.2h.01M281.5 225.4h.01M199.4 196.2h.01M228.7 117.5h.01M311.4 211.6h.01M196.0 155.2h.01M137.8 285.2h.01M288.8 133.1h.01M228.7 290.9h.01M266.2 184.6h.01M215.5 329.0h.01M373.6 288.1h.01M155.8 199.0h.01M262.8 221.6h.01M379.3 308.9h.01M274.4 183.2h.01M238.5 302.8h.01M219.8 165.5h.01M146.2 312.6h.01M129.4 247.0h.01M242.3 206.1h.01M173.3 145.3h.01M178.3 133.3h.01M176.4 253.7h.01M311.7 297.1h.01M263.9 188.7h.01M129.6 244.8h.01M223.5 150.4h.01M220.4 91.4h.01M343.6 216.9h.01M301.2 169.8h.01M144.9 202.1h.01M136.0 209.0h.01M230.4 98.5h.01M204.5 232.4h.01M302.6 259.3h.01M191.3 100.6h.01M245.1 379.5h.01M303.1 208.2h.01M241.4 291.2h.01M216.3 141.0h.01M339.4 295.0h.01M255.6 107.5h.01M269.0 271.7h.01M225.1 303.2h.01M395.0 267.3h.01M201.6 312.1h.01M113.4 254.0h.01M385.6 260.1h.01M149.6 243.0h.01M225.4 125.7h.01M371.3 342.3h.01M213.8 149.9h.01M267.1 226.0h.01M292.3 289.7h.01M367.5 287.9h.01M283.3 164.7h.01M254.3 328.9h.01M336.3 226.9h.01M171.5 212.3h.01M172.3 231.2h.01M140.4 295.3h.01M261.6 224.0h.01M237.4 254.9h.01M201.6 106.3h.01M315.6 347.4h.01M187.0 298.9h.01M293.1 277.4h.01M359.7 315.6h.01M345.1 308.0h.01M158.7 303.2h.01M249.5 222.6h.01M104.8 276.7h.01M299.8 322.0h.01M295.5 264.8h.01M172.0 143.3h.01M117.6 178.3h.01M334.8 347.1h.01M205.7 97.7h.01M187.2 198.5h.01M215.0 156.0h.01M173.7 190.4h.01M318.9 284.6h.01M268.8 320.7h.01M263.9 128.6h.01M318.3 360.2h.01M181.9 290.7h.01M372.7 208.9h.01M253.8 115.5h.01M338.1 200.3h.01M299.3 199.4h.01M359.7 249.3h.01M325.3 286.7h.01M139.1 187.5h.01M371.2 201.0h.01M293.0 238.0h.01M241.9 168.3h.01M234.5 111.4h.01M159.0 220.2h.01M273.3 339.3h.01M136.8 233.5h.01M251.3 283.5h.01M240.5 113.0h.01M290.3 330.5h.01M241.1 148.7h.01M242.2 101.6h.01M183.4 136.1h.01M235.2 91.6h.01M266.2 159.1h.01M189.4 259.4h.01M301.5 369.6h.01M371.9 207.7h.01M317.0 360.1h.01M231.9 244.5h.01M239.6 356.1h.01M248.6 114.2h.01M198.2 178.7h.01M172.4 263.4h.01M143.3 161.1h.01M239.3 364.2h.01M211.1 159.9h.01M114.8 236.9h.01M194.4 170.8h.01M127.9 267.6h.01M327.6 158.2h.01M167.5 153.6h.01M371.7 261.3h.01M115.0 208.9h.01M219.9 333.3h.01M304.7 242.0h.01M261.1 114.0h.01M353.3 287.3h.01M357.0 269.7h.01M153.5 250.8h.01M215.0 275.2h.01M177.6 148.8h.01M139.9 206.9h.01M329.5 166.6h.01M226.0 139.3h.01M154.8 207.3h.01M287.8 144.3h.01M237.0 183.7h.01M210.8 240.6h.01M114.4 280.5h.01M134.6 250.5h.01M271.5 321.0h.01M192.9 182.8h.01M210.7 363.3h.01M263.3 317.9h.01M199.2 303.4h.01M347.0 279.8h.01M138.2 247.5h.01M191.2 145.3h.01M362.9 206.5h.01M113.1 295.8h.01M290.8 263.9h.01M181.8 306.7h.01M252.7 218.4h.01M145.8 192.5h.01M178.0 244.4h.01M218.7 361.0h.01M285.5 356.2h.01M371.2 294.7h.01M241.7 100.1h.01M379.1 258.9h.01M266.0 103.9h.01M327.4 299.8h.01M156.4 195.8h.01M136.9 194.8h.01M167.8 146.6h.01M268.3 201.0h.01M224.8 326.9h.01M300.0 163.5h.01M176.0 111.7h.01M203.5 379.3h.01M162.6 182.5h.01M307.2 305.8h.01M251.1 174.8h.01M359.1 260.6h.01M170.2 175.9h.01M221.8 313.7h.01M165.6 301.1h.01M110.8 257.0h.01M226.5 193.3h.01M200.2 204.5h.01M308.3 254.3h.01M337.8 279.7h.01M311.4 328.4h.01M371.5 303.5h.01M343.0 341.7h.01M370.6 255.8h.01M297.7 151.7h.01M324.7 267.6h.01M257.1 357.9h.01M361.3 192.1h.01M227.3 127.2h.01M248.6 282.1h.01M322.0 168.0h.01M141.2 151.1h.01M239.9 271.9h.01M360.7 183.5h.01M311.8 243.2h.01M221.4 305.7h.01M302.3 331.0h.01M343.6 228.0h.01M300.4 260.2h.01M360.5 247.6h.01M227.8 349.5h.01M233.2 215.1h.01M301.5 352.8h.01M131.9 179.8h.01M300.0 166.8h.01M178.5 298.5h.01M243.3 249.2h.01M362.7 265.3h.01M192.8 294.4h.01M172.3 272.2h.01M365.7 241.6h.01M231.4 168.5h.01M244.7 309.2h.01M314.7 279.3h.01M167.7 155.4h.01M338.2 280.5h.01M367.9 340.6h.01M249.4 251.3h.01M285.9 336.9h.01M130.8 163.0h.01M250.6 264.2h.01M328.9 202.1h.01M365.0 329.7h.01M255.9 259.6h.01M299.7 282.3h.01M218.9 138.1h.01M252.3 304.6h.01M213.6 315.6h.01M289.4 291.1h.01M175.1 217.7h.01M263.4 255.6h.01M348.3 295.7h.01M165.5 163.5h.01M222.8 300.2h.01M338.2 332.3h.01M304.2 266.0h.01M262.7 223.4h.01M236.5 129.5h.01M341.4 340.2h.01M304.2 174.1h.01M195.4 316.2h.01M197.9 211.2h.01M363.3 188.5h.01M319.8 370.0h.01M247.7 148.1h.01M122.4 235.7h.01M329.9 256.8h.01M166.1 165.8h.01M375.7 212.2h.01M229.7 359.2h.01M240.5 146.7h.01M136.2 275.3h.01M224.5 339.3h.01M215.3 246.5h.01M330.6 328.2h.01M205.1 248.2h.01M305.1 188.4h.01M293.4 147.1h.01M155.0 308.5h.01M226.5 359.9h.01M236.8 236.7h.01M179.2 152.1h.01M385.4 262.1h.01M322.5 347.0h.01M200.8 111.5h.01M295.3 311.8h.01M118.0 275.1h.01M248.2 325.0h.01M229.5 115.6h.01M204.0 123.0h.01M254.8 212.4h.01M258.7 264.8h.01M255.9 194.6h.01M217.7 109.4h.01M322.3 326.6h.01M371.7 262.4h.01M353.2 303.6h.01M253.3 96.2h.01M227.5 331.2h.01M269.5 325.5h.01M279.7 366.1h.01M105.5 239.4h.01M227.2 227.1h.01M270.8 140.1h.01M321.0 320.1h.01M245.8 95.8h.01M200.7 352.3h.01M166.4 226.5h.01M342.6 355.1h.01M182.8 122.8h.01M132.7 289.2h.01M154.4 189.0h.01M321.1 271.0h.01M206.2 184.1h.01M116.1 181.3h.01M173.4 164.8h.01M274.3 124.0h.01M284.0 186.9h.01M322.3 221.1h.01M251.4 266.9h.01M315.1 326.3h.01M219.6 227.8h.01M246.0 334.1h.01M180.1 343.7h.01M240.2 213.0h.01M195.7 275.8h.01M321.1 352.2h.01M119.8 206.1h.01M309.8 249.6h.01M303.8 313.8h.01M122.6 274.3h.01M246.1 241.2h.01M312.8 295.2h.01M209.1 275.9h.01M191.5 94.0h.01M124.8 249.7h.01M190.4 194.1h.01M162.0 303.7h.01M120.5 285.1h.01M333.6 294.9h.01M246.1 364.0h.01M259.6 154.7h.01M359.6 309.4h.01M254.7 352.8h.01M242.0 336.7h.01M246.7 167.6h.01M122.0 219.7h.01M160.6 313.8h.01M260.0 374.2h.01M212.3 240.3h.01M178.8 171.4h.01M318.8 217.8h.01M207.8 192.9h.01M209.2 357.6h.01M108.9 207.7h.01M328.3 234.3h.01M278.9 282.6h.01M138.6 186.9h.01M358.1 347.7h.01M225.8 262.6h.01M165.6 144.8h.01M130.3 288.2h.01M184.3 217.9h.01M269.6 383.3h.01M274.4 113.5h.01M283.9 287.1h.01M246.0 365.3h.01M344.3 190.9h.01M405.7 252.7h.01M187.2 301.3h.01M304.4 169.4h.01M379.3 305.5h.01M274.6 297.1h.01M307.0 275.5h.01M268.5 290.2h.01M135.4 175.5h.01M378.7 225.4h.01M211.1 293.5h.01M255.1 131.0h.01M271.2 276.1h.01M241.7 250.9h.01M350.8 229.9h.01M284.6 262.9h.01M200.2 353.9h.01M301.2 194.0h.01M264.7 295.6h.01M193.5 177.7h.01M134.4 246.9h.01M345.1 193.8h.01M111.6 214.8h.01M355.9 185.2h.01M196.8 135.4h.01M312.9 249.8h.01M233.2 251.6h.01M348.1 247.0h.01M246.5 103.5h.01M317.4 183.9h.01M370.1 317.4h.01M128.0 246.1h.01M269.7 134.7h.01M368.2 200.7h.01M315.6 144.3h.01M351.7 241.4h.01M221.7 102.5h.01M163.6 134.5h.01M330.6 298.7h.01M306.1 179.0h.01M340.4 299.0h.01M323.1 264.4h.01M294.8 187.5h.01M173.1 216.5h.01M243.5 340.1h.01M284.1 181.6h.01M189.5 157.3h.01M141.8 252.9h.01M236.9 110.4h.01M109.7 235.4h.01M206.1 369.3h.01M380.0 299.1h.01M204.2 210.7h.01M228.0 306.1h.01M280.2 108.2h.01M341.3 179.7h.01M311.9 321.7h.01M368.5 257.7h.01M133.0 241.8h.01M239.7 98.2h.01M333.9 303.3h.01M223.8 242.5h.01M233.2 272.4h.01M276.3 342.8h.01M260.1 393.3h.01M209.8 311.6h.01M120.3 278.7h.01M269.6 115.9h.01M349.2 328.9h.01M293.2 314.9h.01M181.3 216.6h.01M249.2 279.7h.01M221.7 273.9h.01M324.9 181.5h.01M219.4 336.6h.01M199.3 179.5h.01M137.0 257.9h.01M236.7 261.2h.01M224.6 94.0h.01M150.6 258.6h.01M221.8 253.6h.01M221.6 201.2h.01M204.8 343.2h.01M240.8 298.0h.01M183.4 323.1h.01M213.8 307.3h.01M196.7 296.7h.01M245.7 174.6h.01M195.2 162.6h.01M309.3 337.1h.01M233.2 122.5h.01M258.7 364.8h.01M169.4 197.0h.01M122.1 197.3h.01M342.1 297.3h.01M213.6 309.9h.01M246.6 280.4h.01M250.3 171.4h.01M163.8 197.7h.01M323.3 347.0h.01M182.9 153.8h.01M326.1 246.8h.01M216.7 348.6h.01M132.0 258.5h.01M320.9 147.3h.01M199.0 95.6h.01M147.7 303.7h.01M251.2 371.3h.01M188.4 271.6h.01M363.2 197.8h.01M388.6 285.4h.01M231.6 305.4h.01M218.3 275.9h.01M229.9 91.2h.01M243.5 142.6h.01M270.3 385.0h.01M199.4 332.9h.01M156.6 220.9h.01M325.1 312.4h.01M261.3 226.9h.01M246.9 288.2h.01M217.5 239.2h.01M254.9 383.8h.01M144.5 223.0h.01M193.2 153.1h.01M341.2 352.6h.01M350.8 314.6h.01M197.2 243.6h.01M168.6 282.1h.01M113.6 224.3h.01M358.1 304.8h.01M207.2 163.9h.01M211.4 145.0h.01M217.5 272.0h.01M186.9 329.9h.01M224.0 165.3h.01M123.3 264.8h.01M315.3 214.6h.01M279.3 284.0h.01M302.9 366.9h.01M348.8 211.4h.01M228.5 305.6h.01M193.4 331.2h.01M245.7 184.5h.01M238.2 208.1h.01M267.6 360.3h.01M229.4 282.6h.01M227.0 225.4h.01M302.9 269.1h.01M354.9 236.7h.01M261.2 151.6h.01M335.2 321.8h.01M268.3 243.1h.01M303.3 196.5h.01M351.9 187.9h.01M191.8 165.0h.01M270.9 321.0h.01M194.6 341.2h.01M229.0 246.5h.01M214.7 351.2h.01M197.9 148.5h.01M216.2 239.0h.01M317.5 301.7h.01M314.8 170.7h.01M288.3 374.9h.01M330.3 196.3h.01M208.0 332.3h.01M110.5 282.6h.01M274.7 207.9h.01M244.9 266.0h.01M107.2 210.7h.01M198.1 120.9h.01M171.2 150.3h.01M339.6 351.8h.01M321.8 292.4h.01M245.2 132.7h.01M304.7 345.7h.01M387.2 233.0h.01M286.0 293.0h.01M303.6 198.1h.01M190.4 218.1h.01M306.7 355.5h.01M219.2 307.5h.01M113.7 184.8h.01M210.1 130.1h.01M333.1 282.5h.01M199.7 257.7h.01M108.7 289.4h.01M346.6 267.4h.01M236.8 192.2h.01M300.2 276.0h.01M120.8 157.4h.01M181.1 322.8h.01M309.3 277.7h.01M204.7 103.9h.01M278.7 131.7h.01M131.8 278.8h.01M250.4 195.3h.01M240.5 303.3h.01M277.0 368.3h.01M203.9 241.8h.01M210.7 146.8h.01M182.1 332.2h.01M310.4 351.0h.01M304.5 296.3h.01M186.9 336.1h.01M368.8 266.3h.01M212.7 248.4h.01M253.4 219.8h.01M254.4 279.3h.01M265.0 137.6h.01M375.3 322.9h.01M283.1 138.3h.01M273.7 359.8h.01M217.7 121.7h.01M138.9 252.8h.01M228.0 147.1h.01M158.1 313.7h.01M196.0 259.6h.01M280.6 219.2h.01M119.3 190.5h.01M399.3 254.1h.01M243.6 354.5h.01M215.3 313.9h.01M323.3 278.7h.01M272.1 110.4h.01M213.3 195.8h.01M279.7 299.0h.01M360.6 255.1h.01M320.4 149.6h.01M312.4 174.2h.01M327.4 313.3h.01M296.4 224.5h.01M343.1 353.9h.01M162.8 311.9h.01M290.5 177.9h.01M309.9 245.2h.01M168.5 252.4h.01M169.0 197.3h.01M223.7 218.1h.01M111.9 260.5h.01M120.7 232.9h.01M321.4 360.5h.01M255.1 139.5h.01M325.4 196.7h.01M187.0 169.5h.01M336.2 333.5h.01M115.9 257.2h.01M252.0 332.7h.01M174.5 362.6h.01M327.7 224.1h.01M171.7 183.6h.01M252.0 297.7h.01M338.0 252.0h.01M255.0 334.7h.01M135.1 162.5h.01M339.2 317.3h.01M249.9 329.9h.01M174.5 297.1h.01M252.2 379.6h.01M167.7 263.4h.01M166.0 137.0h.01M206.3 109.7h.01M292.8 375.1h.01M267.1 85.1h.01M244.1 94.6h.01M171.6 188.6h.01M160.5 223.4h.01M228.3 193.4h.01M314.0 264.6h.01M210.8 213.2h.01M371.1 208.2h.01M133.2 247.7h.01M279.3 198.1h.01M245.0 392.3h.01M265.0 220.8h.01M237.7 108.5h.01M346.4 282.5h.01M184.4 221.0h.01M202.2 104.2h.01M255.9 79.2h.01M230.5 287.8h.01M123.2 248.6h.01M171.2 137.3h.01M370.2 326.5h.01M246.8 98.3h.01M345.4 278.8h.01M349.6 262.1h.01M260.3 225.8h.01M264.1 347.8h.01M193.7 333.5h.01M381.0 296.6h.01M97.7 276.3h.01M252.1 116.3h.01M222.5 336.3h.01M370.5 340.0h.01M260.4 87.1h.01M310.5 183.0h.01M299.2 250.0h.01M355.3 287.4h.01M379.5 292.7h.01M367.2 188.5h.01M280.8 136.3h.01M262.2 268.4h.01M277.5 309.3h.01M249.3 282.7h.01M156.1 226.0h.01M232.7 101.2h.01M214.6 92.0h.01M193.7 233.9h.01M221.7 208.0h.01M120.9 205.6h.01M167.5 285.7h.01M287.5 124.0h.01M153.7 291.2h.01M331.5 295.0h.01M103.1 253.9h.01M185.1 221.1h.01M175.6 232.6h.01M235.5 317.8h.01M202.8 174.2h.01M128.6 267.7h.01M214.3 212.2h.01M238.2 162.1h.01M289.2 290.1h.01M299.9 337.1h.01M258.8 133.8h.01M312.6 268.7h.01M176.9 258.9h.01M182.6 186.1h.01M124.0 167.0h.01M266.4 317.2h.01M373.6 210.9h.01M395.5 261.7h.01M218.6 119.9h.01M238.6 360.6h.01M294.7 323.0h.01M231.8 225.2h.01M286.6 249.4h.01M272.0 382.7h.01M249.3 118.7h.01M234.1 186.2h.01M228.3 195.9h.01M364.2 295.4h.01M307.2 348.9h.01M337.8 203.2h.01M178.7 296.2h.01M298.9 311.3h.01M124.9 278.9h.01M315.3 346.9h.01M250.0 123.2h.01M215.7 170.6h.01M184.8 217.4h.01M300.5 288.3h.01M206.6 346.2h.01M376.6 263.3h.01M259.8 91.1h.01M366.7 282.1h.01M239.6 324.2h.01M239.8 106.2h.01M288.8 225.4h.01M301.9 305.6h.01M292.6 158.5h.01M214.8 337.9h.01M284.8 210.2h.01M298.0 273.5h.01M360.2 226.9h.01M287.8 120.7h.01M205.6 252.2h.01M341.2 341.6h.01M254.0 328.4h.01M167.5 212.4h.01M136.9 182.0h.01M119.7 224.5h.01M194.6 198.8h.01M119.1 288.7h.01M360.8 195.2h.01M284.9 358.0h.01M270.9 306.9h.01M201.3 256.0h.01M167.4 213.7h.01M120.6 234.2h.01M374.6 302.7h.01M181.4 287.0h.01M329.5 316.3h.01M194.9 328.5h.01M201.1 179.0h.01M228.4 211.0h.01M328.5 207.7h.01M285.6 241.3h.01M319.4 196.0h.01M236.0 316.0h.01M220.6 298.0h.01M279.9 222.2h.01M180.6 299.9h.01M280.2 170.9h.01M339.7 300.3h.01M147.5 316.4h.01M386.9 245.3h.01M249.0 386.8h.01M342.4 345.0h.01M182.0 224.9h.01M238.5 290.6h.01M296.2 208.7h.01M318.0 155.0h.01M208.1 251.1h.01M118.4 285.7h.01M127.0 181.9h.01M134.5 209.4h.01M124.0 144.4h.01M228.0 381.7h.01M359.8 270.9h.01M348.9 299.8h.01M262.8 299.5h.01M243.2 326.7h.01M330.9 245.1h.01M119.7 274.4h.01M133.8 206.8h.01M190.0 324.6h.01M243.9 87.0h.01M184.3 175.2h.01M361.6 256.6h.01M209.5 113.8h.01M206.2 124.9h.01M114.0 301.0h.01M356.4 226.2h.01M337.4 170.0h.01M226.7 230.7h.01M116.6 215.9h.01M215.9 235.2h.01M324.4 342.4h.01M289.3 180.0h.01M105.4 260.9h.01M182.3 213.8h.01M219.9 177.7h.01M134.0 168.9h.01M190.0 179.2h.01M207.6 194.9h.01M260.8 294.5h.01M157.5 212.9h.01M278.1 121.0h.01M127.7 289.0h.01M285.6 188.2h.01M159.9 181.4h.01M124.9 280.5h.01M110.1 191.0h.01M284.1 155.2h.01M307.2 354.7h.01M294.5 287.9h.01M322.0 295.4h.01M231.1 371.2h.01M302.9 160.0h.01M364.1 351.8h.01M124.0 196.4h.01M151.7 174.7h.01M142.8 260.7h.01M201.1 327.0h.01M311.4 317.7h.01M225.2 225.3h.01M161.6 169.4h.01M212.7 199.3h.01M220.9 100.9h.01M148.8 207.3h.01M245.7 324.4h.01M276.4 325.1h.01M216.7 340.9h.01M244.0 135.7h.01M236.8 146.8h.01M229.5 328.6h.01M383.7 269.7h.01M236.4 254.2h.01M321.3 239.6h.01M244.6 250.2h.01M219.1 147.1h.01M293.7 152.0h.01M226.3 169.0h.01M234.3 237.8h.01M201.0 294.7h.01M191.1 242.4h.01M213.5 346.8h.01M296.8 305.6h.01M310.6 243.3h.01M300.8 325.1h.01M241.7 149.0h.01M261.5 378.1h.01M170.5 220.3h.01M234.3 257.9h.01M185.6 231.9h.01M117.2 252.6h.01M213.5 263.2h.01M185.8 330.1h.01M127.5 234.2h.01M234.5 321.0h.01M169.0 302.6h.01M129.9 258.3h.01M222.0 167.5h.01M220.4 330.3h.01M141.8 296.1h.01M308.4 363.7h.01M190.6 124.4h.01M207.0 218.4h.01M194.9 184.2h.01M370.8 257.6h.01M317.7 344.3h.01M281.5 110.7h.01M222.8 205.5h.01M161.6 279.2h.01M210.0 123.3h.01M126.6 173.4h.01M137.1 177.9h.01M349.9 299.3h.01M204.4 189.7h.01M162.7 209.0h.01M251.0 354.6h.01M390.9 284.2h.01M305.3 300.1h.01M231.0 390.4h.01M207.5 176.6h.01M335.9 278.2h.01M318.2 165.1h.01M380.5 262.3h.01M259.5 340.3h.01M263.4 159.4h.01M389.4 235.6h.01M331.1 293.5h.01M306.1 337.4h.01M217.4 166.8h.01M218.0 138.5h.01M215.7 320.4h.01M133.9 171.9h.01M217.8 294.9h.01M232.4 98.2h.01M223.4 214.0h.01M203.4 95.9h.01M304.0 339.4h.01M102.8 182.0h.01M227.7 209.1h.01M365.9 293.8h.01M339.4 233.0h.01M292.3 375.9h.01M267.4 89.8h.01M383.4 255.8h.01M390.3 279.4h.01M123.2 298.8h.01M208.6 124.5h.01M181.7 223.2h.01M118.9 294.6h.01M314.1 326.9h.01M385.6 258.3h.01M369.5 327.4h.01M229.5 143.0h.01M239.8 108.9h.01M182.8 152.3h.01M133.5 265.7h.01M238.6 202.4h.01M260.1 214.5h.01M210.1 268.6h.01M196.9 298.6h.01M134.3 284.7h.01M248.2 221.8h.01M355.9 188.5h.01M152.2 183.4h.01M352.5 222.1h.01M371.6 201.2h.01M221.3 150.9h.01M271.2 164.6h.01M213.4 201.3h.01M207.9 208.9h.01M199.7 322.5h.01M174.6 227.6h.01M301.7 155.1h.01M380.2 268.0h.01M103.7 259.5h.01M223.5 103.2h.01M311.2 211.6h.01M242.1 309.3h.01M187.8 180.9h.01M345.9 213.6h.01M224.0 295.1h.01M307.6 286.9h.01M221.1 331.7h.01M199.2 289.6h.01M188.9 318.8h.01M360.7 191.5h.01M279.4 236.7h.01M209.7 136.0h.01M226.9 336.1h.01M220.1 135.7h.01M241.6 293.1h.01M158.7 255.8h.01M199.8 222.7h.01M259.7 303.7h.01M181.2 99.8h.01M317.9 310.6h.01M306.6 291.1h.01M278.0 240.4h.01M169.6 305.3h.01M229.0 261.9h.01M286.0 122.7h.01M279.2 117.2h.01M337.7 251.5h.01M314.5 146.3h.01M167.6 261.2h.01M153.6 148.6h.01M259.7 396.4h.01M187.2 198.5h.01M324.2 327.3h.01M328.9 350.5h.01M213.2 283.9h.01M208.2 368.1h.01M172.2 305.8h.01M148.9 305.0h.01M244.1 121.0h.01M291.7 273.9h.01M197.2 191.9h.01M195.3 321.7h.01M264.5 276.4h.01M122.4 169.5h.01M213.1 232.0h.01M179.6 367.2h.01M196.9 171.4h.01M184.3 100.7h.01M224.2 302.7h.01M301.5 286.0h.01M252.5 275.1h.01M184.9 293.2h.01M366.6 314.0h.01M146.4 228.9h.01M281.7 363.3h.01M223.8 341.3h.01M359.4 301.7h.01M188.3 241.5h.01M328.8 192.7h.01M171.7 188.6h.01M379.3 258.9h.01M161.2 212.6h.01M349.4 362.1h.01M308.8 175.0h.01M274.2 148.5h.01M170.0 285.5h.01M115.6 212.0h.01M330.3 255.3h.01M325.9 165.2h.01M358.5 266.7h.01M297.5 280.5h.01M114.2 193.8h.01M329.4 282.7h.01M233.3 295.6h.01M385.2 273.7h.01M251.6 228.4h.01M109.7 283.2h.01M270.4 388.2h.01M291.3 198.3h.01M393.0 247.3h.01M281.3 296.5h.01M199.7 187.8h.01M373.9 249.5h.01M259.5 265.2h.01M214.2 184.9h.01M209.7 318.3h.01M204.8 377.5h.01M280.1 164.9h.01M152.6 197.8h.01M272.3 119.5h.01M262.1 114.6h.01M356.2 344.0h.01M176.0 252.0h.01M280.1 272.9h.01M283.0 131.0h.01M356.4 214.1h.01M290.5 290.7h.01M223.6 360.5h.01M113.8 231.0h.01M225.2 172.3h.01M172.3 318.2h.01M215.3 354.5h.01M214.0 154.1h.01M259.4 395.1h.01M244.7 175.4h.01M209.5 191.9h.01M264.5 391.9h.01M282.7 243.4h.01M339.1 189.5h.01M194.3 320.6h.01M330.8 154.8h.01M267.3 197.5h.01M273.1 256.9h.01M283.9 318.0h.01M343.9 326.5h.01M297.1 192.4h.01M158.1 250.9h.01M330.4 278.6h.01M114.1 180.8h.01M233.9 88.6h.01M208.8 176.2h.01M228.2 180.4h.01M246.2 315.1h.01M297.5 370.6h.01M205.0 355.0h.01M283.1 346.0h.01M350.5 319.4h.01M184.8 190.9h.01M245.1 232.0h.01M189.0 166.1h.01M269.4 300.9h.01M275.2 182.1h.01M202.0 193.4h.01M298.9 189.1h.01M377.0 231.2h.01M260.4 205.9h.01M344.0 293.5h.01M294.6 289.8h.01M308.3 282.7h.01M155.0 297.6h.01M115.6 273.9h.01M259.3 228.2h.01M158.7 172.2h.01M197.8 283.7h.01M150.7 292.9h.01M187.5 320.6h.01M330.7 276.5h.01M256.2 171.4h.01M372.1 212.3h.01M254.9 176.1h.01M190.3 341.8h.01M276.9 123.1h.01M254.3 248.9h.01M392.8 279.8h.01M228.7 264.3h.01M267.8 156.3h.01M332.8 334.7h.01M317.6 218.1h.01M253.6 112.4h.01M210.2 105.7h.01M284.1 211.9h.01M155.4 164.4h.01M189.1 333.3h.01M111.2 204.4h.01M314.5 259.0h.01M317.8 161.3h.01M193.3 287.5h.01M360.6 281.9h.01M313.6 218.6h.01M207.0 211.1h.01M358.9 341.9h.01M156.9 156.6h.01M284.3 136.5h.01M281.8 262.3h.01M273.1 331.3h.01M126.7 208.0h.01M153.2 283.7h.01M279.8 381.7h.01M124.8 225.2h.01M277.3 309.3h.01M306.1 330.0h.01M125.0 189.5h.01M381.0 272.5h.01M290.6 212.0h.01M164.1 264.5h.01M148.1 278.9h.01M169.1 224.8h.01M204.7 250.5h.01M352.1 230.5h.01M184.1 322.8h.01M152.8 151.4h.01M231.0 175.7h.01M257.3 271.1h.01M127.5 230.2h.01M205.5 94.0h.01M311.2 152.4h.01M120.5 254.7h.01M159.9 171.8h.01M311.0 234.2h.01M215.1 284.8h.01M235.2 97.7h.01M124.8 223.0h.01M206.7 299.6h.01M341.9 190.6h.01M260.6 149.5h.01M312.9 226.1h.01M269.4 166.3h.01M253.1 261.7h.01M277.8 328.1h.01M116.6 243.5h.01M308.4 179.6h.01M361.8 240.2h.01M319.5 312.4h.01M339.7 336.0h.01M272.8 350.6h.01M259.4 329.8h.01M170.5 258.9h.01M254.5 141.6h.01M221.5 94.7h.01M307.6 223.1h.01M182.2 99.4h.01M108.7 179.5h.01M271.2 105.0h.01M328.2 347.3h.01M303.4 340.3h.01M310.5 262.9h.01M215.5 94.7h.01M240.5 370.2h.01M246.0 313.4h.01M235.0 100.1h.01M371.8 312.2h.01M354.1 348.6h.01M269.4 299.4h.01M273.8 308.6h.01M362.7 226.3h.01M192.4 148.7h.01M161.7 196.6h.01M294.9 286.7h.01M238.4 266.9h.01M299.6 369.3h.01M271.3 221.4h.01M204.2 291.3h.01M184.0 223.1h.01M290.3 342.2h.01M115.8 262.7h.01M139.2 298.2h.01M221.1 192.9h.01M255.3 145.3h.01M364.1 203.4h.01M335.6 229.3h.01M215.2 170.5h.01M231.0 173.4h.01M163.5 135.3h.01M164.4 274.2h.01M278.6 261.0h.01M261.3 292.2h.01M190.7 109.3h.01M153.8 255.7h.01M308.2 371.6h.01M270.9 383.9h.01M212.3 134.9h.01M124.3 264.6h.01M168.9 139.2h.01M213.1 334.5h.01M371.5 313.2h.01M265.6 104.8h.01M133.0 279.3h.01M290.7 222.1h.01M307.0 218.0h.01M221.0 224.4h.01M290.6 160.8h.01M381.0 271.9h.01M232.4 243.2h.01M200.1 257.2h.01M241.1 220.3h.01M197.3 134.6h.01M259.7 300.8h.01M284.1 217.4h.01M319.6 354.2h.01M394.1 242.3h.01M271.3 204.3h.01M345.5 220.4h.01M344.7 238.4h.01M309.5 352.8h.01M144.6 284.2h.01M204.4 110.6h.01M199.4 327.2h.01M190.7 245.0h.01M186.8 249.4h.01M201.8 185.6h.01M175.5 149.3h.01M117.0 205.0h.01M114.4 240.1h.01M312.3 368.6h.01M248.6 315.8h.01M188.3 368.4h.01M278.8 301.1h.01M238.2 352.2h.01M300.3 332.7h.01M252.0 372.7h.01M126.0 183.6h.01M197.8 236.2h.01M183.9 284.1h.01M157.4 196.8h.01M362.2 290.8h.01M310.2 238.2h.01M214.2 344.3h.01M254.7 127.0h.01M258.7 338.4h.01M278.0 296.6h.01M285.2 312.0h.01M99.1 195.0h.01M254.3 212.5h.01M262.1 288.8h.01M147.9 218.7h.01M262.2 295.9h.01M191.3 219.8h.01M316.4 301.8h.01M235.1 227.0h.01M137.6 310.6h.01M194.2 276.7h.01M317.5 318.6h.01M254.3 160.4h.01M168.0 130.8h.01M334.8 178.8h.01M175.6 225.2h.01M241.9 238.9h.01M331.3 160.2h.01M233.6 214.5h.01M212.4 273.8h.01M339.9 258.2h.01M223.7 219.6h.01M242.1 279.9h.01M186.0 321.5h.01M237.5 289.2h.01M259.8 113.2h.01M260.4 337.9h.01M141.9 243.9h.01M388.0 233.4h.01M229.1 179.9h.01M282.5 210.7h.01M261.1 258.9h.01M260.1 117.8h.01M224.5 256.3h.01M317.3 237.9h.01M375.1 305.4h.01M146.8 255.9h.01M150.3 204.9h.01M151.3 260.7h.01M247.4 195.4h.01M200.4 284.0h.01M367.3 248.5h.01M233.1 327.0h.01M257.5 184.6h.01M171.1 142.7h.01M144.9 258.7h.01M321.6 339.2h.01M237.9 96.0h.01M334.9 249.6h.01M344.4 255.4h.01M260.0 258.8h.01M305.2 305.8h.01M123.1 233.8h.01M210.1 199.8h.01M243.4 122.3h.01M334.3 295.5h.01M194.2 325.1h.01M232.7 84.0h.01M211.1 327.8h.01M133.9 294.6h.01M280.7 219.1h.01M194.8 224.8h.01M203.8 309.1h.01M264.1 181.5h.01M282.4 325.3h.01M185.7 141.6h.01M210.2 314.0h.01M101.1 291.7h.01M292.9 209.8h.01M194.5 338.8h.01M249.2 130.2h.01M242.4 285.2h.01M257.3 219.8h.01M218.7 97.2h.01M217.1 362.8h.01M276.2 179.1h.01M181.2 195.0h.01M104.7 176.1h.01M165.8 256.1h.01M349.3 290.5h.01M145.3 150.9h.01M204.6 191.1h.01M191.8 135.1h.01M145.2 189.8h.01M163.3 243.3h.01M255.1 381.2h.01M245.4 105.7h.01M229.5 321.9h.01M330.2 169.5h.01M237.8 171.0h.01M196.6 286.8h.01M339.8 357.6h.01M320.1 185.1h.01M168.8 141.3h.01M317.8 163.2h.01M263.9 90.8h.01M347.6 266.7h.01M204.2 236.2h.01M323.7 317.0h.01M251.2 323.7h.01M261.6 385.5h.01M208.7 256.0h.01M137.8 265.0h.01M319.5 358.4h.01M125.2 185.5h.01M274.5 91.7h.01M184.2 250.9h.01M230.0 175.6h.01M343.1 262.9h.01M193.6 199.0h.01M216.9 319.6h.01M298.8 246.2h.01M278.0 185.7h.01M156.6 144.0h.01M225.9 188.4h.01M313.2 288.3h.01M198.7 288.3h.01M359.7 198.7h.01M148.3 212.4h.01M230.5 117.7h.01M102.6 281.2h.01M321.8 365.3h.01M120.4 178.3h.01M251.1 322.8h.01M352.5 183.8h.01M193.0 226.5h.01M355.1 308.4h.01M102.8 176.3h.01M205.0 339.9h.01M291.8 326.7h.01M336.4 281.6h.01M285.2 258.6h.01M245.8 90.7h.01M250.4 108.6h.01M234.2 200.7h.01M156.0 141.5h.01M205.6 268.6h.01M227.3 136.4h.01M102.0 275.3h.01M252.6 198.0h.01M222.1 98.1h.01M256.4 234.1h.01M376.5 230.8h.01M344.1 259.9h.01M267.0 378.1h.01M340.9 330.3h.01M259.7 280.2h.01M168.6 182.9h.01M210.8 110.7h.01M320.3 343.0h.01M114.1 176.5h.01M143.0 242.1h.01M390.6 247.2h.01M196.4 268.9h.01M286.0 258.3h.01M285.1 216.5h.01M132.6 282.0h.01M134.2 254.2h.01M132.9 266.6h.01M214.8 364.8h.01M122.3 287.3h.01M221.4 128.6h.01M227.6 293.3h.01M222.8 154.8h.01M168.7 136.5h.01M250.8 142.5h.01M151.8 188.0h.01M120.1 257.2h.01M236.9 313.5h.01M209.6 261.0h.01M183.9 100.8h.01M214.2 190.7h.01M258.3 116.7h.01M341.6 278.9h.01M144.5 247.4h.01M133.1 286.4h.01M302.2 207.3h.01M165.0 168.0h.01M391.3 265.6h.01M328.2 350.0h.01M291.8 267.6h.01M310.9 153.5h.01M319.0 368.1h.01M272.4 230.8h.01M221.3 131.8h.01M224.8 92.8h.01M250.6 166.8h.01M374.7 314.1h.01M354.9 199.1h.01M283.7 251.8h.01M191.0 277.7h.01M154.7 186.0h.01M209.0 253.0h.01M237.7 284.4h.01M162.4 232.3h.01M202.0 182.0h.01M265.4 207.8h.01M113.2 250.5h.01M362.1 313.4h.01M232.5 285.3h.01M348.8 246.8h.01M312.2 330.9h.01M112.1 208.3h.01M226.5 117.2h.01M255.2 77.3h.01M324.0 326.9h.01M181.1 288.6h.01M308.6 203.3h.01M264.0 186.9h.01M219.1 199.9h.01M364.1 239.3h.01M223.7 113.2h.01M243.6 199.9h.01M124.9 287.4h.01M277.3 299.9h.01M199.9 121.9h.01M190.6 332.4h.01M310.6 355.1h.01M195.1 145.8h.01M318.1 345.8h.01M339.2 329.3h.01M227.8 349.4h.01M302.6 249.7h.01M345.1 340.3h.01M129.0 295.4h.01M239.0 118.5h.01M151.4 297.7h.01M366.7 308.1h.01M249.1 233.7h.01M218.6 263.7h.01M232.3 99.3h.01M251.1 224.8h.01M218.1 350.9h.01M309.9 303.7h.01M251.0 293.3h.01M298.5 221.2h.01M326.5 294.8h.01M199.5 275.5h.01M303.5 259.4h.01M338.8 253.1h.01M347.1 356.1h.01M302.2 377.4h.01M231.9 229.3h.01M193.5 130.7h.01M335.3 303.7h.01M289.0 323.5h.01M310.7 331.9h.01M185.3 108.5h.01M373.9 287.5h.01M283.9 360.7h.01M253.4 316.3h.01M201.8 261.3h.01M306.8 234.6h.01M274.8 283.2h.01M257.4 157.1h.01M370.7 228.5h.01M158.3 195.3h.01M176.4 260.3h.01M186.0 374.5h.01M217.4 144.9h.01M205.0 343.5h.01M211.3 95.2h.01M229.4 112.1h.01M255.7 198.9h.01M140.2 247.4h.01M153.1 177.8h.01M375.9 286.4h.01M254.6 86.3h.01M316.3 233.3h.01M223.8 329.3h.01M263.1 294.5h.01M136.1 226.2h.01M282.3 168.5h.01M222.6 229.5h.01M143.8 176.1h.01M242.1 246.1h.01M371.1 300.5h.01M349.9 316.8h.01M309.5 345.6h.01M271.6 262.8h.01M364.7 315.2h.01M190.8 342.0h.01M350.6 193.9h.01M330.5 207.0h.01M291.2 375.1h.01M193.2 233.3h.01M269.3 173.2h.01M298.0 219.5h.01M358.5 328.6h.01M334.0 214.0h.01M339.0 228.3h.01M194.2 328.2h.01M249.4 100.4h.01M185.6 333.6h.01M246.8 366.1h.01M312.0 219.9h.01M208.4 238.2h.01M242.8 106.3h.01M180.9 266.5h.01M246.0 249.1h.01M171.2 181.1h.01M197.3 116.1h.01M318.1 151.6h.01M319.1 364.0h.01M283.6 308.0h.01M265.7 352.6h.01M275.5 172.4h.01M178.2 243.7h.01M210.5 277.8h.01M229.2 155.5h.01M229.8 278.9h.01M389.8 236.4h.01M136.2 235.8h.01M378.3 257.6h.01M302.0 260.1h.01M286.1 219.6h.01M197.0 296.8h.01M350.9 301.0h.01M343.2 310.6h.01M208.4 240.5h.01M243.1 148.6h.01M194.9 263.5h.01M288.0 292.4h.01M263.9 92.7h.01M272.7 283.4h.01M217.2 265.5h.01M318.4 305.0h.01M358.6 297.2h.01M140.8 246.3h.01M231.2 183.3h.01M169.2 130.4h.01M373.0 229.3h.01M143.8 259.9h.01M239.2 239.0h.01M335.9 303.0h.01M323.4 312.4h.01M241.8 278.0h.01M248.4 221.2h.01M254.3 256.9h.01M287.8 308.9h.01M263.1 181.1h.01M222.8 287.3h.01M219.2 200.1h.01M140.9 271.4h.01M356.5 260.6h.01M278.4 232.4h.01M307.7 202.0h.01M331.4 309.4h.01M224.6 189.8h.01M197.3 129.9h.01M279.2 129.2h.01M130.1 226.2h.01M121.4 262.2h.01M155.7 256.8h.01M109.5 249.3h.01M249.3 362.7h.01M202.7 290.4h.01M127.8 213.5h.01M190.2 109.3h.01M283.1 305.7h.01M226.6 129.3h.01M185.9 152.1h.01M312.9 322.3h.01M279.1 286.2h.01M188.5 373.9h.01M349.6 259.9h.01M251.5 116.2h.01M180.0 356.7h.01M162.4 285.9h.01M321.6 303.4h.01M134.7 286.6h.01M289.9 331.6h.01M318.7 322.4h.01M312.3 153.6h.01M375.8 208.9h.01M346.8 269.2h.01M219.4 288.0h.01M198.7 323.4h.01M271.2 332.9h.01M168.5 219.6h.01M295.9 343.6h.01M328.5 231.1h.01M225.5 350.4h.01M337.3 308.1h.01M143.4 255.0h.01M218.5 286.9h.01M216.1 163.1h.01M116.5 247.3h.01M283.6 192.3h.01M183.2 145.1h.01M267.3 204.5h.01M135.4 210.6h.01M146.1 146.8h.01M202.0 364.1h.01M352.3 351.7h.01M286.1 145.3h.01M261.5 264.5h.01M344.4 261.0h.01M196.0 137.1h.01M299.8 301.3h.01M210.2 97.5h.01M305.0 356.4h.01M196.1 291.2h.01M172.9 262.7h.01M332.2 257.7h.01M368.5 286.5h.01M280.3 214.5h.01M374.2 234.8h.01M257.1 95.2h.01M226.1 268.4h.01M282.8 106.9h.01M179.9 182.0h.01M156.7 256.9h.01M217.7 118.8h.01M368.4 260.7h.01M216.8 368.9h.01M313.4 171.7h.01M226.6 322.3h.01M208.2 206.6h.01M257.4 153.3h.01M247.4 103.4h.01M189.9 318.3h.01M295.7 219.0h.01M266.4 167.8h.01M303.2 191.6h.01M259.9 98.0h.01M229.6 132.5h.01M327.4 149.4h.01M256.9 110.4h.01M164.5 271.8h.01M233.8 208.2h.01M115.4 301.2h.01M366.0 306.5h.01M301.0 244.0h.01M136.5 152.2h.01M276.5 149.2h.01M249.1 297.2h.01M143.8 248.3h.01M297.8 292.7h.01M261.2 187.4h.01M262.8 81.4h.01M131.0 260.3h.01M280.0 177.2h.01M342.3 241.8h.01M326.2 252.9h.01M148.5 252.5h.01M211.2 250.2h.01M283.9 129.8h.01M334.4 329.9h.01M203.6 237.5h.01M343.8 334.8h.01M354.2 307.4h.01M317.8 309.2h.01M293.2 215.9h.01M385.8 236.4h.01M303.4 263.2h.01M189.0 318.1h.01M296.8 235.3h.01M228.1 230.6h.01M262.3 127.8h.01M145.2 290.6h.01M196.1 343.2h.01M237.9 301.4h.01M224.2 248.8h.01M111.4 277.4h.01M246.8 371.9h.01M371.3 233.4h.01M183.6 154.5h.01M233.4 208.1h.01M336.4 262.9h.01M334.4 193.1h.01M211.9 97.0h.01M265.4 374.7h.01M113.7 279.2h.01M230.1 108.6h.01M324.0 222.3h.01M320.8 282.0h.01M265.3 175.3h.01M209.1 256.7h.01M354.2 311.7h.01M380.9 255.4h.01M171.7 167.4h.01M154.1 307.9h.01M111.1 285.7h.01M221.7 154.5h.01M255.5 325.5h.01M201.1 345.4h.01M262.7 232.4h.01M191.6 192.1h.01M222.7 286.0h.01M369.2 274.6h.01M236.5 169.5h.01M171.2 138.0h.01M298.3 299.7h.01M354.8 215.6h.01M263.5 330.6h.01M111.9 276.3h.01M142.7 163.2h.01M152.5 234.7h.01M250.6 292.2h.01M299.4 312.1h.01M171.2 142.3h.01M195.6 335.2h.01M234.3 332.2h.01M258.0 284.8h.01M274.6 208.8h.01M370.0 196.5h.01M314.6 159.0h.01M242.4 123.8h.01M133.9 181.3h.01M297.5 289.4h.01M143.6 262.5h.01M240.8 227.9h.01M334.6 337.4h.01M198.1 249.2h.01M195.7 225.5h.01M191.8 328.3h.01M197.8 377.5h.01M332.6 226.3h.01M242.1 88.5h.01M135.7 193.1h.01M180.8 187.8h.01M193.6 147.2h.01M246.7 227.8h.01M153.3 154.3h.01M196.5 325.5h.01M258.3 274.7h.01M302.1 173.8h.01M134.8 299.6h.01M202.8 165.5h.01M367.7 306.6h.01M316.9 215.1h.01M147.6 173.1h.01M243.1 356.5h.01M256.0 97.7h.01M152.3 156.8h.01M336.2 299.8h.01M361.5 207.1h.01M271.2 122.8h.01M239.1 141.1h.01M370.6 271.2h.01M182.4 191.6h.01M308.6 181.5h.01M221.0 111.6h.01M333.2 315.6h.01M176.0 212.9h.01M194.1 338.7h.01M219.1 209.5h.01M189.6 305.7h.01M158.5 255.7h.01M181.7 279.7h.01M275.6 141.8h.01M230.2 162.1h.01M281.6 354.2h.01M279.3 306.3h.01M157.7 223.7h.01M109.4 237.1h.01M249.8 196.9h.01M142.2 189.2h.01M373.3 324.1h.01M186.5 182.9h.01M170.4 238.8h.01M185.0 114.3h.01M113.2 271.3h.01M129.6 231.1h.01M285.6 307.5h.01M250.7 167.1h.01M219.3 279.4h.01M307.8 286.1h.01M262.3 279.2h.01M190.2 178.2h.01M124.9 274.9h.01M185.6 143.3h.01M320.4 219.2h.01M200.4 230.5h.01M337.9 208.7h.01M106.3 238.9h.01M142.6 207.4h.01M261.3 352.9h.01M118.8 298.4h.01M284.4 113.3h.01M172.9 216.9h.01M290.6 336.7h.01M266.0 232.5h.01M200.1 365.8h.01M366.0 309.0h.01M125.3 225.1h.01M292.0 260.4h.01M274.6 134.0h.01M360.6 352.3h.01M297.3 303.2h.01M298.7 353.7h.01M306.3 235.5h.01M264.9 206.3h.01M253.2 213.5h.01M280.7 162.6h.01M252.6 341.1h.01M150.9 207.2h.01M285.9 135.3h.01M142.3 235.4h.01M210.1 207.6h.01M121.7 263.8h.01M189.9 339.4h.01M171.7 120.4h.01M182.8 132.5h.01M284.8 287.6h.01M255.1 161.5h.01M181.4 294.0h.01M176.3 218.6h.01M349.3 192.4h.01M309.9 246.8h.01M234.1 139.1h.01M297.7 355.5h.01M193.7 177.7h.01M137.6 203.0h.01M288.4 352.5h.01M361.0 330.0h.01M288.7 383.3h.01M239.2 353.0h.01M258.7 133.4h.01M279.7 167.9h.01M214.3 357.5h.01M273.3 216.3h.01M257.1 201.3h.01M221.8 202.3h.01M258.7 234.1h.01M244.0 293.5h.01M380.8 289.8h.01M306.1 202.6h.01M333.0 260.3h.01M277.7 187.5h.01M288.9 367.4h.01M342.5 308.6h.01M216.6 254.9h.01M226.1 101.5h.01M250.4 87.7h.01M321.9 329.1h.01M307.3 336.4h.01M226.1 259.4h.01M165.9 167.5h.01M232.8 168.5h.01M117.0 243.5h.01M285.7 268.5h.01M129.9 163.2h.01M347.1 300.4h.01M137.2 270.5h.01M120.8 273.8h.01M245.9 228.6h.01M211.0 290.0h.01M209.7 340.1h.01M247.0 212.9h.01M326.3 256.7h.01M264.0 162.7h.01M249.3 338.5h.01M228.0 157.6h.01M264.3 278.1h.01M159.7 165.2h.01M178.1 119.1h.01M197.1 364.9h.01M364.9 344.7h.01M141.0 296.5h.01M211.7 306.6h.01M197.1 253.5h.01M325.9 252.8h.01M381.2 273.0h.01M384.6 284.7h.01M110.6 244.5h.01M220.5 152.6h.01M320.5 158.2h.01M353.0 300.8h.01M127.1 278.3h.01M153.4 193.5h.01M303.3 272.3h.01M271.2 173.5h.01M178.8 116.3h.01M223.1 153.6h.01M159.4 322.9h.01M387.1 273.4h.01M169.5 310.0h.01M222.5 333.7h.01M169.1 225.6h.01M208.4 170.0h.01M203.7 102.3h.01M240.0 293.9h.01M280.0 313.7h.01M239.1 313.5h.01M284.9 192.0h.01M265.2 284.6h.01M319.9 310.3h.01M307.6 203.9h.01M156.2 225.1h.01M226.2 186.0h.01M169.5 244.4h.01M240.0 310.5h.01M270.8 133.4h.01M384.4 281.8h.01M297.9 310.1h.01M260.6 330.8h.01M238.6 226.1h.01M257.8 107.3h.01M329.0 317.6h.01M156.3 197.4h.01M317.6 360.3h.01M243.0 326.8h.01M105.4 251.8h.01M124.2 259.5h.01M186.1 259.7h.01M238.3 89.6h.01M137.4 278.6h.01M269.6 378.6h.01M120.5 171.4h.01M243.8 101.0h.01M129.3 289.1h.01M208.8 183.6h.01M258.2 342.6h.01M160.9 262.0h.01M260.7 100.4h.01M386.5 286.0h.01M365.9 257.5h.01M291.3 369.7h.01M246.9 185.1h.01M308.2 151.7h.01M337.6 254.8h.01M231.7 251.9h.01M344.8 316.9h.01M373.6 210.9h.01M129.2 197.6h.01M326.4 281.0h.01M348.4 272.8h.01M208.1 302.2h.01M198.6 140.6h.01M218.1 264.2h.01M381.1 281.0h.01M334.7 163.6h.01M176.5 161.9h.01M254.6 379.2h.01M257.4 296.5h.01M250.1 358.6h.01M264.9 125.1h.01M340.8 347.1h.01M272.4 209.4h.01M188.7 99.7h.01M208.9 308.4h.01M146.0 158.1h.01M355.5 317.3h.01M320.0 164.8h.01M220.1 205.0h.01M190.2 374.8h.01M297.7 232.5h.01M311.7 354.2h.01M275.9 122.4h.01M218.8 340.1h.01M186.4 286.0h.01M307.7 280.7h.01M397.7 261.6h.01M193.0 276.1h.01M329.7 180.4h.01M257.5 312.0h.01M277.8 374.0h.01M225.3 299.0h.01M114.3 223.5h.01M217.7 119.6h.01M304.5 330.5h.01M321.5 370.4h.01M273.2 103.8h.01M249.0 375.9h.01M191.4 272.3h.01M171.2 136.4h.01M240.9 340.3h.01M280.3 110.2h.01M357.1 208.9h.01M241.3 142.5h.01M368.9 254.9h.01M367.4 299.7h.01M237.4 185.2h.01M221.4 305.3h.01M398.2 245.7h.01M337.6 293.1h.01M203.7 377.2h.01M362.7 312.2h.01M182.4 154.8h.01M356.9 196.0h.01M322.5 313.4h.01M334.0 329.1h.01M227.9 248.3h.01M238.8 210.0h.01M381.0 294.9h.01M260.5 124.5h.01M196.3 234.1h.01M193.9 272.7h.01M299.8 284.6h.01M206.5 249.6h.01M218.0 295.8h.01M144.5 251.8h.01M225.5 344.2h.01M274.9 332.8h.01M192.8 336.5h.01M282.5 253.2h.01M206.4 321.5h.01M165.7 133.1h.01M287.6 176.1h.01M222.1 107.9h.01M216.5 327.9h.01M136.4 255.9h.01M182.4 220.5h.01M113.9 211.6h.01M142.3 235.7h.01M253.4 246.8h.01M193.5 129.2h.01M170.3 273.7h.01M381.0 270.6h.01M362.6 188.5h.01M370.9 266.2h.01M281.6 377.0h.01M113.2 289.8h.01M183.4 299.7h.01M319.0 362.9h.01M210.2 168.8h.01M382.8 245.2h.01M162.4 305.1h.01M250.7 165.2h.01M161.8 302.2h.01M198.4 323.2h.01M212.4 349.9h.01M385.5 257.6h.01M103.5 188.9h.01M265.8 198.8h.01M349.8 312.2h.01M353.3 287.2h.01M384.4 246.3h.01M139.5 183.5h.01M385.8 288.4h.01M146.4 231.1h.01M328.3 342.0h.01M242.7 172.1h.01M251.2 93.0h.01M366.9 323.5h.01M247.3 276.2h.01M191.3 231.0h.01M389.4 273.5h.01M228.1 228.3h.01M335.5 303.5h.01M284.4 347.2h.01M352.5 209.2h.01M271.5 261.5h.01M166.2 159.5h.01M156.2 186.6h.01M278.8 358.7h.01M314.0 345.1h.01M222.1 127.9h.01M212.9 136.2h.01M128.5 236.3h.01M252.1 338.7h.01M258.0 265.0h.01M267.2 316.1h.01M195.5 298.3h.01M200.1 239.6h.01M127.4 284.1h.01M355.6 188.1h.01M220.0 247.0h.01M336.1 313.7h.01M273.9 280.4h.01M197.0 177.2h.01M245.3 141.3h.01M185.9 117.6h.01M129.3 222.1h.01M152.8 264.5h.01M273.2 342.3h.01M326.6 277.9h.01M185.8 323.2h.01M281.9 146.2h.01M147.1 256.6h.01M370.7 234.0h.01M284.0 379.9h.01M276.2 298.7h.01M374.4 336.4h.01M343.8 221.5h.01M366.4 335.1h.01M298.4 273.5h.01M153.9 194.2h.01M242.3 320.4h.01M248.3 371.1h.01M155.5 227.6h.01M377.9 251.4h.01M293.9 318.9h.01M163.5 149.3h.01M103.8 281.8h.01M212.3 146.5h.01M266.6 122.5h.01M156.4 189.7h.01M187.4 159.1h.01M220.2 276.2h.01M250.4 80.5h.01M138.2 141.8h.01M114.1 245.4h.01M322.3 225.9h.01M286.8 331.3h.01M319.6 347.6h.01M272.3 146.5h.01M157.5 293.6h.01M255.0 328.4h.01M185.7 231.2h.01M129.0 240.7h.01M169.0 123.7h.01M209.2 185.9h.01M317.9 158.4h.01M316.3 192.6h.01M197.3 121.6h.01M285.9 376.4h.01M289.5 313.5h.01M253.2 131.4h.01M242.0 98.3h.01M270.8 376.9h.01M220.1 210.4h.01M206.9 307.2h.01M147.7 234.1h.01M300.8 220.3h.01M263.2 189.6h.01M245.5 210.5h.01M243.9 88.9h.01M160.1 162.6h.01M230.5 107.0h.01M279.4 178.9h.01M213.3 137.0h.01M335.0 330.4h.01M267.8 385.4h.01M267.1 189.9h.01M212.2 132.4h.01M343.7 342.4h.01M202.0 245.2h.01M217.4 186.8h.01M268.6 118.6h.01M221.3 228.2h.01M264.3 197.2h.01M312.0 289.9h.01M266.8 239.6h.01M255.1 179.4h.01M253.1 305.4h.01M146.6 155.6h.01M212.9 341.6h.01M344.8 262.2h.01M284.8 152.0h.01M382.4 278.3h.01M236.0 273.3h.01M233.3 200.7h.01M134.4 263.6h.01M272.1 366.2h.01M127.2 215.0h.01M286.9 160.3h.01M209.7 234.9h.01M328.6 337.7h.01M276.1 372.7h.01M211.7 232.0h.01M113.6 262.2h.01M249.1 205.6h.01M334.8 325.5h.01M148.2 235.5h.01M197.4 94.2h.01M198.6 292.3h.01M246.3 387.1h.01M238.7 180.6h.01M203.7 236.8h.01M236.2 340.6h.01M247.1 134.9h.01M237.2 312.2h.01M211.7 340.6h.01M360.3 193.9h.01M281.3 314.0h.01M243.7 108.2h.01M214.9 356.3h.01M114.2 197.5h.01M361.2 298.0h.01M338.2 337.7h.01M196.6 147.0h.01M249.2 207.3h.01M323.0 229.3h.01M198.9 272.7h.01M251.4 206.7h.01M346.6 317.1h.01M246.2 217.5h.01M299.5 238.5h.01M246.7 98.4h.01M262.7 328.4h.01M302.5 207.8h.01M270.4 368.2h.01M222.9 333.3h.01M225.9 263.4h.01M159.3 271.6h.01M249.2 306.7h.01M265.2 178.4h.01M144.0 256.9h.01M179.9 281.7h.01M268.7 328.6h.01M336.1 317.1h.01M320.6 226.3h.01M267.9 361.0h.01M299.0 295.6h.01M189.1 198.5h.01M126.5 268.1h.01M161.0 152.4h.01M263.9 289.2h.01M140.9 198.7h.01M183.3 327.0h.01M241.1 251.3h.01M173.2 358.2h.01M155.1 312.0h.01M297.8 367.3h.01M162.3 147.7h.01M226.5 299.7h.01M233.5 245.0h.01M234.8 259.1h.01M295.4 328.6h.01M282.4 297.8h.01M105.7 246.1h.01M316.5 251.3h.01M223.1 301.8h.01M194.6 337.7h.01M277.0 114.4h.01M289.2 312.9h.01M296.5 374.0h.01M310.1 229.8h.01M208.4 88.0h.01M347.2 334.8h.01M219.5 229.4h.01M213.9 207.1h.01M339.9 324.7h.01M278.6 178.4h.01M143.6 169.6h.01M103.7 201.7h.01M193.3 238.4h.01M111.4 193.4h.01M228.7 179.5h.01M189.0 206.5h.01M237.8 288.1h.01M131.1 194.3h.01M154.0 269.4h.01M112.2 246.4h.01M130.7 204.7h.01M224.0 303.0h.01M158.7 282.4h.01M188.9 202.4h.01M184.4 127.1h.01M319.9 262.0h.01M140.9 251.7h.01M149.6 298.6h.01M111.0 286.1h.01M195.1 102.2h.01M357.3 186.5h.01M212.6 283.5h.01M103.4 192.4h.01M207.5 294.6h.01M264.4 101.7h.01M296.7 187.6h.01M239.6 171.7h.01M346.5 327.5h.01M232.3 311.9h.01M394.9 258.0h.01M189.2 179.7h.01M244.1 81.8h.01M190.0 321.3h.01M272.2 174.6h.01M138.6 304.1h.01M181.2 219.2h.01M224.3 325.6h.01M275.3 282.1h.01M271.8 127.6h.01M107.9 193.7h.01M284.4 271.7h.01M292.4 379.9h.01M240.5 244.3h.01M205.5 217.4h.01M245.7 267.3h.01M158.6 165.8h.01M211.3 136.1h.01M105.0 274.8h.01M240.0 234.7h.01M373.4 212.7h.01M196.7 310.9h.01M250.5 244.8h.01M214.8 195.5h.01M170.8 312.6h.01M235.5 150.6h.01M348.0 341.1h.01M337.7 353.7h.01M177.0 307.6h.01M132.2 244.4h.01M217.2 350.2h.01M338.2 211.2h.01M253.8 364.3h.01M296.9 226.0h.01M169.5 289.0h.01M289.3 181.3h.01M286.0 353.3h.01M395.6 255.0h.01M355.0 206.8h.01M216.6 283.9h.01M361.2 261.9h.01M261.9 383.3h.01M256.5 157.4h.01M341.5 307.8h.01M213.8 343.5h.01M290.9 365.7h.01M349.3 307.0h.01M353.0 246.4h.01M233.1 322.9h.01M141.1 312.9h.01M270.5 94.0h.01M364.9 275.0h.01M158.5 185.0h.01M214.8 147.3h.01M176.2 276.6h.01M206.0 215.5h.01M247.9 370.9h.01M160.0 204.9h.01M237.8 175.3h.01M289.0 259.3h.01M348.2 348.3h.01M183.6 149.5h.01M237.5 325.2h.01M134.7 226.6h.01M178.5 212.3h.01M305.3 342.0h.01M333.4 162.8h.01M250.1 240.0h.01M162.3 310.3h.01M262.0 168.7h.01M266.7 277.9h.01M169.3 154.8h.01M218.1 249.2h.01M189.5 228.5h.01M194.4 135.6h.01M252.4 175.1h.01M154.8 285.2h.01M123.4 213.3h.01M197.2 347.8h.01M229.6 228.6h.01M279.8 324.0h.01M235.1 155.0h.01M173.2 273.1h.01M213.0 99.5h.01M129.3 184.2h.01M309.9 318.1h.01M163.2 165.1h.01M143.6 274.2h.01M268.4 378.2h.01M233.3 88.0h.01M153.3 263.8h.01M231.5 144.7h.01M201.2 164.4h.01M175.2 273.9h.01M230.1 312.1h.01M336.4 200.8h.01M238.4 297.7h.01M195.5 109.1h.01M283.3 361.7h.01M335.6 226.9h.01M378.9 312.3h.01M208.4 309.0h.01M272.1 355.4h.01M269.5 364.9h.01M288.5 311.5h.01M276.9 203.0h.01M171.1 252.4h.01M252.4 328.2h.01M258.6 85.4h.01M221.1 250.8h.01M164.2 281.9h.01M204.3 192.7h.01M359.9 287.5h.01M322.6 195.6h.01M230.5 302.0h.01M188.7 292.7h.01M203.2 324.1h.01M316.9 234.8h.01M131.0 263.5h.01M255.1 360.0h.01M288.1 137.9h.01M267.9 174.9h.01M200.9 228.8h.01M115.5 232.9h.01M151.5 220.8h.01M275.4 218.8h.01M375.7 276.3h.01M190.2 162.8h.01M181.2 253.5h.01M215.3 340.4h.01M316.0 288.0h.01M237.9 110.5h.01M339.2 281.1h.01M331.5 283.6h.01M199.9 288.1h.01M174.4 128.5h.01M231.5 271.9h.01M351.0 344.6h.01M362.0 206.3h.01M364.6 287.1h.01M187.9 137.5h.01M353.1 203.9h.01M129.5 242.0h.01M223.2 232.8h.01M160.3 316.3h.01M194.8 154.8h.01M160.2 236.6h.01M340.4 292.5h.01M278.4 226.3h.01M351.7 263.8h.01M385.9 267.1h.01M213.7 348.3h.01M309.9 226.7h.01M357.3 200.4h.01M209.0 315.6h.01M258.1 157.0h.01M246.0 279.4h.01M286.9 195.9h.01M159.9 263.6h.01M293.8 150.7h.01M135.4 303.0h.01M226.0 250.4h.01M164.8 303.5h.01M346.6 347.2h.01M209.8 253.2h.01M222.4 277.4h.01M263.1 334.5h.01M237.1 347.4h.01M326.0 332.3h.01M262.7 348.8h.01M257.0 107.2h.01M209.1 332.9h.01M337.6 243.7h.01M330.5 321.3h.01M374.6 289.3h.01M279.6 287.9h.01M298.6 260.3h.01M312.4 214.0h.01M374.9 250.7h.01M366.6 263.7h.01M141.2 268.4h.01M147.9 233.6h.01M357.0 296.1h.01M186.9 146.0h.01M344.7 202.7h.01M122.8 226.0h.01M288.5 352.4h.01M264.7 130.4h.01M232.7 276.9h.01M258.5 337.6h.01M213.5 218.3h.01M235.0 273.5h.01M178.5 219.9h.01M107.9 256.8h.01M167.3 231.8h.01M194.8 139.1h.01M206.3 284.8h.01M146.9 196.6h.01M355.0 217.4h.01M286.0 252.0h.01M199.6 307.6h.01M177.0 274.0h.01M318.7 242.7h.01M365.7 314.7h.01M345.5 188.6h.01M238.9 335.3h.01M240.5 83.7h.01M210.5 261.3h.01M278.7 129.8h.01M317.9 232.9h.01M364.8 314.0h.01M395.0 246.8h.01M282.0 292.1h.01M188.2 373.2h.01M244.8 183.3h.01M317.5 152.5h.01M130.3 165.5h.01M374.5 330.9h.01M237.4 363.2h.01M117.4 190.0h.01M207.8 307.0h.01M202.3 221.8h.01M196.1 326.8h.01M220.0 364.2h.01M329.4 318.4h.01M160.3 299.5h.01M334.5 331.0h.01M183.3 339.8h.01M123.1 208.9h.01M258.4 165.4h.01M168.9 225.6h.01M309.9 192.2h.01M231.2 384.5h.01M227.0 377.2h.01M257.9 109.9h.01M270.2 283.4h.01M317.9 260.0h.01M163.0 208.9h.01M244.7 174.2h.01M166.0 256.2h.01M121.8 216.2h.01M291.8 213.5h.01M145.4 258.6h.01M282.9 344.9h.01M213.8 330.6h.01M327.0 196.7h.01M279.6 223.9h.01M335.4 203.3h.01M207.5 337.1h.01M338.0 210.8h.01M207.0 145.0h.01M260.5 276.7h.01M165.2 334.4h.01M312.1 299.5h.01M378.9 289.4h.01M338.7 256.7h.01M144.8 252.7h.01M214.8 336.6h.01M161.7 158.5h.01M284.0 195.8h.01M169.2 125.5h.01M370.1 258.3h.01M246.5 231.6h.01M195.7 122.1h.01M281.7 190.5h.01M339.6 311.5h.01M269.6 155.2h.01M231.3 87.9h.01M318.9 324.6h.01M316.8 235.9h.01M381.6 265.6h.01M330.7 292.4h.01M147.3 274.3h.01M176.3 196.2h.01M184.3 237.9h.01M334.6 220.0h.01M377.2 284.5h.01M342.9 275.5h.01M258.0 190.2h.01M379.2 244.8h.01M287.4 202.9h.01M389.3 243.5h.01M115.8 194.5h.01M330.2 232.0h.01M284.6 360.4h.01M160.4 183.2h.01M315.8 245.7h.01M276.9 257.6h.01M225.6 99.4h.01M161.9 263.7h.01M142.2 164.8h.01M305.8 304.8h.01M259.0 112.8h.01M286.8 319.0h.01M357.0 310.2h.01M116.3 251.2h.01M220.5 137.7h.01M206.2 305.2h.01M330.8 203.1h.01M146.8 274.6h.01M135.2 250.6h.01M164.8 259.6h.01M255.5 182.2h.01M271.1 257.4h.01M170.6 179.9h.01M216.0 178.7h.01M101.7 245.6h.01M177.7 167.4h.01M99.5 249.4h.01M140.6 177.0h.01M224.9 355.6h.01M184.1 361.4h.01M228.8 121.0h.01M156.9 161.9h.01M237.2 119.4h.01M292.2 314.4h.01M175.6 221.6h.01M192.5 310.9h.01M295.3 219.7h.01M137.6 288.5h.01M204.4 92.5h.01M162.4 175.2h.01M367.3 260.9h.01M165.0 315.0h.01M322.1 233.5h.01M333.8 170.7h.01M227.1 133.9h.01M197.6 245.9h.01M141.9 239.1h.01M273.6 105.0h.01M212.4 112.0h.01M180.1 171.6h.01M191.8 278.5h.01M270.3 308.6h.01M252.1 223.4h.01M261.5 234.8h.01M124.6 296.9h.01M323.4 293.4h.01M148.8 214.9h.01M349.8 330.9h.01M279.7 317.1h.01M233.2 200.2h.01M204.2 174.3h.01M160.6 304.8h.01M228.2 342.8h.01M263.8 338.9h.01M307.6 335.8h.01M172.6 295.8h.01M175.6 123.3h.01M285.1 239.0h.01M302.0 158.5h.01M358.5 223.5h.01M161.3 201.7h.01M326.1 314.9h.01M301.9 158.1h.01M101.1 274.7h.01M402.0 255.5h.01M320.4 226.6h.01M240.8 305.9h.01M329.8 339.4h.01M209.6 148.9h.01M137.7 202.3h.01M136.1 307.1h.01M166.3 253.4h.01M311.0 235.3h.01M306.1 169.9h.01M146.8 205.4h.01M163.6 221.1h.01M333.0 283.2h.01M261.3 346.9h.01M287.3 368.3h.01M185.4 328.6h.01M165.0 279.4h.01M335.7 177.4h.01M367.1 309.3h.01M163.9 266.6h.01M385.4 254.1h.01M318.4 167.3h.01M141.6 244.1h.01M345.2 318.4h.01M205.4 367.7h.01M162.3 302.4h.01M220.7 97.8h.01M344.1 262.7h.01M255.8 221.0h.01M337.4 333.5h.01M190.7 188.3h.01M243.0 241.0h.01M357.6 328.9h.01M130.1 239.1h.01M260.3 280.1h.01M227.9 93.1h.01M326.9 200.7h.01M235.0 205.3h.01M355.0 279.2h.01M247.2 288.4h.01M267.2 358.4h.01M122.8 295.2h.01M190.3 335.8h.01M217.0 286.7h.01M328.5 196.7h.01M239.9 239.1h.01M317.4 357.6h.01M236.9 381.0h.01M264.8 282.6h.01M187.6 177.7h.01M184.8 251.5h.01M263.3 129.6h.01M343.6 208.5h.01M266.4 197.0h.01M253.8 115.0h.01M253.0 171.5h.01M101.7 263.4h.01M215.8 176.3h.01M163.4 180.6h.01M366.7 236.2h.01M283.1 377.8h.01M344.4 347.1h.01M241.3 256.9h.01M297.0 245.4h.01M321.0 287.2h.01M184.4 363.5h.01M196.8 314.9h.01M149.1 250.9h.01M339.4 276.6h.01M256.4 105.3h.01M304.0 356.4h.01M288.7 326.1h.01M311.5 188.3h.01M290.0 241.5h.01M323.7 282.0h.01M370.5 304.8h.01M322.0 196.4h.01M168.0 162.2h.01M238.1 104.3h.01M160.0 292.6h.01M248.8 377.4h.01M335.6 196.4h.01M166.2 287.0h.01M250.9 166.8h.01M211.3 311.3h.01M265.0 112.7h.01M162.1 249.6h.01M242.6 131.1h.01M124.1 253.5h.01M106.4 171.9h.01M364.9 267.6h.01M308.3 327.4h.01M265.4 236.7h.01M218.7 117.9h.01M204.3 360.0h.01M115.6 297.0h.01M124.0 171.9h.01M220.5 96.1h.01M260.3 224.2h.01M256.9 274.1h.01M310.2 245.3h.01M166.5 284.0h.01M331.2 253.9h.01M186.5 347.1h.01M337.0 324.2h.01M208.6 122.8h.01M329.3 336.6h.01M154.4 239.1h.01M294.2 372.0h.01M255.9 124.1h.01M146.3 233.2h.01M174.5 286.0h.01M357.3 297.4h.01M239.0 116.6h.01M364.2 327.2h.01M181.6 218.4h.01M232.8 266.9h.01M187.1 213.2h.01M222.4 264.2h.01M241.5 244.6h.01M113.3 246.3h.01M161.3 213.3h.01M165.4 183.1h.01M262.4 330.5h.01M334.2 230.0h.01M183.6 205.6h.01M242.1 92.4h.01M247.2 342.8h.01M279.2 239.1h.01M244.7 366.7h.01M155.9 218.5h.01M199.5 269.7h.01M195.5 233.3h.01M205.0 291.4h.01M140.8 192.7h.01M272.3 236.2h.01M133.1 308.2h.01M231.6 296.5h.01M140.0 162.9h.01M195.8 266.9h.01M213.6 128.0h.01M129.5 176.8h.01M352.5 240.7h.01M253.1 96.4h.01M347.9 283.5h.01M134.5 214.8h.01M329.1 303.2h.01M218.5 109.3h.01M222.5 308.8h.01M314.0 333.2h.01M199.8 159.0h.01M170.9 131.7h.01M159.1 305.9h.01M148.4 200.6h.01M197.0 113.7h.01M148.6 238.7h.01M344.3 201.3h.01M189.7 321.4h.01M295.5 358.7h.01M193.6 135.0h.01M215.6 159.2h.01M209.8 93.1h.01M266.8 380.9h.01M224.7 344.2h.01M171.6 195.4h.01M137.5 224.0h.01M291.8 189.0h.01M183.9 241.5h.01M116.6 235.5h.01M298.6 236.3h.01M265.4 369.8h.01M216.2 293.4h.01M110.4 268.3h.01M271.2 133.4h.01M181.8 197.6h.01M208.6 326.7h.01M315.1 370.9h.01M198.7 135.0h.01M108.5 292.6h.01M363.9 291.8h.01M342.3 271.5h.01M196.0 365.6h.01M151.1 208.0h.01M211.4 351.3h.01M242.3 319.4h.01M395.0 263.0h.01M333.0 213.8h.01M254.4 92.2h.01M235.6 103.0h.01M254.6 130.4h.01M156.9 280.5h.01M233.8 362.2h.01M293.4 262.0h.01M119.2 292.5h.01M370.2 349.9h.01M274.4 112.6h.01M309.3 203.6h.01M184.4 359.2h.01M174.0 264.3h.01M167.3 153.6h.01M243.7 309.5h.01M229.4 192.5h.01M201.8 224.1h.01M118.0 214.2h.01M233.7 114.3h.01M280.1 366.0h.01M213.2 202.6h.01M238.5 171.7h.01M198.2 223.1h.01M190.6 198.0h.01M141.8 289.3h.01M306.5 283.5h.01M214.2 313.1h.01M150.1 177.6h.01M339.0 227.9h.01M143.3 153.9h.01M365.0 298.3h.01M333.1 153.8h.01M234.5 97.3h.01M276.4 386.6h.01M130.0 225.8h.01M134.2 235.2h.01M193.4 328.8h.01M350.5 345.7h.01M113.7 199.0h.01M188.3 331.8h.01M197.3 161.5h.01M208.4 355.6h.01M260.3 256.3h.01M263.5 211.2h.01M132.2 299.2h.01M115.4 210.7h.01M132.9 276.3h.01M309.9 364.2h.01M132.0 215.3h.01M316.3 288.1h.01M132.5 251.5h.01M302.9 243.3h.01M263.5 288.9h.01M193.4 372.9h.01M171.1 185.1h.01M255.1 378.2h.01M322.0 317.8h.01M253.1 142.9h.01M304.7 159.1h.01M349.8 303.1h.01M194.7 260.8h.01M145.3 240.9h.01M332.6 233.1h.01M189.2 222.1h.01M374.5 265.6h.01M249.3 382.0h.01M379.6 279.9h.01M130.9 163.8h.01M207.8 303.1h.01M356.5 199.7h.01M371.9 314.5h.01M364.1 318.5h.01M191.9 272.4h.01M307.2 229.3h.01M173.8 297.9h.01M315.5 186.7h.01M313.3 154.4h.01M362.1 275.5h.01M194.9 179.8h.01M343.5 292.0h.01M169.8 233.5h.01M342.8 345.4h.01M129.7 213.6h.01M217.1 192.1h.01M294.9 362.3h.01M372.1 314.2h.01M322.1 220.6h.01M256.7 226.7h.01M185.8 222.4h.01M294.8 209.2h.01M192.3 362.6h.01M320.2 242.6h.01M210.5 291.5h.01M266.0 279.8h.01M108.2 183.9h.01M269.0 228.5h.01M211.8 278.0h.01M248.1 292.7h.01M309.1 360.0h.01M375.2 274.6h.01M337.4 179.6h.01M270.5 111.3h.01M259.7 252.9h.01M190.8 376.4h.01M167.0 289.5h.01M204.1 332.1h.01M186.9 157.6h.01M171.0 260.9h.01M319.8 245.0h.01M122.4 300.4h.01M268.1 296.6h.01M171.6 170.2h.01M240.9 200.0h.01M322.7 254.5h.01M324.0 224.2h.01M252.5 354.5h.01M246.1 106.4h.01M246.7 328.7h.01M373.9 331.2h.01M145.5 301.8h.01M252.8 181.0h.01M308.5 260.5h.01M351.3 183.9h.01M149.1 166.7h.01M158.7 299.9h.01M369.7 215.9h.01M252.8 130.3h.01M323.6 285.9h.01M370.9 246.1h.01M242.4 182.4h.01M130.5 295.6h.01M390.8 244.5h.01M189.0 124.9h.01M255.1 296.2h.01M207.2 230.3h.01M253.7 284.2h.01M277.3 292.2h.01M314.9 196.2h.01M180.5 193.5h.01M358.7 257.9h.01M253.8 105.6h.01M257.9 90.9h.01M360.9 345.2h.01M251.4 89.3h.01M364.1 284.2h.01M361.2 202.8h.01M249.9 203.6h.01M137.2 192.3h.01M344.3 334.2h.01M295.3 263.8h.01M237.6 212.0h.01M165.2 170.5h.01M176.7 248.2h.01M238.5 259.9h.01M372.4 227.2h.01M160.3 138.4h.01M117.5 176.0h.01M185.9 328.1h.01M353.5 305.8h.01M258.5 191.1h.01M200.5 125.3h.01M285.7 363.2h.01M362.4 340.7h.01M358.4 238.6h.01M285.4 244.4h.01M247.3 110.0h.01M330.2 264.6h.01M232.2 188.7h.01M183.0 217.8h.01M233.0 100.6h.01M297.7 288.0h.01M287.0 336.7h.01M278.8 124.2h.01M220.8 125.5h.01M372.1 197.6h.01M258.7 235.2h.01M289.2 323.9h.01M220.0 151.1h.01M180.4 369.2h.01M262.8 280.3h.01M106.0 257.7h.01M259.2 379.6h.01M204.2 102.1h.01M260.1 172.8h.01M304.3 280.7h.01M204.3 366.5h.01M177.0 130.3h.01M323.3 213.8h.01M283.0 328.7h.01M194.4 280.9h.01M196.0 289.6h.01M270.9 385.1h.01M379.1 312.4h.01M311.3 373.3h.01M271.9 133.3h.01M187.5 254.6h.01M264.1 354.9h.01M271.1 282.0h.01M192.2 151.1h.01M257.0 103.4h.01M105.1 284.2h.01M300.3 330.8h.01M154.9 198.5h.01M240.9 377.9h.01M271.7 216.4h.01M100.4 286.9h.01M258.5 92.7h.01M185.8 104.7h.01M191.5 195.2h.01M205.4 227.8h.01M222.4 210.8h.01M166.3 220.2h.01M250.2 317.4h.01M184.2 213.6h.01M218.3 318.5h.01M368.1 285.1h.01M121.8 291.1h.01M271.4 241.8h.01M323.7 338.4h.01M343.2 259.9h.01M383.4 308.9h.01M270.5 204.4h.01M260.6 372.7h.01M377.6 282.0h.01M179.8 269.6h.01M226.1 353.2h.01M112.2 245.7h.01M260.4 274.1h.01M277.4 319.1h.01M271.7 92.9h.01M275.1 369.1h.01M333.3 196.6h.01M207.5 187.5h.01M240.1 329.6h.01M202.3 349.8h.01M149.7 296.6h.01M214.9 197.6h.01M218.3 260.2h.01M296.9 159.1h.01M260.6 333.8h.01M232.0 159.2h.01M221.4 278.1h.01M298.4 333.7h.01M264.1 157.8h.01M346.3 251.9h.01M354.1 301.7h.01M323.0 272.2h.01M313.5 366.5h.01M300.4 259.2h.01M133.6 205.6h.01M221.1 136.5h.01M272.6 108.0h.01M158.8 213.3h.01M317.9 354.5h.01M202.5 111.3h.01M199.5 215.5h.01M225.8 220.7h.01M319.9 185.5h.01M224.8 247.2h.01M197.3 175.3h.01M283.7 168.6h.01M270.0 85.9h.01M372.3 286.0h.01M189.9 243.2h.01M188.9 342.3h.01M276.5 237.2h.01M225.8 164.0h.01M293.3 260.0h.01M150.3 165.9h.01M288.0 158.0h.01M288.1 358.0h.01M176.7 252.8h.01M224.4 334.6h.01M112.4 171.6h.01M294.8 255.7h.01M342.1 230.4h.01M283.5 176.3h.01M207.0 213.3h.01M129.7 281.8h.01M372.2 215.7h.01M179.1 268.7h.01M138.6 206.1h.01M296.3 359.8h.01M261.7 365.4h.01M159.5 268.8h.01M287.4 261.6h.01M160.9 211.0h.01M330.6 206.5h.01M324.3 254.8h.01M126.9 309.7h.01M183.4 354.9h.01M315.8 186.7h.01M335.2 327.2h.01M142.4 310.2h.01M144.2 146.5h.01M239.6 308.0h.01M362.4 310.6h.01M387.8 241.1h.01M274.7 349.2h.01M227.7 263.4h.01M258.2 392.3h.01M274.1 296.7h.01M218.8 149.8h.01M214.1 179.7h.01M135.5 233.6h.01M173.5 174.2h.01M250.5 331.0h.01M139.4 255.4h.01M144.0 236.3h.01M247.7 338.0h.01M286.1 148.5h.01M185.4 135.9h.01M221.1 371.2h.01M365.7 316.1h.01M204.8 164.1h.01M120.7 276.1h.01M191.0 134.8h.01M295.1 264.4h.01M115.3 238.7h.01M173.3 277.1h.01M257.3 286.6h.01M124.4 297.4h.01M182.0 229.9h.01M256.8 95.8h.01M278.3 106.0h.01M234.8 159.6h.01M186.8 291.2h.01M204.5 101.8h.01M254.4 178.7h.01M339.5 211.0h.01M357.2 267.7h.01M279.8 216.7h.01M203.0 99.2h.01M249.2 222.1h.01M187.2 269.5h.01M281.1 347.2h.01M313.9 180.5h.01M138.9 197.2h.01M179.3 156.0h.01M201.8 240.1h.01M217.7 192.0h.01M223.9 150.2h.01M189.5 215.1h.01M228.4 344.8h.01M165.8 270.5h.01M168.2 252.4h.01M186.0 295.5h.01M280.7 172.6h.01M251.3 134.2h.01M258.1 227.6h.01M188.3 278.6h.01M282.2 117.2h.01M134.7 163.7h.01M213.1 145.9h.01M190.0 259.2h.01M214.8 281.3h.01M240.3 303.8h.01M296.4 222.0h.01M262.7 150.9h.01M267.1 169.2h.01M264.7 336.0h.01"/>
</g>
<g fill="#3cb44b" fill-opacity=".9"><circle cx="260.0" cy="150.3" r="4.3"/><circle cx="206.7" cy="162.9" r="4.3"/><circle cx="208.6" cy="170.5" r="4.3"/><circle cx="212.5" cy="179.0" r="4.3"/><circle cx="213.5" cy="177.5" r="4.3"/><circle cx="227.4" cy="177.9" r="4.3"/><circle cx="235.0" cy="182.5" r="4.3"/><circle cx="240.5" cy="167.1" r="4.3"/><circle cx="246.5" cy="164.8" r="4.3"/><circle cx="229.7" cy="198.1" r="4.3"/><circle cx="237.7" cy="216.4" r="4.3"/><circle cx="230.8" cy="226.3" r="4.3"/><circle cx="131.6" cy="222.6" r="4.3"/><circle cx="190.7" cy="233.0" r="4.3"/><circle cx="192.0" cy="231.5" r="4.3"/><circle cx="202.1" cy="243.3" r="4.3"/><circle cx="195.3" cy="246.7" r="4.3"/><circle cx="190.7" cy="250.9" r="4.3"/><circle cx="232.0" cy="234.8" r="4.3"/><circle cx="225.1" cy="239.4" r="4.3"/><circle cx="227.0" cy="237.0" r="4.3"/><circle cx="229.0" cy="241.0" r="4.3"/><circle cx="223.5" cy="242.0" r="4.3"/><circle cx="244.2" cy="244.4" r="4.3"/><circle cx="237.3" cy="251.3" r="4.3"/><circle cx="222.8" cy="255.9" r="4.3"/><circle cx="198.7" cy="257.3" r="4.3"/><circle cx="131.4" cy="290.3" r="4.3"/><circle cx="156.2" cy="297.2" r="4.3"/><circle cx="171.1" cy="295.6" r="4.3"/><circle cx="178.0" cy="299.5" r="4.3"/><circle cx="175.7" cy="288.0" r="4.3"/><circle cx="182.6" cy="289.2" r="4.3"/><circle cx="190.7" cy="293.3" r="4.3"/><circle cx="183.3" cy="313.3" r="4.3"/><circle cx="199.4" cy="307.6" r="4.3"/><circle cx="182.6" cy="262.8" r="4.3"/><circle cx="187.2" cy="266.2" r="4.3"/><circle cx="198.7" cy="260.5" r="4.3"/><circle cx="198.7" cy="267.4" r="4.3"/><circle cx="204.4" cy="262.8" r="4.3"/><circle cx="209.0" cy="267.4" r="4.3"/><circle cx="213.6" cy="268.5" r="4.3"/><circle cx="211.3" cy="273.1" r="4.3"/><circle cx="195.3" cy="272.0" r="4.3"/><circle cx="191.0" cy="264.0" r="4.3"/><circle cx="202.0" cy="270.0" r="4.3"/><circle cx="180.0" cy="260.0" r="4.3"/><circle cx="186.1" cy="278.2" r="4.3"/><circle cx="194.6" cy="285.0" r="4.3"/><circle cx="204.4" cy="280.5" r="4.3"/><circle cx="207.9" cy="288.0" r="4.3"/><circle cx="210.2" cy="278.8" r="4.3"/><circle cx="225.8" cy="266.2" r="4.3"/><circle cx="264.1" cy="270.4" r="4.3"/><circle cx="249.7" cy="277.2" r="4.3"/><circle cx="251.0" cy="275.5" r="4.3"/><circle cx="235.4" cy="281.1" r="4.3"/><circle cx="241.2" cy="290.3" r="4.3"/><circle cx="233.1" cy="288.0" r="4.3"/><circle cx="225.1" cy="292.6" r="4.3"/><circle cx="228.6" cy="297.2" r="4.3"/><circle cx="214.8" cy="304.8" r="4.3"/><circle cx="220.5" cy="306.4" r="4.3"/><circle cx="224.0" cy="309.8" r="4.3"/><circle cx="228.6" cy="308.7" r="4.3"/><circle cx="218.2" cy="313.3" r="4.3"/><circle cx="222.8" cy="312.1" r="4.3"/><circle cx="219.4" cy="317.9" r="4.3"/><circle cx="221.0" cy="302.5" r="4.3"/><circle cx="243.5" cy="305.9" r="4.3"/><circle cx="255.0" cy="304.8" r="4.3"/><circle cx="258.4" cy="306.4" r="4.3"/><circle cx="263.0" cy="311.0" r="4.3"/><circle cx="252.7" cy="312.1" r="4.3"/><circle cx="258.4" cy="315.6" r="4.3"/><circle cx="274.5" cy="310.3" r="4.3"/><circle cx="246.9" cy="323.2" r="4.3"/><circle cx="260.7" cy="327.1" r="4.3"/><circle cx="257.3" cy="329.4" r="4.3"/><circle cx="254.0" cy="318.0" r="4.3"/><circle cx="210.2" cy="328.2" r="4.3"/><circle cx="214.8" cy="325.5" r="4.3"/><circle cx="232.0" cy="325.5" r="4.3"/><circle cx="227.4" cy="365.0" r="4.3"/><circle cx="229.0" cy="371.4" r="4.3"/><circle cx="255.6" cy="373.0" r="4.3"/><circle cx="267.6" cy="374.6" r="4.3"/><circle cx="271.0" cy="372.3" r="4.3"/><circle cx="275.6" cy="366.1" r="4.3"/><circle cx="275.6" cy="347.0" r="4.3"/><circle cx="298.3" cy="277.7" r="4.3"/><circle cx="305.6" cy="284.6" r="4.3"/><circle cx="315.0" cy="281.1" r="4.3"/><circle cx="296.0" cy="293.3" r="4.3"/><circle cx="333.8" cy="358.5" r="4.3"/><circle cx="283.3" cy="363.1" r="4.3"/><circle cx="278.7" cy="367.3" r="4.3"/><circle cx="269.6" cy="373.7" r="4.3"/><circle cx="234.5" cy="336.4" r="4.3"/><circle cx="251.2" cy="333.6" r="4.3"/><circle cx="245.3" cy="344.2" r="4.3"/><circle cx="221.0" cy="349.3" r="4.3"/><circle cx="219.9" cy="346.6" r="4.3"/><circle cx="239.7" cy="360.8" r="4.3"/><circle cx="224.3" cy="339.0" r="4.3"/><circle cx="250.0" cy="365.1" r="4.3"/><circle cx="247.4" cy="345.3" r="4.3"/><circle cx="261.8" cy="341.4" r="4.3"/><circle cx="225.4" cy="335.2" r="4.3"/><circle cx="233.7" cy="360.4" r="4.3"/><circle cx="227.2" cy="351.9" r="4.3"/><circle cx="250.6" cy="344.4" r="4.3"/><circle cx="245.9" cy="333.3" r="4.3"/><circle cx="221.0" cy="338.4" r="4.3"/><circle cx="252.7" cy="346.4" r="4.3"/><circle cx="234.0" cy="352.1" r="4.3"/><circle cx="241.1" cy="341.8" r="4.3"/><circle cx="258.5" cy="356.2" r="4.3"/><circle cx="230.4" cy="351.7" r="4.3"/><circle cx="244.8" cy="362.5" r="4.3"/><circle cx="255.2" cy="341.4" r="4.3"/><circle cx="239.3" cy="358.3" r="4.3"/><circle cx="225.8" cy="348.6" r="4.3"/><circle cx="220.0" cy="355.1" r="4.3"/><circle cx="257.0" cy="351.6" r="4.3"/><circle cx="262.6" cy="342.3" r="4.3"/><circle cx="253.5" cy="352.4" r="4.3"/><circle cx="247.6" cy="347.4" r="4.3"/><circle cx="242.2" cy="354.9" r="4.3"/><circle cx="221.1" cy="356.3" r="4.3"/><circle cx="251.0" cy="366.8" r="4.3"/><circle cx="259.9" cy="341.2" r="4.3"/><circle cx="237.7" cy="355.1" r="4.3"/><circle cx="219.2" cy="347.6" r="4.3"/><circle cx="226.6" cy="335.2" r="4.3"/><circle cx="221.0" cy="358.7" r="4.3"/><circle cx="224.6" cy="339.9" r="4.3"/><circle cx="237.9" cy="362.4" r="4.3"/><circle cx="222.1" cy="347.2" r="4.3"/><circle cx="246.0" cy="362.8" r="4.3"/><circle cx="259.8" cy="362.1" r="4.3"/><circle cx="232.2" cy="346.0" r="4.3"/><circle cx="236.3" cy="362.8" r="4.3"/><circle cx="227.0" cy="339.4" r="4.3"/><circle cx="229.9" cy="348.5" r="4.3"/><circle cx="248.0" cy="340.5" r="4.3"/><circle cx="218.2" cy="346.1" r="4.3"/><circle cx="236.8" cy="351.4" r="4.3"/><circle cx="266.6" cy="355.9" r="4.3"/><circle cx="244.3" cy="353.2" r="4.3"/><circle cx="252.5" cy="332.9" r="4.3"/><circle cx="263.9" cy="359.1" r="4.3"/><circle cx="262.6" cy="359.7" r="4.3"/><circle cx="238.0" cy="345.4" r="4.3"/><circle cx="223.3" cy="353.8" r="4.3"/><circle cx="228.6" cy="336.8" r="4.3"/><circle cx="235.3" cy="332.9" r="4.3"/><circle cx="223.2" cy="344.1" r="4.3"/><circle cx="249.3" cy="336.3" r="4.3"/><circle cx="230.9" cy="343.5" r="4.3"/><circle cx="236.6" cy="335.4" r="4.3"/><circle cx="241.8" cy="348.4" r="4.3"/><circle cx="235.5" cy="340.5" r="4.3"/><circle cx="260.3" cy="336.8" r="4.3"/><circle cx="244.9" cy="336.3" r="4.3"/><circle cx="245.7" cy="332.0" r="4.3"/><circle cx="244.9" cy="366.2" r="4.3"/><circle cx="262.0" cy="356.1" r="4.3"/><circle cx="231.3" cy="344.2" r="4.3"/><circle cx="226.5" cy="358.8" r="4.3"/><circle cx="245.2" cy="359.0" r="4.3"/><circle cx="234.8" cy="339.0" r="4.3"/><circle cx="261.5" cy="360.0" r="4.3"/><circle cx="259.7" cy="357.6" r="4.3"/><circle cx="229.6" cy="349.6" r="4.3"/><circle cx="236.1" cy="332.0" r="4.3"/><circle cx="219.4" cy="341.1" r="4.3"/><circle cx="231.2" cy="355.9" r="4.3"/><circle cx="266.8" cy="347.1" r="4.3"/><circle cx="266.7" cy="344.1" r="4.3"/><circle cx="229.2" cy="339.2" r="4.3"/><circle cx="228.0" cy="338.4" r="4.3"/><circle cx="249.8" cy="363.4" r="4.3"/><circle cx="260.9" cy="348.3" r="4.3"/><circle cx="251.3" cy="359.8" r="4.3"/><circle cx="222.3" cy="354.8" r="4.3"/><circle cx="264.4" cy="359.2" r="4.3"/><circle cx="256.3" cy="348.2" r="4.3"/><circle cx="227.1" cy="359.4" r="4.3"/><circle cx="235.0" cy="359.8" r="4.3"/><circle cx="267.6" cy="345.3" r="4.3"/><circle cx="238.5" cy="365.1" r="4.3"/><circle cx="255.0" cy="337.1" r="4.3"/><circle cx="233.0" cy="334.0" r="4.3"/><circle cx="238.0" cy="331.0" r="4.3"/><circle cx="244.0" cy="338.0" r="4.3"/><circle cx="232.0" cy="340.0" r="4.3"/></g>
<circle cx="255.0" cy="323.6" r="4.3" fill="#cc2ccc"/>
<rect x="283.5" y="10.5" width="194" height="86" fill="#fff" fill-opacity=".95" stroke="#e5e5e5" stroke-opacity=".5"/>
<circle cx="303.1" cy="30.4" r="4.6" fill="#b2b2b2"/><circle cx="303.1" cy="53.4" r="4.6" fill="#5bc265"/><circle cx="303.1" cy="76.3" r="4.6" fill="#e833e8"/>
</svg>
<span class="t" id="t50" style="left:326.80px;top:271.50px;font-size:13px;color:#444;transform:scaleX(0.9882);">Other proteins</span>
<span class="t" id="t51" style="left:326.80px;top:294.50px;font-size:13px;color:#444;transform:scaleX(0.9740);">Co-regulated above cut-off</span>
<span class="t" id="t52" style="left:326.80px;top:317.50px;font-size:13px;color:#444;transform:scaleX(1.0088);">Your query: MAPK8</span>
<svg class="a" style="left:528px;top:600px;overflow:hidden" width="708" height="271" viewBox="528 600 708 271">
<rect x="605.5" y="618.9" width="58.0" height="260" fill="#f6dcef" stroke="#f1cce7"/>
<rect x="665.8" y="618.9" width="55.4" height="260" fill="#fee4e3" stroke="#fdd7d6"/>
<rect x="723.4" y="618.9" width="26.4" height="260" fill="#feecdc" stroke="#fde3cc"/>
<rect x="751.7" y="618.9" width="9.0" height="260" fill="#cae6ca" stroke="#b2dab2"/>
<rect x="762.7" y="618.4" width="2.2" height="260" fill="#ffd6b0"/>
<rect x="766.3" y="618.9" width="51.0" height="260" fill="#ece2df" stroke="#e3d4d0"/>
<rect x="819.5" y="618.9" width="113.9" height="260" fill="#fdecf3" stroke="#fce3ed"/>
<rect x="935.6" y="618.9" width="4.0" height="260" fill="#eaf0f9" stroke="#e0e9f6"/>
<rect x="941.5" y="618.9" width="6.8" height="260" fill="#c6dcec" stroke="#accce3"/>
<rect x="950.5" y="618.9" width="59.7" height="260" fill="#efe9f4" stroke="#e7dfef"/>
<rect x="1012.5" y="618.9" width="20.4" height="260" fill="#dddddd" stroke="#cdcdcd"/>
<rect x="1035.2" y="618.9" width="48.1" height="260" fill="#eeedc7" stroke="#e6e4ad"/>
<rect x="1085.5" y="618.9" width="6.2" height="260" fill="#f0f0f0" stroke="#e9e9e9"/>
<rect x="1093.7" y="618.9" width="4.8" height="260" fill="#f5c8c8" stroke="#f0afaf"/>
<rect x="1099.7" y="618.4" width="1.3" height="260" fill="#f0f0f0"/>
<rect x="1102.1" y="618.9" width="15.4" height="260" fill="#e5f6e2" stroke="#d9f1d4"/>
<rect x="1119.8" y="618.9" width="8.7" height="260" fill="#e2d5d2" stroke="#d4c2bd"/>
<rect x="1131.5" y="618.9" width="19.7" height="260" fill="#e4d8ee" stroke="#d7c6e6"/>
<path d="M577.5 605.5H1178.5V880" fill="none" stroke="#e5e5e5"/>
<g transform="translate(605.50 0) scale(1.86348 1)" fill="none" stroke="#3cb44b" stroke-opacity=".78" stroke-width="1" stroke-linejoin="round" vector-effect="non-scaling-stroke">
<path vector-effect="non-scaling-stroke" d="M185 771.3l1 4.3 1 -8.7 1 -10.7 1 12.8 1 2.7 1 -12.8 1 2.6 1 -16.7 1 33.3 1 -16.5 1 -3.7 1 -.8 1 4.4 1 -12.2 1 5.5 1 -12.1 1 24.6 1 -5.8 1 -25.2 1 29.3 1 .4 1 -23.4 1 30.5 1 -10.2 1 -1.6 1 17.8 1 -11.1 1 1.3 1 .4 1 -13.8M230 777.1l1 -1 1 -.6 1 7.7 1 -13.9 1 5.2 1 -4.1 1 1.1 1 19 1 -.3 1 1.3 1 -2.6 1 -1.4 1 2.3 1 -10.5 1 10 1 -7.9 1 5.9 1 -28.6 1 25.7 1 9.2 1 -18.2 1 -1.6 1 20.6 1 -.5 1 -15.3 1 5.3 1 -7 1 -30.4 1 -9.2 1 26.9 1 -5.5 1 16.9 1 -35.3 1 18 1 -44.3 1 53.5"/>
<path vector-effect="non-scaling-stroke" d="M115 746.2l1 14.1 1 -7.4 1 1.3 1 13.1 1 -10.2 1 -3.1 1 11.9 1 -13.3 1 2.1 1 -1.4 1 1.1 1 6.3 1 -6.5 1 -2.2 1 12.5 1 -11 1 7.9 1 -10.5 1 5.5 1 -1.6 1 -.3 1 2.4 1 -1.3 1 -9.8 1 16.9 1 -4.7 1 -4.6 1 -.9 1 .2 1 -.2 1 1.3 1 -1.7 1 8.8 1 -.5 1 -6.1 1 -4.1 1 5.9 1 8.5 1 -4.2 1 -10.9 1 6.2 1 2.7 1 -8.3 1 -4.4 1 18.9 1 -10.9 1 10.2 1 -8.8 1 5.8 1 -4.6 1 4.2 1 1.5 1 -18.7 1 5.8 1 52.4 1 -35.3 1 -4.3 1 -3.8 1 -2.9 1 -2.3 1 7.1M230 776.8l1 17.5 1 1.8 1 -14.4 1 10.1 1 12.2 1 -26.9 1 .4 1 2.4 1 6.6 1 -13.8 1 4.5 1 6.8 1 -7.5 1 21.8 1 -16.7 1 1.5 1 7.7 1 -4.1 1 -10.2 1 3.5 1 .7 1 0 1 34.7 1 -31.9 1 1.3 1 1.7 1 -4.8M276 746.8l1 2.1M279 760.2l1 -.4 1 -13"/>
<path vector-effect="non-scaling-stroke" d="M115 756.8l1 -7.2M118 774.8l1 -20.4 1 .2 1 2.4 1 2.2 1 -.9 1 -4 1 15.2 1 -12.8 1 8.6 1 -9 1 1 1 -1.6 1 1.2 1 .2 1 11.4 1 -14.8 1 .8 1 3.6 1 3.5 1 -1.2M140 770.1l1 -12.4 1 1.3 1 2.1 1 -4 1 -.9 1 -7.6 1 31.4 1 -21.2 1 2.9 1 -5 1 2.2 1 1 1 -16 1 -11.9 1 26.6 1 4.9 1 -3.2 1 3.6 1 -7.1 1 14.2 1 -10.5 1 -39.5 1 42.5 1 -.9 1 -15.4 1 15.1 1 -6.4 1 2.3 1 12.3 1 -4.4 1 -3.8 1 2.2 1 6.1 1 -29.7 1 20.7 1 -4.7M185 767.8l1 -19.8 1 20.3 1 -6.6 1 12.5M191 761.5l1 -6.4 1 13.4 1 9 1 -24 1 11.7 1 -2.1 1 11.4 1 -41.8 1 24.5 1 6.4 1 -13.2 1 19.4 1 -19.2 1 13.1 1 -10.3 1 24.8 1 -18.6 1 -4.5 1 8.9 1 23.6 1 -42.8 1 17.3 1 14 1 -17.9 1 3.9 1 -17.3 1 6.6 1 12.5 1 -16.2 1 34 1 -28.2 1 1 1 -4 1 12.6 1 4.7 1 -36.8 1 20.9 1 4.6 1 22.8 1 18.4 1 -32.7 1 41 1 -37.1 1 9.3 1 16 1 -11.9M239 782.8l1 -5.8 1 6.4 1 4.6 1 4.8 1 2.5 1 -6.2 1 -35.7 1 19.7 1 18.5 1 -13.4 1 24.7 1 -11.6 1 6.4 1 -8.8 1 -.6 1 -6.9 1 -3 1 35.2M262 759.6l1 -3.5 1 -32.5 1 19.3M268 766.5l1 12.2 1 -.1 1 -22.2 1 .6 1 -7.2 1 -27.8 1 27.1"/>
<path vector-effect="non-scaling-stroke" d="M86 714.6l1 4.6 1 9.2 1 -8 1 14.9 1 -3.2 1 -10.3 1 20.7 1 -12.3 1 -6.6 1 25.6 1 -21.3 1 -41.9 1 25.9 1 8.9 1 -7.2 1 1.1 1 30.8 1 -41.5 1 17.9 1 -15.6 1 25.4 1 13.8 1 -19.9M113 718.9l1 -6.9 1 46.4 1 -5 1 10.4 1 -6.9 1 -.5 1 5.5 1 -7.2 1 -5.6 1 14.8 1 -3.8 1 -6.4 1 19.2 1 32.1 1 -44.9M130 759.9l1 -7.4 1 -1.7 1 2.3M135 754.5l1 1.8 1 .9 1 4.1 1 -13.4 1 13.9 1 13.8 1 -19.7 1 -2.4 1 -4.6 1 1 1 22.1 1 -7.2 1 -7.2 1 4 1 -4.8 1 -.1 1 10.4 1 -10 1 7.1 1 -3.7 1 -.6 1 -5.8 1 2.4 1 2.3M161 745.3l1 4.8 1 9.4 1 6.7 1 -5.4 1 -4.7 1 -1.3 1 -6 1 10.1 1 -.5 1 -2.3 1 -2.5 1 7.9 1 10.5 1 -17.7 1 4.9M188 770.8l1 -25.1 1 .5 1 14.4 1 4 1 -14.2 1 23.7 1 6.8 1 -9.4 1 -29.7 1 44.3 1 -27.5 1 24.4 1 -13 1 -8 1 -5.7 1 19.2 1 29 1 -53.2 1 27.7 1 -10.9 1 -8.2 1 4.9 1 .6 1 15 1 -28.1 1 2.8 1 19.2 1 2.8 1 -37.8 1 -3 1 17.2 1 -4.5 1 -16 1 43.4 1 -20.7 1 14.7 1 -28.1 1 15.3M228 740.9l1 3.2 1 45.2M232 787.2l1 9 1 -8.8 1 -17.8 1 7.7 1 -10.9 1 15.8 1 1.9 1 14.7 1 -18.7 1 4.6 1 -12.8 1 36.1 1 -40.9 1 7.3 1 -5.5 1 10.6 1 -4.3 1 16.8M252 779.4l1 -3.5 1 -.1 1 4.7 1 8 1 -1.7M262 752.9l1 -8.1 1 11.8 1 9.6M278 751.7l1 -10.7 1 15 1 3.8"/>
<path vector-effect="non-scaling-stroke" d="M84 763.4l1 -4.6M115 763.4l1 -4.9 1 6.3 1 -8.3 1 -3.5 1 .7 1 12.7 1 -14.7 1 7.2 1 -9.7 1 -.6 1 14.8 1 -12.1 1 2.8 1 -2.7 1 4.3 1 -11.6 1 17.1 1 5 1 -12.3 1 -.1 1 4.7 1 -5 1 -3.4 1 12.1 1 -5.9 1 1.8 1 -3.3 1 31.2 1 -36.5 1 14.1 1 -11.9 1 9.9 1 -15.9 1 17.9 1 -2.5 1 -9.5 1 0 1 5.3 1 -3.8 1 -2 1 2.5 1 -3.7 1 8.5 1 -12.6 1 15.2 1 -8.8 1 6.2 1 0M165 774.7l1 -21.7 1 2.5 1 -12.5 1 16 1 -13.3 1 18.2 1 -1.8 1 -7.3 1 3 1 21.9 1 -26.4M180 743.9l1 1.2 1 1.3 1 6.5 1 -7.6 1 14.2 1 3.1 1 9.3 1 -8.3 1 -1 1 3.8 1 -11.7 1 16.5 1 -7.6 1 3.8 1 -17.2 1 17.1 1 16.1 1 -33.3 1 13.6 1 -.3 1 14.1 1 8.6 1 -41 1 8.3 1 7.6 1 37.7 1 -33.9 1 -13.1 1 -11 1 9.6 1 -12.2 1 39 1 -70.2 1 45.4 1 -4 1 -2.2 1 13.2 1 1.4 1 -8.7 1 12.1 1 -14.4 1 10.8 1 -17.8 1 3.3 1 9.2 1 -4.9 1 -7.9 1 9.2 1 10.5 1 10.7 1 6.3 1 4.3 1 4.1 1 -7.1 1 1.8 1 1.6 1 7.6 1 -7 1 1.3 1 -44.7 1 50.9 1 -31.5 1 50.4 1 -36.5 1 12.4 1 -6.1 1 -7.5 1 7.7 1 -4.6 1 5 1 -10 1 10.2 1 -5.6 1 16.5 1 -11.6 1 -8.8 1 13.1"/>
<path vector-effect="non-scaling-stroke" d="M115 763.2l1 5.3 1 -5.1 1 -4.3 1 -.8M121 758.7l1 -7.6 1 5 1 8.4 1 -10.1 1 -5.5 1 11.7 1 -16.1 1 7.2 1 10.8 1 -5 1 -4 1 15.3 1 -29.4 1 2.8 1 7.4 1 19.1 1 -15.2 1 .7 1 -12 1 3.1 1 11.1 1 .9 1 -11.1 1 6.7 1 -5.9 1 4.8 1 11.8 1 -5.8 1 -6.5 1 -.9 1 2.3 1 -6 1 6.7 1 6.1 1 -11.1 1 -24.4 1 26.5 1 11 1 -8.9 1 2 1 -18.3 1 14.7 1 8.1 1 -3 1 9.5 1 -7.9 1 -2.2 1 -3.3 1 -8 1 4 1 4.8 1 2.1 1 -4.3 1 10.5 1 -2.2M185 750.2l1 11.7 1 12 1 -46.6 1 40.2 1 -9.7 1 14.2 1 -8.7 1 3.9 1 -5.1 1 -1 1 -5 1 24.2 1 -15.3 1 3.3 1 -2 1 -5.8 1 3.2 1 -6.1 1 14.5 1 -14.6 1 20.9 1 -13.2 1 12.4 1 -16.9 1 -12.4 1 42 1 -25.9 1 -15.9 1 9 1 2.2 1 1 1 54.3 1 -59.4M220 748.3l1 20.8 1 -23.2 1 10.9 1 3.7 1 -1.1 1 -11 1 1 1 38.4 1 -34 1 45.1 1 -31.3 1 -1 1 -7.7 1 28.9 1 -27.7 1 8.6 1 10.8 1 3.5 1 .2 1 -20.7 1 25.5 1 -33.2 1 30.5 1 -23.1 1 30.9 1 -2.9 1 4.9 1 -18.8 1 3.8 1 1.1 1 -.2 1 -15.7 1 -3.6 1 7.8 1 -1.3 1 17.3 1 -17.5"/>
<path vector-effect="non-scaling-stroke" d="M115 757.4l1 -.7 1 -3.7 1 -6.7 1 7.6 1 -2.5 1 6.8 1 -1.9 1 1.9 1 3.6 1 -20.2 1 9.6 1 5.7 1 -9.4 1 7.2 1 -1 1 1.2 1 10.8 1 -11.6M135 760.7l1 -.3 1 .7 1 -.4 1 -4.1 1 -5.8 1 6.9 1 1.9 1 -7.4 1 -.4 1 2.5 1 5.2 1 -1.6 1 5.6 1 -6.5 1 6.9 1 -4.1 1 -.9 1 -1.5 1 -2.5 1 -7.3 1 1.8 1 4.4 1 3 1 -6.5 1 12.1 1 -17.5 1 11.2 1 2.5 1 -5.4 1 -11.5 1 23 1 -12.7 1 -.1 1 8.8 1 -9.6 1 3.2M173 753.9l1 5.7 1 -2.7 1 -.9M185 762.1l1 -4.4 1 17.9 1 -26.5 1 15.9 1 -20.3 1 20 1 -9.5 1 .5 1 7.3 1 -6.5 1 20.6 1 -11.9 1 -38.6 1 42.2 1 -14.6 1 -.5 1 4.3 1 1.5 1 17.2 1 -6.2M207 746.2l1 13.5 1 -28.9 1 12 1 15.7 1 -.3 1 -1.7 1 5.5 1 -3.4 1 15.9 1 -18M230 773.6l1 3.8 1 11 1 -1.5 1 -18.6 1 20.7 1 -16.2 1 -4.5 1 -42.3 1 38.6 1 8.3 1 -.4 1 1.7 1 1.3 1 6.8 1 -4.7 1 -5.6 1 0 1 -16.3 1 38.2 1 -24.7 1 3.3 1 2.8 1 -10.3 1 -1.9 1 15.6 1 -1.5 1 -23.3M276 759.1l1 -5.8 1 -9.3 1 .6 1 .8 1 11.9 1 0 1 -1.9 1 -8.7 1 -11.7 1 9.5 1 1.2 1 -14 1 24 1 -10.9 1 -10.4 1 2.9 1 6.8"/>
<path vector-effect="non-scaling-stroke" d="M86 728.6l1 22.6 1 -32.9 1 34 1 -28.1 1 5.8 1 9.8 1 -17.1 1 11.7 1 -5.2 1 10.8 1 -20.9 1 2.8 1 9.1 1 -1.6 1 6.6 1 11.5 1 -3.7 1 -9.3 1 14.9 1 -38.9 1 23.1 1 .7 1 1.8 1 -6.4 1 50.3 1 -61.4 1 38.6 1 -49.6 1 74.6 1 -7.7 1 -14.2 1 3.8 1 14.4 1 -14.2M122 763.9l1 -3.4 1 -9.4 1 5.6 1 7 1 -3 1 -6.9 1 13.4 1 2 1 -9.4 1 .1 1 -2.8 1 -4.5 1 12.2 1 -2.7 1 7.1 1 -53.2 1 46.6 1 1.5 1 3.1 1 -10.5 1 8.2 1 -1.3 1 1.8 1 -7.6 1 9.6 1 -7 1 -12.9 1 8.5 1 9.4 1 -3.6 1 -1.1 1 15.3 1 -25 1 15.4 1 7.7 1 -17.8 1 5.7 1 -8.9 1 16.4 1 -7.4 1 .3 1 16.1 1 -13.7 1 -7.2 1 19.7 1 -16.7 1 7.4 1 2.6 1 -16.2 1 6.9 1 -70.3 1 71.2 1 11.3 1 -10.9M218 752.4l1 26.5 1 1 1 -16.4 1 -1.3 1 -7.5 1 18.1 1 -5.1 1 2.3 1 -9.2M229 774.2l1 14.1 1 1.7M233 784.7l1 11.8 1 -46.7 1 31.8 1 16.6 1 .7 1 2.6 1 -4.1 1 -14.2 1 -9.1 1 10.2 1 8.2 1 -9.7 1 17 1 -12.1 1 -4.2 1 44.2 1 -96.7 1 56.5 1 -3.7 1 -3.2 1 18.9 1 -11.1 1 3 1 -2.4 1 -29.3 1 -18.8 1 33.4 1 -17.6M267 756.5l1 -15.9 1 9.9 1 19.1 1 -30.7 1 -9.4 1 26.5 1 -13.1 1 9.6M282 771.0l1 -23.2 1 24.8 1 3.2 1 -19.5 1 4 1 -11.9 1 13.1 1 -3.5 1 1 1 -7.5 1 -2.9"/>
<path vector-effect="non-scaling-stroke" d="M86 729.3l1 6.2 1 -4.3 1 -2.3 1 -29 1 34.6 1 -13.8 1 7.8 1 -17.9 1 4.5 1 2.7 1 25.6 1 -28.7 1 4.5 1 -17 1 -3.9 1 30.1 1 7.1 1 -14.9 1 2.3 1 6.4 1 2.1 1 -10.1 1 -5.2 1 17.1 1 -2.1 1 -52.6 1 44.7 1 1.9 1 -2.4 1 36.2 1 -3.2 1 -2.6 1 9.1 1 .4 1 .7 1 -2.2 1 -2.5 1 3.1 1 3 1 -20.4 1 9.5 1 -5.4 1 6.6 1 1.9 1 2.7 1 -6.8 1 2.6 1 8.1 1 -16.2 1 21.8 1 -12.9 1 -5.7 1 3 1 15.6 1 -12.1 1 .4 1 -26.5 1 24 1 2.4 1 .9 1 -2 1 2.6 1 -5.8 1 .2 1 11.3 1 -2.7 1 -.2 1 14.6 1 -24.7 1 3.6 1 1.5 1 3.9 1 -10.9M161 748.8l1 .6 1 11.5 1 9 1 .1M167 756.2l1 7.6 1 -6.6 1 -4.5 1 13.4 1 -6.4 1 -8.5 1 7.7 1 -9.7 1 11.8M181 747.9l1 14.1 1 -4.7 1 -3.1 1 -39.2 1 42.4 1 9.3 1 -7.8 1 -9.8 1 3.4 1 -10.8 1 3.6 1 15.5 1 -9.6 1 5.9 1 -5.1 1 7.4 1 -3.6 1 4.5 1 20 1 -42.1 1 45 1 -39.8 1 16 1 4.3 1 -8.2 1 29.8 1 -38.5 1 19.5 1 -10.8 1 -9.4 1 27.6 1 -14.4 1 4.3 1 -19.3 1 16.3 1 -8.5 1 9.2 1 81.7 1 -81.3 1 -20.3 1 18.2 1 -9.4 1 21.1 1 -9.3 1 -1.7 1 -6.1 1 14.6 1 -20.6 1 19.5 1 34.2 1 -23.6 1 15.6 1 -3.6 1 -10 1 -12.3 1 27.5 1 -10.6 1 -3.3 1 -15 1 18.8 1 13.5 1 2.1 1 -14.2 1 -9.8 1 7.4 1 4.5 1 -29.3 1 13.5 1 -.7 1 -13.7 1 17.1 1 -11.3 1 25.2 1 -10.2 1 -.1 1 -11.8M259 747.8l1 12.5 1 -14.1M282 747.0l1 .2 1 .9 1 -7.5 1 8.3 1 1.6 1 9.5 1 -7.2 1 -22.8 1 36.2 1 5.3 1 -3.8"/>
<path vector-effect="non-scaling-stroke" d="M86 726.2l1 26.2 1 -14.9 1 -18.5 1 5.3 1 7.8 1 -5.1 1 2.3 1 -1.8 1 12.9 1 -3.1 1 -.5 1 -11.9 1 .3 1 17.3 1 -25.3 1 10 1 10.4 1 12.4 1 -20.1 1 17.7 1 -38.1 1 16.4 1 -5.7 1 3.4 1 20.8 1 -18.2 1 -17.7 1 11.8 1 39.2 1 -6.2 1 1.7 1 .7 1 1.5 1 -.2 1 10.9 1 -9.7 1 -.7 1 10.4 1 -13.9 1 10.1 1 -11.1 1 3.1 1 .8 1 -6.5 1 9.6 1 -25 1 14.8M135 757.9l1 -.3 1 -4.5M139 759.3l1 -14.1 1 8 1 14.4 1 -2.6 1 -4.3 1 -10.6M147 753.4l1 14.2 1 -7.5 1 .2 1 -7.1 1 7.1 1 -3.9 1 1.8 1 7.6 1 -7.2 1 2.9 1 -4.9 1 .4 1 -1.6 1 7.8 1 -11.5 1 .1 1 -10.3 1 9.7 1 -3.1 1 11.4 1 -4.7 1 3 1 .8 1 -3.6 1 14.6 1 -3.4 1 -17 1 9.2 1 -12.5M185 773.0l1 -18.6 1 23.1 1 7.1 1 -17.9 1 5.7 1 -22.1 1 7.2 1 2.9 1 -.4 1 9.7 1 -14.6 1 24.8 1 -1.6 1 -6.5 1 -6.9 1 4.6 1 15.1 1 -12.1 1 -6.4 1 2.3 1 -19.5 1 21.9 1 -.8 1 -7.2 1 -4.9 1 23.9 1 -3.1 1 -25.4 1 7.3 1 2.6 1 0 1 -11.8"/>
<path vector-effect="non-scaling-stroke" d="M115 748.7l1 8.4 1 -6.1 1 -1.9 1 6.8 1 3.3 1 -8.9 1 6.1 1 1.1 1 6.3 1 -5.2 1 4.2 1 -.9 1 -2.6 1 -7.8 1 -.3 1 11.4 1 -4.2 1 -.9 1 2.2 1 4 1 -4.5 1 .9 1 -5.9 1 5 1 -2.2 1 3.6 1 0 1 -9.7 1 2.4 1 -6.6 1 10 1 4.6 1 -10.6 1 9.5 1 1.3 1 -11.9 1 11.9 1 -5.1 1 -.7 1 8.1 1 -7.8 1 -.9 1 9.3 1 -9.6 1 6.7 1 -1.6 1 -5.5 1 -8.7 1 6.7 1 8.6 1 -7.4 1 -1.9 1 -1.3 1 14.8 1 -12.6 1 -5.2 1 6.4 1 6.8 1 8.8 1 -12.1 1 2.9 1 -11.7 1 -1.2 1 19.6M185 744.8l1 23.9 1 -1.9 1 -10.9 1 -2 1 -6.9 1 -30 1 38.9 1 26.9 1 -27.5 1 8.9 1 32.6 1 -37.3 1 1.6 1 11.5 1 -15M202 746.0l1 9.6 1 3.9 1 -21.5 1 19.7 1 12.4 1 -4.7 1 -16.1 1 19.5 1 -6M213 763.6l1 -25.6 1 19.1 1 -3.6 1 -25.9M230 753.5l1 30.8 1 -16.9 1 25 1 35.6 1 -40 1 -28 1 23.4 1 5.2 1 24.4 1 -49.7 1 13.9 1 2.2 1 3.9M245 785.8l1 6.8 1 -6.9 1 4.1 1 -12.9 1 -5.7 1 17.6 1 .9 1 -62.7 1 54.3 1 -17.5 1 18.2 1 -3.5 1 -35.6 1 15.9 1 31.8 1 -41M266 756.1l1 -38.1 1 31.6 1 23.1 1 -12.6 1 -11.9 1 26.8 1 1.1 1 -46.5 1 19"/>
<path vector-effect="non-scaling-stroke" d="M0 753.1l1 -4.6 1 13.7 1 -29.4 1 18 1 -8.4 1 8 1 14.2 1 -55.4 1 31.5 1 -12.4 1 17 1 4.6 1 -7.4 1 26.7 1 -24.3 1 -.4 1 -6.4 1 3.1 1 -62.2 1 74.1 1 3.4 1 10.5 1 -18.9 1 2.4 1 9.6 1 3.7 1 8.9 1 -27.6 1 11.3 1 -2.4 1 .8M115 755.9l1 -4.6 1 -3.1 1 9.2 1 1.4 1 -9.8 1 6.9 1 6.4 1 -5.4 1 -4.3 1 7.2 1 3.2 1 -11.2 1 -3.5 1 7.3 1 5.8 1 -6.1 1 4.5 1 13.5 1 -9.7 1 -15.9 1 13.5 1 -2.6 1 4.9 1 -8 1 6.5 1 -11.8 1 1.3 1 -2 1 4.3 1 -11.5 1 15.5 1 9.4 1 -10.9 1 -1.6 1 -3.3 1 -1.2 1 2.8 1 2.2 1 8.7 1 -7.2 1 -.2 1 11.4 1 -25.9 1 18.6 1 3.1 1 -16.5 1 12.4 1 -1.5 1 5.9 1 -10.3 1 4.4 1 12.6 1 -16.7 1 -1.6 1 2.3 1 -4 1 3.8 1 -5.6 1 1.6 1 4.5 1 -12.6M185 777.1l1 -12.2 1 -30.1 1 31.4 1 3.1 1 9.5 1 -15.2 1 25 1 -21.3 1 -18.4 1 5.3 1 11.8 1 2.1 1 -18.4M200 785.0l1 -7.7 1 -9.8 1 5.1 1 -16.7 1 -1.9 1 11.8 1 -24.5 1 3.3 1 61.2 1 -24.7 1 -50.1 1 23.8 1 6.8 1 .1 1 17.7 1 -37.9 1 20.9M230 775.3l1 1.5 1 .9 1 -5.4 1 7.4 1 16.4 1 -24.5 1 3.1 1 -4.5 1 17.2 1 -32.3 1 10.7 1 16.2 1 -8.7 1 -2.7 1 17.4 1 -6.9 1 21.9 1 -23.4 1 -23.5 1 30 1 -15.5 1 6 1 -4.1 1 11 1 31.5 1 -54.1 1 18.6 1 -9.3 1 -11 1 -2.6 1 -22.9M276 758.3l1 -14.7 1 8.5 1 -7.8 1 1.2 1 13.3"/>
<path vector-effect="non-scaling-stroke" d="M0 743.5l1 9.8 1 12.2 1 -28.2 1 20.6 1 -9.2 1 2.2 1 2.3 1 -2.7 1 -.2 1 -1.4 1 -4.7 1 20.3 1 -18.6 1 5.7 1 5.2 1 -5.9 1 2.7 1 3.4 1 .8 1 -2.3M22 753.3l1 -1.8 1 18.2 1 -17.9 1 -20 1 26.7 1 -13.2 1 10.3 1 -18.9 1 7.6M115 762.1l1 5.7 1 -8.1 1 -5.4 1 1.9M121 755.8l1 -2.2 1 7.3 1 2.6 1 -12.7 1 11.3 1 -.9 1 -4.4 1 7.1 1 11.8 1 -6.8 1 -3.9M134 759.4l1 12.4 1 -11.6 1 1 1 26.5 1 -26.7 1 1.1M142 758.8l1 -2 1 7M146 754.7l1 -1.1 1 12.5 1 -12 1 -6.6 1 19.1 1 -7.7 1 5.7 1 -17.2 1 17.5M157 765.0l1 -3.3 1 -6.6 1 14.6 1 -7.7 1 6.2 1 -.4 1 -7 1 -5.1 1 22.3 1 -20.8 1 3.8 1 7.8 1 -8.1 1 3.7 1 10.9 1 -3.3 1 -6.2 1 -2.9 1 1.2M185 745.2l1 24 1 -13.6 1 7.2 1 9.9 1 -17.9 1 12.4 1 -15.8 1 26.2 1 -3.4 1 -26 1 22.6 1 -20.6 1 3.4 1 9.3 1 16.7 1 10.8 1 -8.1 1 -13.1 1 -16.4 1 -.3 1 8.8 1 -.5 1 -1.4 1 6.1 1 18.8 1 -24.5 1 6 1 -8 1 -36.8 1 59.6 1 -3.9 1 -14.8M230 788.8l1 -4.3 1 -6.8 1 4.6 1 -6.8 1 4.9 1 2.6 1 -12.5 1 1.7 1 11.7 1 -20.8 1 16.3 1 -11.5 1 19.8 1 7.9 1 -14 1 -7.7 1 17.7 1 -22.4 1 -2.1 1 .9 1 1.2 1 10.5 1 9.8 1 6.1 1 -17.3 1 -1.2 1 -5.8 1 -4.6 1 -1.1 1 2.6 1 -14.9"/>
<path vector-effect="non-scaling-stroke" d="M63 740.8l1 17.9 1 -4.5 1 3.8 1 -15.8 1 -1.4 1 4.9 1 12 1 -7.6 1 13.7 1 -5.2 1 -2 1 -24 1 15.7 1 -6.4 1 12.7M84 742.0l1 4.4 1 -12.8 1 7.5 1 1.2 1 -16.6 1 74.3 1 -75.5 1 3.9 1 .2 1 -4.5 1 -8.2 1 69.1 1 -67.4 1 7.1 1 22.6 1 -10 1 -4.5M103 752.0l1 -28.2 1 18.5 1 -6.1 1 6.4 1 -35.8 1 35.3 1 -26 1 -3.8 1 -17.3 1 18.6 1 91.4 1 -49.6 1 .5 1 -2.5 1 3.1 1 -5.5 1 6.4 1 3 1 -1.8 1 -6 1 2.3M126 761.5l1 4.1 1 -7.5 1 -6.7 1 9.2 1 -3.2 1 2.3 1 -3.1 1 3 1 -6.2M137 767.9l1 -20.9 1 11.6 1 3.5 1 .4 1 -2 1 -9.8 1 .7 1 10.8 1 -4.5 1 4.4 1 -3.4 1 -2.4M151 754.0l1 5.1 1 -4.1 1 3 1 -4.9 1 -.2 1 14.5 1 -7.2 1 -4.1 1 -2.4 1 -.1 1 -3 1 20.6 1 -10.1 1 -3.3 1 5.2 1 -6.1 1 -6.8 1 10.9 1 -4.5 1 3.3 1 -9.9 1 9.8 1 -2.4 1 8.1 1 -1.8M180 776.1l1 -13.2 1 7.7 1 -16.4 1 2.8 1 15.5 1 -28.8 1 35.5 1 -20.3 1 -20.1 1 22.1 1 .9 1 -21.9 1 5.7 1 10.6 1 3.3 1 35.5 1 -9.3 1 -69.7 1 38.9 1 16.9 1 -12.2 1 15.2 1 -11 1 8.7 1 -18.5 1 7.5 1 6.6 1 31.3 1 -42 1 -2 1 9.3 1 -6.2 1 6.8 1 11 1 5.2 1 -17.4 1 -12.6 1 15.7 1 19.4 1 -29.7 1 27.3 1 -22.1 1 -2 1 .6 1 2.4 1 -4.8 1 -11 1 22.8 1 -32.2 1 48.9 1 8.1 1 -16.7 1 -13.1 1 10.8 1 -2.6 1 18.1 1 -12.7 1 -21.1 1 38.4 1 -18.2 1 -2.4 1 -8 1 14.8 1 -12.4 1 16.1 1 16.2 1 -20.5 1 -10.1 1 15.5 1 -11.2 1 -4 1 8 1 -7.3 1 5.1 1 13.3 1 -15.2 1 -14 1 4.5 1 -9.9 1 -18.6 1 6 1 -27.7 1 33.2 1 -8 1 31.9M267 770.6l1 -11.8 1 -5.8 1 9.2 1 19.3 1 -46.4 1 25.8 1 -1.4 1 10.4M282 753.4l1 -5.7 1 .4 1 9.8 1 -5.6 1 9.9 1 -8.8 1 -3.3M291 744.5l1 19.8 1 -14.7"/>
<path vector-effect="non-scaling-stroke" d="M115 772.1l1 -17.1 1 5.6 1 -16.9 1 12.7 1 -3.6 1 -3.1 1 9.2 1 -2.9 1 9.7 1 -21.5 1 16.6 1 -3.7 1 -10.7 1 16.1 1 -14 1 -10.2 1 15.5 1 -2.8 1 -4.1 1 9.6 1 -8.7 1 1.1 1 7 1 7.3 1 -6.4 1 12.7 1 -15.2 1 9.3 1 -4.4 1 -3.1 1 -3.4 1 11.3 1 -7.3 1 -2.2 1 -3.7 1 -17.3 1 22.3 1 7.5 1 -10.4 1 8.8 1 -8 1 4.9 1 .4 1 .3 1 1.4 1 -9 1 4.6 1 -1 1 -9.8M166 756.6l1 -2.6 1 4.7 1 4.5 1 -10.7 1 -1.9 1 1.8 1 -7 1 11.8 1 .4 1 0M185 766.9l1 8.7 1 -28.5 1 23.9 1 -10.4 1 -18.6 1 12.1 1 7.4 1 11.1 1 34.4 1 -45 1 9.1 1 -20.5 1 7.6 1 9.1 1 -13.7 1 4.9 1 10.5 1 -23.5 1 16.6 1 -14.6 1 8 1 6.1 1 -3.3 1 7.7 1 -9.2 1 -5 1 21 1 -14.6 1 3.7 1 61.1 1 -50 1 -17.8 1 -16.6 1 13.8 1 -4 1 16.9 1 -14.5 1 -3.6 1 12.9 1 .6 1 2.4 1 -4.8 1 2.2 1 12.6 1 17.2 1 -17.5 1 6.4 1 -1.4 1 -4.9 1 18.8 1 -10.2 1 -4.4 1 9.1 1 -6.9 1 .9 1 9.9 1 -19.8 1 59.8 1 -10.3 1 -29.5 1 -22.8 1 27.1 1 -23 1 17.7 1 -10.7 1 7.4 1 -10 1 -5.7 1 8.1 1 -9.3 1 .4 1 .9M262 736.5l1 -3.8 1 33.3M282 757.0l1 -4.9 1 -13 1 11.1 1 15.4M288 764.1l1 -20.1 1 -4 1 4.6 1 5.8 1 11.7"/>
<path vector-effect="non-scaling-stroke" d="M34 754.0l1 -10.2 1 -1.8 1 -1.5 1 -9.3 1 26.7 1 6.1 1 -5.1 1 13.9 1 10.8 1 -21.1 1 28.5 1 -31.7 1 -13.4 1 -35.2 1 42.8 1 6.5 1 8 1 -19.6 1 -39.7 1 41.1 1 53.2 1 -64.1 1 4.6 1 54.2 1 -43.9 1 2.9 1 -52.7 1 45.6M185 753.5l1 2.6 1 22.2 1 -13.4 1 -13.4 1 3.8 1 4.9 1 14.1 1 -6 1 -4.5 1 .2 1 -19.7 1 14.3 1 21.4 1 -1 1 -9.3 1 -8.6 1 4.7 1 -6.9 1 -1.2 1 10.5 1 -7 1 -8.6 1 12.3 1 -1.6 1 -12.2 1 21.1 1 -4.5 1 -14.3 1 -8.5 1 12.6 1 5.9 1 -18.9M230 776.8l1 22.5 1 -14 1 1.5 1 -12 1 23.5M237 779.1l1 .2 1 -15.9 1 14.2 1 -10.5 1 11.9 1 -7.5 1 21.4M246 781.9l1 -10.2 1 7.4 1 -1.3 1 -5 1 15 1 -12.3 1 -9 1 6.4 1 -1.5"/>
<path vector-effect="non-scaling-stroke" d="M0 748.8l1 -10.6 1 -1.1 1 -.8 1 1.3 1 -4.9 1 42.4 1 -18.2 1 -21.7 1 -9.3 1 6.2 1 4.4 1 73.5 1 -76.2 1 7.8 1 7.5 1 -3.8 1 -.7 1 -6.9 1 13.4 1 -30.9 1 44 1 -9.1 1 .9 1 -13.5 1 -20.5 1 9.1 1 7.8 1 24.6 1 -26.3 1 2.3 1 28.3M115 749.1l1 -5.7 1 11.5 1 .3 1 2.9 1 -23.5 1 23.7 1 -.7 1 -8.3 1 3.4 1 -12.2 1 -7.6 1 25.7 1 -18.6 1 19.2 1 -12 1 -2.3 1 -1.6 1 2.9 1 9.5 1 -5.9 1 8.7 1 -20 1 13.6 1 2.5 1 -6.8 1 .5 1 3.4 1 1.5 1 4.2 1 -.2 1 -2.6 1 9.7 1 -10.4 1 -.1 1 -2.6 1 3.7 1 -14.5M154 753.0l1 -2.4 1 7.6 1 -11.7 1 7.3 1 -19.1 1 10.3 1 3.8 1 3.9 1 6.1 1 -13 1 -1.5 1 9.3 1 4.2 1 -4.2 1 -5.4 1 3.3 1 2.9 1 -2.2 1 -2.3 1 .5 1 7.9 1 -2.3M185 760.3l1 5.5 1 -10.8 1 -1 1 28.4 1 -27.1 1 18 1 -29.7 1 16.1 1 13 1 -34.3 1 -13.9 1 27.2 1 15.6M200 769.2l1 -6.2 1 1.8 1 -8.7 1 -15.7 1 17 1 -8.3 1 -5.1 1 8.9 1 8.1 1 1.8 1 -.4 1 3 1 -25.9 1 -4.8 1 25.4 1 -8.7 1 24.7M230 778.9l1 5.6 1 4 1 -9.6 1 -13.5 1 -1.4 1 15.5 1 11.8 1 -13.3 1 7.4 1 6.7 1 -12.6 1 -18.2 1 20.1 1 -9.1 1 9.7 1 -15.3 1 41.3 1 -22.5 1 -20.1 1 17.3 1 -11.1 1 1.8 1 -9.8 1 9.7 1 .4 1 -1.6 1 6.8M266 758.5l1 -13.4 1 5.2 1 -19.1 1 -1.2 1 28.1 1 -4.6 1 -20.3 1 30.2 1 -4.5"/>
<path vector-effect="non-scaling-stroke" d="M115 757.8l1 -2.5M119 758.6l1 .1 1 -6.4 1 13.3 1 -8.4 1 -2.1 1 -.4 1 3.3 1 11.1 1 -18.2 1 0 1 4.1 1 -5.3 1 11.2 1 -12.8 1 11.7 1 3.7 1 -11.2 1 5.5 1 -2.9 1 1.3 1 .6 1 -5 1 .6 1 2.6 1 3.4 1 -2.5 1 -6.3 1 -.6 1 -3.9 1 15 1 -7.4 1 -5 1 10.2 1 9.6 1 -22.6 1 4.5 1 11.5 1 -13.5 1 .7 1 3 1 12.8 1 -19.6 1 7.6 1 -3.7 1 -2.2 1 9.3M167 756.9l1 -10.5 1 4 1 .2 1 19.8 1 -18.9 1 -2.2 1 6.6 1 -6.9 1 17.2M185 763.7l1 5 1 27.2 1 -10.9 1 -19.8 1 -25.3 1 23 1 -10.5 1 12.1 1 -11.5 1 19.3 1 -24.5 1 5.2 1 -12.9 1 23.7 1 -9.2 1 -7.3 1 6.4 1 -19.2 1 60.8 1 -18.1 1 -2.1 1 -13.4 1 -5.3 1 -13.2 1 11.9 1 -3.3 1 14.1 1 -14.8 1 9.1 1 12.5 1 -20.2 1 11.3M230 777.1l1 .7 1 5.9 1 -2.5 1 1.2 1 -8.3 1 -3.5 1 10.7 1 8.3 1 -19.9 1 -18.4 1 36.5 1 -8.8 1 -3.4 1 12.3 1 -7.8 1 -2 1 11.6 1 -21.7 1 16 1 .9 1 -8.9 1 4.3 1 -7.3 1 6.6 1 3.1 1 2.6 1 2.7M276 751.3l1 -.1 1 -5.6 1 8.8 1 -15 1 9.9 1 -18.2 1 1.8 1 26.5 1 -24.6 1 -1.9 1 19.4 1 1.2 1 -.7 1 6.5 1 -8.1 1 -3.2 1 13.5"/>
<path vector-effect="non-scaling-stroke" d="M115 752.0l1 10.7 1 -4.9 1 4.8 1 4.3 1 -9.8 1 12 1 -12 1 -6.8 1 -2.4 1 9.5 1 -2.3 1 -2.4 1 6.5 1 -3.3 1 -2.5 1 5 1 -8.1 1 18.3 1 -4.2 1 -8.6 1 16.8 1 -22.6 1 3.7 1 -5 1 15M142 758.1l1 -10.1 1 10.6 1 6.4 1 -5.2 1 -12.7 1 19.7 1 -23.9 1 29.4 1 -12.8 1 -11.7 1 21.8 1 -13.8 1 -5.5 1 2.2 1 3.6M159 754.1l1 6.2 1 -8 1 3.1 1 11.3 1 -15.5 1 10.8 1 -9.9 1 2.3 1 10 1 -8.7 1 13.7 1 -14 1 1.8 1 -3.4 1 10.3 1 -9.4 1 6M185 730.3l1 16 1 11 1 6.9 1 -1.4 1 11.9 1 -6.6 1 -9.5 1 -8.3 1 33.8 1 -45.1 1 16.6 1 5.2 1 -5.5 1 23.9 1 -20.1 1 7.6 1 -6 1 -16 1 15.6 1 -5.9 1 12.2 1 13.6 1 -22.4 1 37.3 1 -24.9M212 769.2l1 -11.4 1 -.6 1 .4 1 4 1 -4.6M230 786.1l1 -19.1 1 5.7 1 -1.1 1 9.6 1 12.3 1 -9.5 1 .4 1 -7.4 1 .5 1 17.9 1 -8 1 -17.3 1 7.2 1 2.9 1 -.2 1 3 1 -.8 1 -9.2 1 39.3 1 -21.4 1 -14.5 1 2.4 1 6.3 1 -5.1 1 16.4 1 -12.5 1 -45"/>
<path vector-effect="non-scaling-stroke" d="M0 748.6l1 -12.6 1 25.8 1 -14.5 1 4.9 1 23.3 1 -25.4 1 17.3 1 -8.1 1 3.5 1 -7 1 2.7 1 -1.4 1 -17.8 1 21.3 1 -11.4 1 -2.4 1 25.3 1 -8.7 1 -13.8 1 .7 1 9.6 1 -6.4 1 -26.2 1 24.6 1 6.7 1 9.4 1 -5 1 -17.9 1 -8.9 1 8.3 1 -1.8M63 758.3l1 -1.2 1 -15 1 8.1 1 -32.2 1 -1.3 1 33 1 30.3 1 -21.3 1 -1.8 1 -3.9 1 1 1 -12.2 1 24.4 1 -10.7 1 -9.5M115 756.3l1 12.4 1 -5.5 1 -18.2 1 10.4 1 10.8 1 -17 1 6.8 1 9.9 1 2.4 1 -6.8 1 -2.9 1 -7.7 1 10.2 1 7.2 1 -12.4M132 755.3l1 5.9 1 -7.7 1 5.7 1 -5.7 1 5.1M139 752.4l1 -2.8 1 13.2 1 2.6 1 -.2 1 -6.4 1 4.7 1 .8 1 -6.5 1 -.2 1 -1 1 12.2 1 -12.9 1 -2.3 1 13.1 1 -5.3 1 -1.3 1 -6.1 1 8.6 1 -3.9 1 1.2 1 1.5 1 -7 1 -4.2 1 7.4 1 1.4 1 .6 1 -11.1 1 14.1 1 -2.7 1 9.6 1 -14.4 1 3.1 1 2.2 1 4.7 1 -5.2 1 2.7 1 -6.7M185 765.6l1 11.5 1 -16.6 1 -6.6 1 28.3 1 2.8 1 -19.8 1 9.7 1 -11.9 1 -17.3 1 15 1 -23.8 1 11.8 1 17.1 1 12.1 1 -11.8 1 -3.4 1 11.5 1 -4.5 1 6.6 1 -9.2 1 -11.7 1 6.9 1 -19.5 1 8.4 1 29.6 1 13.4 1 -68.6 1 52.8 1 -1.2 1 -12.6 1 14.8 1 -50.2M230 758.4l1 23.4 1 -8.9 1 13.8 1 13.4 1 -25.2 1 20.2 1 -20.7 1 -2.9 1 20.6 1 -7.3 1 3.6 1 -8.8 1 5.6 1 8.2 1 1.4 1 -.1 1 -11.6 1 5.1 1 4.3 1 -17.5 1 2.4 1 22 1 -13.2 1 -.5 1 -1.8 1 11.8 1 -6 1 -49 1 -8.6 1 -4.1 1 16M267 739.1l1 -5.2 1 21.7 1 4.6 1 -13.9 1 -9.9 1 12.1 1 5 1 -13.8"/>
<path vector-effect="non-scaling-stroke" d="M86 735.6l1 -.8 1 -29.5 1 12.4 1 -13.2 1 23.7 1 7.5 1 -13.9 1 13.5 1 -1.9 1 -15.5 1 -10 1 15 1 -6.5 1 -.9 1 13.4 1 -3.2 1 -4 1 15.3 1 -24.7 1 29.5 1 5.8 1 -30 1 14 1 -10.1 1 2.1 1 3.7 1 25.5 1 -17.2 1 17.8 1 2 1 -11.3 1 23 1 -4.2 1 -14 1 11.3 1 -14.6 1 9.9 1 4.9 1 3.6 1 -11.4 1 3.1 1 3.2 1 5.2 1 -22.3 1 14.7 1 10.1 1 -8.7 1 -9.8 1 1.7 1 11.3 1 29.4 1 -38 1 1.8 1 -7 1 3.9 1 -6.8 1 9.1 1 4.5 1 -12.9 1 -3.2 1 26.6 1 -8 1 -4.6 1 10.7 1 -7.3 1 -5.8 1 5.3 1 -.3 1 6.3 1 -9.9 1 -6.2 1 15.5 1 -20.7 1 15.8 1 3.8 1 -8.6 1 2.7 1 4.7 1 -12.1 1 4.2 1 10.4 1 -13.4 1 8.8 1 -5.9 1 2.6 1 -.7 1 -.3 1 -1.1 1 -6.3 1 16.6M230 789.8l1 -5.2 1 -6.6 1 -3.6 1 9.4 1 -.9 1 -21.3 1 -38.6 1 48.9 1 -1.3 1 6.5 1 7.4 1 -11.1 1 5.2 1 -8 1 .2 1 14.2 1 -16.2 1 10.7 1 -4.7M251 776.5l1 9.2 1 -4.5 1 -2 1 3 1 -10.9 1 -3M267 751.8l1 -10.1 1 -20.7 1 19.4 1 18.4 1 -13.3 1 18.5 1 -19.3 1 30.2M282 755.2l1 -9.6 1 18.4 1 -14.5 1 -19.7 1 9.8 1 8.2 1 -8.6 1 5.4 1 -6.2 1 3.8 1 -1.2"/>
<path vector-effect="non-scaling-stroke" d="M79 755.4l1 -1.4 1 -7.3 1 17.8 1 -26.2M115 757.9l1 4.6 1 -3.3 1 -2.1 1 10.4M121 757.2l1 5.1 1 -16.9 1 13.6 1 -10.5 1 2.4 1 7.2 1 1.8 1 -3.5 1 -5.9 1 3.9 1 -7.9 1 1.9 1 13.9 1 4.2 1 -3.8 1 -4.1 1 -5 1 3 1 .9 1 -11.6 1 11.1 1 -4.5 1 2.5 1 -1.2M147 771.7l1 -8.1 1 1.9 1 -17.2 1 7.5M153 752.8l1 3.2 1 0 1 -1.8 1 -7.8 1 9.6 1 4.7 1 -5.7 1 .1 1 -9.7 1 22.9 1 -12 1 -3.5 1 2.5 1 -9.3 1 5 1 11.2 1 -11.6 1 11.7M173 754.3l1 1 1 -4.2 1 -1.5 1 32.7 1 -25.9 1 -4.5 1 -5.6 1 12.8 1 -1.6 1 6.5 1 -11.4 1 7.6 1 -.4 1 6.8 1 -.7 1 -8.5 1 -5.2 1 7.1 1 2 1 -6.4 1 17.7M196 756.3l1 12.5 1 5.4 1 -8.1 1 .8 1 21.8 1 -9.6 1 -26 1 12.6 1 -40.6 1 36.8 1 -17 1 9.4 1 .4 1 16.1 1 -20.1 1 20.4 1 -.5 1 -4.5 1 -14 1 -7.1 1 4M230 765.7l1 11.5M233 787.2l1 7.2 1 -18.1 1 7.9 1 -10.2 1 6 1 9 1 -15.9 1 25.1 1 -16.5 1 -.6 1 -28.3 1 21.8 1 -7.1 1 13.3 1 5 1 2.6 1 -3.2 1 3.8 1 -7.3M254 785.3l1 -12.5 1 -.4 1 3.2 1 -22.9 1 -4.1 1 3.3M262 751.0l1 23.9 1 -15.6 1 -31 1 3.6 1 1.7 1 5.7 1 19.3 1 -36.5 1 -.1 1 14.3 1 31.4 1 -17.9 1 -5.8"/>
<path vector-effect="non-scaling-stroke" d="M32 719.0l1 53.5 1 -.6 1 -44.4 1 21.4 1 -3.4 1 30.5 1 -11.6M41 751.6l1 -32.6 1 -12.4 1 55.4 1 -18.2 1 25.2 1 59.1 1 -91.7 1 -.9 1 22.8 1 12.9 1 -27.7 1 15.3M58 766.0l1 -25.4 1 -1.9 1 22.6 1 -27.8M86 740.3l1 .5 1 -15.1 1 6.4 1 -5.7 1 6.4 1 -1.2 1 8.3 1 -19.1 1 20.6 1 -30.4 1 -3.7 1 3.9 1 -2.3 1 26.1 1 -27.1 1 23.9 1 -28.8 1 42.2 1 -34.5 1 1.6 1 -24.3 1 39.6 1 47.4 1 -72.6 1 28.5 1 -36.4M114 720.1l1 26.2 1 -.7 1 14.4M119 747.7l1 7.2 1 .4 1 2.8 1 -1.1 1 -3.2 1 -1 1 -11.1 1 4.3M129 748.0l1 4.4 1 7.4 1 -2.6 1 -2 1 5.4 1 -6.6 1 .6 1 1.3 1 -1.4 1 8.2 1 .3 1 -1.9 1 2.4 1 -20.7 1 20.9 1 -6.6 1 -1.9 1 -6.2 1 1.7 1 7.6 1 10.2 1 -13.8 1 -2.6 1 5.8 1 -8.9 1 -2M159 755.9l1 3.2 1 -10.9 1 .8 1 .7 1 16.1 1 -19 1 -6.5 1 22.4 1 -15.9 1 2.6 1 7.2 1 -2.7 1 -2.3 1 4.1 1 3.3 1 -6 1 1.9M185 771.1l1 -12.2 1 3.8 1 12.1 1 -22.3 1 -3.2 1 7.2 1 -7.5 1 14.6 1 0 1 -.4M197 731.2l1 33.5 1 -15.8 1 8.1 1 21 1 -15.2M204 769.3l1 -9.9 1 8.4 1 -25.7 1 14.8 1 13.6 1 -18.7 1 .1 1 1.2 1 22.6 1 -49.4 1 36.3 1 -10.8 1 17.9M230 787.7l1 -3 1 -19.4 1 13.3 1 22.1 1 -35.4 1 -5.7 1 -7 1 26.6 1 .3 1 -14.6 1 1.1 1 16.6 1 -6.6 1 3 1 -14.1 1 20.7 1 -8.4 1 4.3 1 -24.9 1 15.5 1 2.4 1 6.9 1 -10 1 -2.1 1 2.9 1 13.2 1 -6.2 1 -36.8 1 1.6 1 -2.5 1 -6.9"/>
<path vector-effect="non-scaling-stroke" d="M185 780.2l1 6.5 1 -22.8 1 -3.2 1 -6.2 1 -2.7 1 31.6 1 -29.1M194 764.9l1 9.3 1 -17.2 1 -3.8 1 7.5M200 762.9l1 -2.9 1 8.8 1 -5 1 7.5 1 7.4 1 -23 1 1.5 1 4.4 1 .5 1 -7.4 1 -1.2 1 -.9 1 -.5 1 17.1 1 -7.5 1 11.2 1 -2.5M230 770.1l1 8 1 -1.5 1 -11.2 1 11.5 1 -5.8 1 12.4 1 3.5 1 -20.5 1 9.7 1 19.5 1 -4.2 1 -2.1 1 -7.5 1 1.6 1 -3.7 1 1.7 1 -6.6 1 12.9 1 1.1 1 5.1 1 -18.3 1 19.5 1 -16.8 1 11.4 1 -11.5 1 7 1 10.6M267 782.9l1 -28.1 1 15.2 1 -11.9 1 -.9 1 -24.4 1 -1.1 1 30.6 1 7"/>
<path vector-effect="non-scaling-stroke" d="M86 703.2l1 19.8 1 .5 1 21.8 1 -28.1 1 12.3 1 13.1 1 -18.1 1 5.1 1 -14.4 1 -3.3 1 21.4 1 -11.9 1 9.9 1 4.2 1 -14.1 1 15.4 1 -19.5 1 16.4 1 10.2 1 -25.7 1 10 1 -2.2 1 11 1 -8.2 1 -17.6 1 -17.8 1 20 1 16.4 1 29 1 5.2 1 -18.3 1 8.8 1 .3 1 13.9 1 -11.2 1 2.3 1 -5.7 1 -2.3 1 13 1 -12.5 1 14.1 1 -7.9 1 -4.7 1 .7M132 759.6l1 -5.3M135 755.4l1 -9.9 1 6.4 1 13.6 1 -8.6 1 -3.2 1 3.8 1 -8.8 1 20.5 1 -6.1 1 -12.2 1 3.6 1 6.6 1 -3.5 1 5.1 1 -7.3 1 3.4M153 766.5l1 1.8 1 -5.7M157 765.5l1 -12.6 1 6.6 1 -7.1 1 7.9 1 1 1 1.7 1 -.7 1 -3.8 1 -8.5 1 20.5 1 -9.5 1 2.3 1 -6 1 10.6 1 -14.2 1 7.6 1 -6 1 4.9 1 1.5M185 751.8l1 -5.7 1 5.3 1 -.9 1 10 1 12.6 1 1.5 1 -26.1 1 19.5 1 2.3 1 -13.9 1 -19.6 1 15.1 1 22.6 1 -13.6 1 -12.2 1 8.8 1 -19.4 1 31.4 1 -.7 1 -10.9 1 14.7 1 -4.9 1 -19 1 19.8 1 -20.8 1 -9.6 1 46.1 1 -7.4 1 11.1 1 -21.8 1 10.5 1 -29.3 1 -13.2 1 21.9 1 -5.5 1 -13.8 1 21.6 1 -28.3 1 8.9 1 3.8 1 39.7 1 -28.8 1 12.1 1 -11.3 1 41.5 1 -7.1 1 -19.2 1 19.6 1 -30.7 1 11.5 1 -5.6 1 7.5 1 45.6 1 -39.8 1 -9 1 12.2 1 -38.7 1 28.2 1 -2.2 1 30.2 1 -15.9 1 8.5 1 -3.5 1 -20.3 1 29.6 1 -14.6 1 6.6 1 -17.3 1 -5.8 1 20.1 1 27 1 -33.6"/>
<path vector-effect="non-scaling-stroke" d="M115 754.4l1 1.8 1 13 1 -15.8 1 10 1 -13.6 1 5.5 1 -1.8 1 4.8 1 34.1 1 -41.6 1 -3.1 1 1.9 1 9.2 1 -14.6 1 5.8 1 1.7 1 -.1 1 10.7 1 -10.9 1 -2.7 1 18.5 1 -13.1 1 -3 1 5.1 1 -1.8 1 .4 1 7.1 1 -5 1 -5.9 1 12.7 1 -3.1 1 -14.6 1 8.7 1 9.2 1 -7.2 1 -1.4 1 -12.5 1 13.4 1 2 1 -8.6 1 10.9 1 -3.2 1 -8.9 1 -.1 1 27 1 -18 1 -.9 1 .1 1 1.2 1 -2.2 1 .3 1 14 1 -18.1 1 2.9 1 -1.2 1 6.2 1 0 1 -9.5 1 7.8 1 -3.4 1 5.1M185 769.3l1 -34.1 1 45.8 1 -28.8 1 18.1 1 2.2 1 -19 1 3.5 1 -11.8 1 12.3 1 22.6 1 -16.6 1 -13.5 1 31.7 1 -26.9 1 33.8 1 -14.7 1 -10.8 1 -3 1 -10.5 1 9.4 1 -7.2 1 13.8 1 -8.3 1 -19.8 1 16.8 1 -12.7 1 7 1 20.5 1 -17.7 1 21.3 1 -20.4 1 -26M258 742.2l1 7.6 1 23.8 1 -18"/>
<path vector-effect="non-scaling-stroke" d="M0 760.4l1 -17.8 1 15.8 1 -50.4 1 54.5 1 -7.5 1 1.6 1 -18.3 1 -18.3 1 38.1 1 8.4M12 766.0l1 -17.6 1 -4.2 1 11.2M17 739.1l1 12.9 1 -52 1 60.5 1 -10.6 1 -4.1 1 4.3 1 -.8 1 16.6 1 -6.8 1 -8.9 1 8.4 1 .7 1 -17 1 20.2M63 759.2l1 -3.7 1 -2.2 1 3.2 1 -11.6 1 1.1 1 10.8 1 9.2 1 -5.8 1 -20.2 1 19.8 1 -44.8 1 40 1 2.1 1 -2.7 1 -9.4M87 728.0l1 1.5 1 -3.4 1 .2 1 -15.5 1 21.6 1 8.8 1 -.4 1 -33 1 12.3 1 11.8 1 2 1 -8.8 1 .8 1 -.1 1 -5.6 1 20.5 1 -15 1 -15.2 1 27.5 1 -9.2 1 1 1 .4 1 -23.8 1 -22.4 1 57.3 1 2.1 1 -.8 1 22 1 -1.9M118 760.5l1 -1.5M121 764.6l1 -6.2 1 -1.2 1 6.3 1 -4.6 1 -6.5 1 2.4 1 5.3 1 -1.4 1 -3.8 1 33.7 1 -15.2 1 -11.7 1 -3.3 1 1.3 1 9.4 1 11.8 1 -19.4 1 4.2 1 -3.6 1 16.5 1 -24.7 1 4.8 1 1 1 -8.9 1 10.8 1 4.4 1 -17.2 1 1.9 1 14.5 1 -6.4 1 14.4 1 -4.2 1 -15.3 1 18.4 1 -10.7 1 1.5 1 -6.1 1 12.9 1 -6.1 1 -5.4 1 -1.2 1 -1.3 1 6.9 1 -3 1 5.9 1 -2.1 1 -2 1 -10.1 1 10.6 1 -6.8 1 3.6 1 11.3 1 -17.4 1 22.1 1 -18M185 775.1l1 1.8 1 -27.2 1 10.9 1 20.9 1 -13.8 1 -24.6 1 33 1 -31 1 15.8 1 15.1 1 -24.7 1 8 1 26.9 1 -11.4 1 -32.2 1 29.4M203 763.5l1 3.9 1 -4.4 1 -9.7 1 6.6 1 5.8 1 -.9 1 -19.4 1 11.1 1 21.3M214 765.2l1 11.5 1 -13.4 1 -12.5M230 777.8l1 8.2 1 -5.9 1 18.2 1 -7.7M236 793.9l1 -10 1 10.3 1 4.9 1 -23.5 1 16.2 1 .6 1 -50.4 1 50.9 1 15.2M247 784.0l1 7.3 1 -2.9 1 4.9 1 -19.9 1 25 1 -21.3 1 2.5 1 16.2 1 -12.2 1 36.1M262 763.1l1 13.6 1 -2.6 1 -18.1"/>
<path vector-effect="non-scaling-stroke" d="M115 758.2l1 30.8 1 -28.5 1 -4 1 -2 1 3.9 1 -17.1 1 10.6 1 16.3 1 -13.1 1 -.2 1 12.1 1 -22.8 1 2.7 1 9.3 1 5.1 1 -9.4 1 7 1 3.7 1 -2.9 1 -12.5 1 6 1 7 1 -13.6 1 6.2 1 5.3 1 2.4 1 -13 1 15.6 1 -18.7 1 7.1 1 -4.3 1 8.1 1 -5.5 1 6.1 1 5.1 1 -8.3 1 -1.4 1 2.8 1 3.7 1 -1.4 1 1.2 1 -4.9 1 0 1 5.5 1 .4M162 762.4l1 -18.3 1 23.7 1 -14.1 1 3.4 1 -1.3 1 -8.3 1 3.6 1 4.1 1 3.2 1 8.9 1 -12.4 1 3.9 1 1.6 1 .6M185 756.2l1 -.5 1 -3.3 1 12.1M190 747.4l1 14.5 1 -6.9 1 5.9 1 8.1 1 -17.3 1 -10.5 1 .8 1 9.5 1 -19.5 1 22.4 1 -61.4 1 39.8 1 2 1 38.1 1 -21.2 1 -18.5 1 15.7 1 9.9 1 8.5 1 -2.9 1 -13.2 1 16.8 1 -27.2 1 48.9 1 -11 1 -4 1 -16.6M262 750.1l1 -15.1 1 1.2 1 10.6 1 13.8 1 -8.6 1 -2.4 1 -3.2 1 -1.5 1 32.2 1 -37.8 1 -6.3 1 38.5 1 -11.9 1 4.1 1 -11.2 1 4.1 1 -7 1 9.2 1 -2 1 -8.6 1 10.2 1 -24.1 1 9.1 1 10.9 1 -10.2 1 10.6 1 1.7 1 -17.6"/>
<path vector-effect="non-scaling-stroke" d="M115 747.3l1 47.7 1 -48.5 1 1.6 1 7.6M121 753.9l1 1.2 1 -3.9 1 11.8 1 .5 1 -4.5 1 5.7 1 -2.9 1 1.9 1 -24 1 30.7 1 -9.1 1 -12.2 1 10 1 -6.9 1 6.5 1 -5.2 1 -3.8 1 -3.3 1 8.7 1 4.5 1 -6.7 1 13.4 1 -18.8 1 7.9 1 6.3 1 6.3 1 -.7 1 -14.1 1 9.5 1 -9.4 1 11 1 -3.1 1 2 1 5.7M157 757.2l1 -1.6 1 -2.4 1 10.2 1 -3.2 1 2 1 -.4 1 -15.3M166 756.5l1 -2.5 1 4.4 1 1.4 1 -3.2 1 2.6 1 3 1 -5.2 1 -3.4 1 4.6 1 -.2M185 735.5l1 34.1 1 -1.3 1 -13.1 1 27.2 1 -6.5 1 -1.9 1 2.7 1 -26.6 1 33.1 1 -21.1 1 2.3 1 -2.2 1 -10.8 1 .4 1 19.4 1 -1.1 1 4 1 -25.8 1 21.5 1 5.3 1 -28 1 1.1 1 -3.6 1 9.4 1 27.5 1 -25.7 1 -12.6 1 4.5 1 24.3 1 4.6 1 -13.8 1 -.8M230 761.8l1 5.6 1 21.1 1 15.4 1 -50.7 1 25.1 1 12.5 1 -22.5 1 3.8 1 19.9 1 .9 1 -10 1 .7 1 -6.4 1 6.3 1 -2.9 1 2.5 1 7.5 1 1.9 1 -13.8 1 1.5 1 -6.4M253 783.7l1 10.5 1 -25.1 1 25.7 1 -17.1"/>
<path vector-effect="non-scaling-stroke" d="M86 712.6l1 19 1 5.7 1 -47.3 1 44.4 1 -1.6 1 -18.1 1 -13.4 1 24.5 1 -8.7 1 4.6 1 33.7 1 -51.3 1 41.6 1 -46.8 1 14.9 1 8.8 1 -3.1 1 3.4 1 -22.7 1 11.9 1 25.1 1 2.8 1 -11.8 1 -17.9 1 2.7 1 -9.9 1 21.1 1 -12.1M116 756.9l1 -9 1 2.4 1 -.5 1 2.5 1 4.9 1 -5.4 1 6 1 -3.3 1 8.5 1 -10.2 1 2.8 1 8.5 1 -7.2M131 758.0l1 -7.4 1 12.7 1 .6 1 1.2 1 -13.9 1 2.9 1 -2.5 1 -6 1 -4.2 1 8.5 1 -2.9 1 4.3 1 12.5 1 -8.9 1 -15.2 1 13.2 1 3.1 1 -1.3 1 2.8 1 2.8 1 -9.5 1 1.8 1 -.7 1 -1.8 1 1.5 1 -2.1 1 -1.2 1 8.8 1 .3 1 -4 1 .2 1 7.5 1 -3M166 751.2l1 -9.6 1 11.1 1 2.4 1 8.1 1 -18.7 1 19 1 -10.5 1 -9.1 1 15.2 1 -11.2 1 15.5M185 741.9l1 7.4 1 -11.5 1 30.7 1 -3 1 6.1 1 6.8 1 -26.1 1 8.3 1 3.6 1 -1.2 1 14.6 1 -58.7 1 50.3 1 -1.4 1 -16.4 1 9.6 1 11.2 1 -17.1 1 -20.1 1 35.8 1 -31.7 1 20.2 1 -10.4 1 20.1 1 -11.2 1 -10.3 1 25.4 1 -17.7 1 2.7 1 17.1 1 -11.6 1 -19.9M230 778.0l1 3.2 1 3.8 1 -62 1 44.5 1 11.5 1 -11.3 1 13.6M239 777.4l1 7.5 1 -1.5M243 787.2l1 4.3 1 -5.6 1 -15.6 1 -37.3 1 59.5 1 -25.8 1 1.6 1 2.8 1 4.4 1 -5 1 4.6 1 20.2 1 -3.2 1 -5.2 1 -42.7 1 -5.6 1 6.3 1 24.5 1 -24.6 1 11.1 1 -16.3M267 726.8l1 48.7 1 -20.7 1 1.2 1 21.1 1 -15.3 1 -14.7"/>
<path vector-effect="non-scaling-stroke" d="M0 733.6l1 28.3 1 -29.9 1 13.6 1 -14.4 1 19.3 1 -13.3 1 -7.1 1 36.2 1 .5 1 -33.2 1 11.2 1 5.1 1 -2.5M15 750.7l1 9.5 1 -21.8 1 -18.5 1 31.3 1 -14.5 1 4.7 1 78.6 1 -72.1 1 -5.7 1 -2.6 1 17.3 1 -1.1 1 -5.1 1 -.1 1 .9 1 -10.2M115 764.6l1 -2.2 1 -7.4 1 3.5 1 -9.8 1 .5 1 -.8 1 1.2 1 9.1 1 -8.2 1 5.1 1 -9.1 1 8 1 5.1 1 -2.1 1 -.7 1 -6M133 772.2l1 -14.5 1 .6 1 -8 1 -.5 1 10.5 1 -5 1 -1.4 1 -30.4M143 754.4l1 -1.8 1 -5.1M147 752.7l1 -12.4 1 10.3 1 28.6 1 -28.1 1 6.6 1 2.1M155 758.8l1 .8 1 -7.2 1 11.3 1 -14.1 1 1.9 1 -4.2 1 20.5M164 758.8l1 -3.4 1 2.4 1 -2.8 1 .9 1 1.3 1 1M172 742.3l1 7.3 1 10 1 -6.4 1 -14.9M185 747.1l1 -9.2 1 11.3 1 20.1 1 -7.3 1 -20.1 1 42.4 1 -13.9 1 -3.6 1 -22.1 1 30.2 1 -22.1 1 -2.8 1 19 1 6 1 -9 1 -17.2 1 -3.5 1 7.1 1 20.3 1 -45.6 1 28.2 1 .5 1 4 1 -11.2 1 4.5 1 7.2 1 -13.9 1 24.8 1 19.8 1 -45 1 23 1 -25.4M230 784.4l1 -5.3 1 6.5 1 -19.1 1 1.5 1 -8.3M237 778.5l1 11.1 1 -6.8 1 -32.3 1 26.4 1 2.6 1 7.4 1 -16.4M246 771.6l1 2.1M249 764.0l1 13 1 12.4 1 -17.2 1 -6.1 1 16.4 1 -4 1 -3 1 3.1"/>
<path vector-effect="non-scaling-stroke" d="M32 743.9l1 11.4 1 4.5 1 -2.7 1 -17.5 1 24.8 1 -15.3 1 5.9 1 -15M43 744.9l1 9.3 1 -36.1 1 24.5 1 17 1 6.5 1 -13.1 1 -.4 1 -15.8 1 11.6 1 -2.5 1 16.1 1 8.7 1 .4 1 -25.1 1 12.7 1 21.2 1 -35.2 1 4.4M185 733.6l1 58.7 1 -47.4 1 20.3 1 5.6 1 -7.4 1 -.3 1 .1 1 4.1 1 15.4 1 -29.5M197 766.0l1 8.5M200 754.7l1 6.1 1 1.1 1 .8 1 17.9 1 -7.8 1 7.1 1 -16.8 1 8 1 5.7 1 -15.6M212 753.6l1 17.6 1 -5.1 1 -12.8 1 11.9 1 -17.8M230 761.3l1 14.5 1 28.2 1 -17.3 1 -23.8 1 13.2 1 19.2 1 -27.1 1 -11.9 1 16.6 1 -1.7 1 9.6 1 -32.3 1 33.5 1 -.5 1 -13 1 14.9 1 -9.9 1 8.6 1 -8.8 1 14.2 1 -22.2 1 27.4 1 -7.2 1 -12.3 1 -21.3 1 22.8 1 -3.4M264 755.6l1 18.7M267 764.6l1 -9.9 1 10.3 1 -19.6 1 1.2 1 7.7 1 -2.9 1 -.7 1 5.6"/>
<path vector-effect="non-scaling-stroke" d="M115 757.8l1 -5.4 1 -4.5 1 1.6 1 0 1 4.5 1 5.9 1 -12 1 8.9 1 -11.2 1 13.6 1 -9.5 1 8.1 1 -9.4 1 -2.7 1 5.5 1 4.9 1 -2 1 -5.4 1 2.3 1 -1 1 3.1 1 -.7 1 5.2 1 -18.4 1 9 1 17.4 1 -22 1 -4.8 1 17.9 1 -5.5 1 8.9 1 -21.8 1 20.6 1 -6.9 1 4.3 1 -14.8 1 19.1 1 4.2 1 -17.3 1 11.2 1 -11.7 1 13.1 1 -11.4 1 -6.5 1 3 1 8.4 1 -7 1 15.7M165 750.2l1 -1.4M168 755.1l1 -9.1 1 14.8 1 4.8 1 -11.7 1 1.3 1 -3.8 1 3.1 1 -4.9M185 757.7l1 5 1 11.5 1 -28.7 1 19.9M191 754.3l1 1 1 -10.5 1 7.7 1 -7.1 1 19.6 1 -13.4 1 26.4 1 -30.2 1 20.9 1 -3.1 1 -15.6 1 -5 1 .6 1 11.5 1 -7.2 1 9.3 1 13.2 1 .7 1 -33.5 1 15.7 1 4.9 1 -1M215 764.5l1 -23 1 20.2M230 757.9l1 15.4 1 11 1 -8 1 7.7 1 -11.6 1 -13.3 1 21.5 1 -10.1 1 4.9 1 -21.3 1 38.3 1 -22 1 14.1 1 19.5 1 -34 1 7.9 1 1 1 5.7 1 -2.8 1 -9.7 1 -4.9 1 8.2 1 7.8 1 -19.8 1 7.8 1 -35 1 53.8M262 734.1l1 5.1 1 -5.7 1 8.2 1 -9M276 752.3l1 .1 1 .6 1 -3.7 1 5.5 1 -.6"/>
<path vector-effect="non-scaling-stroke" d="M63 742.1l1 15.5 1 5.5 1 -18.9 1 8 1 -6.7 1 10.1M71 751.3l1 3.5 1 -10.1 1 -.8 1 10.4 1 -16.3 1 2.5 1 13.5M84 728.9l1 16.4M115 761.0l1 -5.9 1 -9.4 1 6.4 1 -4.3 1 -7.7 1 15 1 8.9 1 -6.1 1 -10.5 1 9.6 1 -7.2 1 -.4 1 11.9 1 -8.6 1 2 1 -1.1 1 5.9 1 -1.7 1 -2.6 1 2.9 1 -10.1 1 4.6 1 4.6 1 -6.7 1 1 1 2.1 1 2.9 1 -7 1 7.1 1 -6.7 1 -6.6 1 8.6 1 2.3 1 -11.1 1 10 1 -3.6 1 3.4 1 -3.3 1 4 1 -6.2 1 -4 1 5.8 1 6 1 5.2 1 -1.3 1 -17.7 1 16.4 1 -2.7 1 -2.6 1 6.4 1 -7.7 1 -6.5M169 753.7l1 1.6 1 .1 1 -6M174 754.3l1 -12.6 1 9.6M185 764.9l1 -11.1 1 -2 1 -1.1 1 11 1 2.4 1 -17.5 1 24.9 1 -13.3 1 -10.3 1 7.8 1 1.4 1 17.9 1 -15.6 1 -1.5 1 10.5 1 -17.5 1 20.4 1 -24.6 1 12.1 1 -9.6 1 15.2 1 -22.1 1 4.6 1 23.7 1 -21.2 1 23.1 1 -23.3 1 10.9 1 8.6 1 -5 1 -35.7 1 37.1M219 737.9l1 -1.3 1 2.9 1 22.9 1 .3 1 -2.4 1 -30.1 1 20.2 1 -8.2 1 16 1 4.3 1 35.2 1 -32.1 1 7.7 1 20.1 1 -25.6 1 -10.5 1 24.7 1 -12.1 1 -15 1 13.2 1 10.3 1 -54 1 61.8 1 -18.8 1 40.7 1 -23.5 1 -24.2 1 9.7 1 6.3 1 -4.2 1 3.5 1 .7 1 9.3 1 -14.3 1 3.2 1 -13.6 1 21.5 1 2.7M267 730.8l1 -11.2 1 22.5 1 10.2 1 -8.7 1 -13.6 1 12.7 1 11.6 1 -1.1"/>
<path vector-effect="non-scaling-stroke" d="M32 741.2l1 5.5 1 -14.9 1 27.4 1 -13.8 1 12.4 1 -43.8 1 17.8 1 49.2 1 -7.9 1 -14.1 1 -6 1 6.5 1 7.7 1 -10.6 1 -34.6 1 26.8 1 -3.8 1 9.8 1 -50.8 1 56.4 1 -.3 1 -1.9 1 -73.2 1 15 1 75 1 -24.9 1 -4.1 1 7.9M79 755.9l1 -8.9 1 -5.7 1 3.7 1 -7.8M86 728.5l1 -4.6 1 -10.8 1 24.8 1 25.9 1 -71.8 1 32.3 1 12.6 1 -2.1 1 10.1 1 -14.1 1 -8.2 1 -14 1 -5 1 41 1 -4.3 1 -48.9M104 710.9l1 -17.2 1 44 1 -2 1 -9.1 1 -3.3 1 -5.9 1 27.8 1 -13.2 1 -10.8 1 4M116 755.3l1 -9.4 1 16.3 1 6.8 1 -15.1 1 5.1 1 -2.6 1 6.5 1 .7 1 -9.8 1 8 1 -32.8 1 12.4 1 8.9 1 1.1 1 -2.9 1 7.4 1 4.5 1 -11.5 1 3.6 1 -1.9 1 4.4 1 9.9 1 -5.6 1 -7.9 1 4.4 1 13.1 1 -2.6 1 -13.3 1 9.4 1 -11 1 2.3M149 757.7l1 -8.8 1 -2.4 1 12.4 1 -4.5 1 2.6 1 -2.2 1 -6.5 1 7.4 1 .1 1 -.4M161 751.6l1 -1.2 1 -2.6 1 3.7 1 5 1 -1.1 1 6.2 1 -6.3 1 -1.9 1 .7 1 0 1 -11.5 1 9.2 1 .5 1 18 1 -24.3M185 755.5l1 11.5 1 -4.7 1 -8.5 1 6.9 1 14.4 1 -1.3 1 -29 1 22.2 1 2.9 1 -26.3 1 5.7 1 14.1 1 .3 1 4.2 1 2.1M202 766.1l1 -5.9 1 -1.3 1 24.5 1 -4.3 1 -29.1 1 1.4 1 5.9 1 21.4 1 -30.8 1 9.9 1 -7.3 1 18.6 1 1.4 1 -17.7 1 34.2 1 13 1 -28.3 1 -47 1 26.5 1 20.6 1 -6.9 1 -5.8 1 10.3 1 -18.8 1 2.6 1 21.4 1 -14.6 1 18.9 1 -2.5 1 7.3 1 -2.9 1 -3.4 1 -6 1 .3 1 13.9 1 -1.2 1 7.2 1 -6.5 1 -11.7 1 -12.6 1 40 1 -20.5 1 6.8 1 -9.6 1 -7.9 1 15.2 1 9.1 1 -19.4 1 -6.1 1 .1 1 8.5 1 -5.9 1 3.5 1 -15.2 1 2.8M282 744.6l1 8.2 1 7.6 1 -10.6 1 5.6 1 2.3 1 -6.3 1 6.4 1 -2.1 1 -11.2 1 6.1 1 8.7"/>
<path vector-effect="non-scaling-stroke" d="M115 755.0l1 -7 1 41.7 1 -32 1 -8.6 1 19.9 1 4.2 1 -17.4 1 3.8 1 3 1 -.7 1 -14.6 1 6.1 1 3.8 1 -.9 1 .5 1 8 1 -12.3 1 -2.2 1 8.2 1 4.8 1 -4.9 1 12.1 1 -19.6 1 17.2 1 -3.6 1 -16.5 1 12.2 1 -.2 1 -1.9 1 6.6 1 -4.2 1 4.6 1 8.6 1 -9.4 1 -3.1 1 -7.2 1 16.3 1 -3.7 1 -11.1 1 4.5 1 -.3 1 .6 1 2.9 1 -6.9 1 15.2 1 -7 1 -2.9 1 10.3 1 -10.5 1 -10.9 1 5.1 1 -4.9 1 2.2 1 -6 1 8.8 1 15.7 1 -18.1M174 768.7l1 -3.5 1 -9.6M185 784.0l1 -40.4 1 20.6 1 -3.5 1 5.9 1 3 1 .4 1 12.8 1 2.3 1 -37.5 1 6.1 1 -.9 1 16.1 1 -9.6 1 6.4 1 8.2 1 -22.4 1 -5.7 1 54.4 1 -37 1 -9.1 1 14.7 1 -20 1 23M210 767.6l1 22.8 1 -40.2 1 21.1 1 -17.9M216 779.2l1 -8M230 784.8l1 4.5 1 -25.5 1 11.8 1 7.2 1 -57.8 1 70.1 1 -25.8 1 9.6 1 -6.3 1 -5.9 1 9.1 1 1.6 1 18.7 1 -13 1 -31.7 1 33.1 1 13.2 1 -19.4 1 8.1 1 -16.6 1 6.9 1 1.3 1 7.6 1 -9.4 1 -8.6 1 9.4 1 7.9M262 745.7l1 -14.3 1 41.6 1 -25.1 1 -1M282 760.9l1 -7.7 1 .8 1 9.7 1 -11.5 1 -2.6 1 10.5 1 -7.6 1 -5.4 1 5.5 1 -22 1 25.4"/>
<path vector-effect="non-scaling-stroke" d="M115 754.3l1 11.4 1 -13.7 1 9.9 1 -5.8 1 .7 1 10.3 1 -13.2 1 -5.3 1 3.4 1 4.3 1 8.3 1 -11.7 1 2.1 1 -3.7 1 9.6 1 .9 1 -8.4 1 4.3 1 -.1 1 2.6 1 2.5 1 -5.9 1 -14.4 1 22.4 1 -12.8 1 .6 1 7.4 1 2.4 1 -1.3 1 -5.9 1 15.8 1 -10.1 1 -11.8 1 9.6 1 .7 1 1.2 1 -1.7 1 -51.4 1 48 1 3.2 1 -12 1 12.6 1 -1.1 1 -1.3 1 -10.1 1 3.2 1 24.7 1 -11.1 1 -10.6 1 2.1 1 1.5 1 7.4 1 2.8 1 -5.1 1 11 1 -17.6 1 8.4 1 -2.3 1 -13.7 1 6.3 1 1.3M185 764.6l1 -2 1 1.7M189 737.3l1 17.8 1 26.4 1 -22.5 1 -12.3 1 24.8 1 -8.9 1 -22.4 1 88.6 1 -99.3 1 20M201 753.7l1 -15 1 16.5 1 -1.1 1 18.5 1 -7.3M208 771.5l1 -5.3 1 8.3 1 -19.1 1 3.8 1 3.4 1 7 1 -17.1 1 7.1 1 6.6M230 781.4l1 -7 1 11 1 -10.6M235 797.3l1 -10.9 1 -5.3 1 -3.6 1 6.9 1 25.6 1 -35.7 1 9.9M244 786.3l1 1.3 1 -22.3 1 6.4 1 1.3 1 1.6 1 4.8 1 7.8 1 -13.7 1 7.8 1 -15.5 1 24.7 1 -6.5 1 -4.7M282 731.8l1 27.3 1 -22.7 1 15.2 1 4.5 1 2.3 1 -7.3 1 8.8 1 -9.5 1 19.6 1 -24.5 1 -20.9"/>
<path vector-effect="non-scaling-stroke" d="M0 761.7l1 -12.4 1 15.6 1 -13.1 1 6 1 -4.9 1 -5.9 1 1.7 1 9 1 -16.6 1 4.8 1 -3.9 1 7.5 1 8.9 1 7.8 1 -25.2 1 26.1 1 -23.5 1 4.9 1 -7.6 1 -17.4 1 29.9 1 12.8 1 -1.4 1 -15.6 1 5.8 1 11.1 1 -11.4 1 -20 1 23.8 1 -25.5 1 11M115 760.6l1 -.3 1 -2.5 1 -10.1 1 19.3 1 -12.3 1 1.6 1 -3.1 1 8.1 1 -4.1 1 -1 1 10 1 -8.8 1 1.3 1 1.7 1 .9 1 5.4 1 -15.8 1 23.6 1 -12.5 1 4.1 1 -13.2 1 3.9 1 -2.9 1 2.4 1 -7.2 1 21.7 1 -6.9 1 0 1 -7.9 1 .6 1 5.6 1 -12.2 1 15 1 2.8 1 -30.8 1 19.7 1 5 1 -3.2 1 5.2 1 -2.6 1 5.7 1 .6 1 -11.6M160 761.5l1 1.5 1 2.9 1 1.8 1 -.8 1 -3.8 1 3.5 1 1.2 1 -15 1 -1 1 9.4 1 -6.6 1 1.4 1 4.9 1 -.1 1 -3.6 1 -.4M180 756.4l1 12.2 1 -7 1 -3.3 1 -12.1 1 8.2 1 22.8 1 -11.9 1 -2.3 1 -16.2 1 -2.7 1 5.5 1 13.2 1 -5.9 1 17.8 1 -6.1 1 3.1 1 -5.6 1 -8.7 1 17.2 1 -10.5 1 9.1 1 7.4 1 -1 1 -12.5 1 -12.1 1 7.6 1 -2.4 1 -12.3 1 7.1 1 18 1 -20.9 1 -2.1 1 16.8 1 -8.6 1 6.3 1 3.6 1 -6.9 1 .4 1 -3 1 -12.9 1 39.1 1 -39.1 1 5.7 1 4.5 1 -13.4 1 37.9 1 14 1 -49.5 1 20 1 35.1 1 -20.4 1 10.6 1 -19.9 1 32.6 1 -13.5 1 16.6 1 -34.5 1 11.3 1 .4 1 -10.2 1 17.4 1 -1.5M245 778.4l1 7 1 13.5 1 -2.6 1 -17 1 -3.4 1 -.2 1 12.9 1 -14.7 1 22.1 1 0 1 -6.3 1 -5.3M282 742.0l1 4.1 1 39.9 1 -35.6 1 5.9 1 -12 1 18.3 1 6.7 1 -2.7 1 -16.7 1 10.5 1 -18.6"/>
<path vector-effect="non-scaling-stroke" d="M115 756.0l1 2.8 1 1.7 1 5.7 1 -22.3 1 8.9 1 -8.2 1 9 1 .1 1 8.3 1 -8.8 1 -1.8 1 4.8 1 1.6 1 -5.3 1 -4.9 1 8.6 1 -7.3 1 .6 1 8 1 -14.2 1 9.4 1 1.8 1 7.4 1 -4.9 1 -3.8 1 1.9 1 -.2 1 3.7 1 2.5 1 1.3 1 -1.1 1 -7.2 1 3.5 1 -11.3 1 3.2 1 3.4 1 2.4 1 -8.9 1 11.3 1 -5.2 1 -10.3 1 17.3 1 7.6 1 -19 1 9.4 1 -4.7 1 3.8 1 -13.4 1 5.4 1 16.5 1 -16.8 1 2.3 1 -3.7 1 10.7M171 761.9l1 -6.9 1 .1 1 -13.4M185 747.9l1 2.5 1 -2.7 1 15 1 1.6 1 -1.8 1 -4.1 1 2.5 1 -15.9 1 10.1 1 12.2 1 -27.5 1 15.3 1 .1 1 -3.9 1 2.5 1 13.9 1 .5 1 14.7 1 -19.8 1 -10.9 1 4.5 1 -1.3 1 11 1 -14.8 1 13.5 1 -19.1 1 23 1 -12.8 1 4.9 1 -2.7 1 11.9 1 -9.4M230 777.0l1 -11.9 1 10.4 1 6.1 1 7.3 1 -6.7 1 -20.8 1 12M239 789.8l1 -34.8 1 21 1 5.8 1 -3.3 1 -7.5 1 4.3 1 9.7 1 -16.3 1 8.2 1 -17.5 1 28.3 1 27 1 -32.3 1 -10.8 1 -15.8 1 16.3 1 53.9 1 -55.5 1 -22.4 1 8.3M261 754.0l1 -16.2 1 -3.9 1 20.1 1 5.8 1 -4.3M282 742.1l1 .7 1 4.6 1 -.1 1 -13.4 1 -5.9 1 44.7 1 -20.4 1 7.5 1 -13.7 1 13.7 1 8"/>
<path vector-effect="non-scaling-stroke" d="M63 740.5l1 1.4 1 -5.8 1 12.7 1 20.2 1 -25.3 1 3.5M71 747.0l1 -6.4 1 8.2 1 -9.4 1 12.5 1 -4.6 1 -5.5 1 9.4M86 729.0l1 -3.7 1 69.7 1 -80.3 1 15.8 1 19.9 1 -27.9 1 22.8 1 -45.3 1 41.9 1 -7.6 1 -63.3 1 47.7 1 17.7 1 -28.8 1 21.2 1 -12.1M104 736.5l1 -11.5 1 8.6 1 -37 1 30.4 1 -1.7 1 7.4 1 -26.1 1 36.5 1 -36.8 1 20.6 1 18.4 1 -.1 1 7.8 1 -.4 1 3.5 1 -1.5 1 3 1 -7.4 1 1.2 1 4.4 1 -3.6 1 3.5 1 -1.2 1 4.2 1 -8 1 1.6M132 749.0l1 10.4 1 -4.8 1 -8.5 1 -1.3 1 12.7 1 .8 1 -8.5M141 759.5l1 7.1 1 -18.1 1 3.6 1 2.4 1 5.6 1 -1.8 1 -1.3 1 1.3 1 7.7 1 -12.1 1 -6.2 1 0 1 .8 1 -3.8 1 10.7 1 -.9 1 4.4 1 -.7 1 -6.8 1 13.3 1 -13.2 1 -6.1 1 3.3 1 14.3 1 -6 1 4.3 1 8 1 -14.4 1 8.1 1 -4.7 1 2.9 1 -12 1 11.8 1 -1.5 1 -8.1M230 776.4l1 11.3 1 -25.3 1 12.5 1 -9.7 1 11.7 1 -5.4 1 4.2 1 9.3 1 -13.1 1 12 1 -1.2 1 8.9 1 -21.7 1 18.8 1 -2.9 1 .3 1 -15.9 1 -7.4 1 -16.3 1 16.1 1 7.1 1 12 1 -7 1 6.5 1 -12.1 1 13.9 1 -13.9"/>
<path vector-effect="non-scaling-stroke" d="M32 778.6l1 -13.4 1 -44.5 1 41.6 1 9.8 1 -38.5 1 24.7 1 -16.8 1 9.7 1 -.9 1 -10.5 1 2.8 1 5 1 5.1 1 -2.2 1 -1.1M51 764.6l1 -13.3 1 4.1 1 31.1M56 742.8l1 26.1 1 -41.9 1 25.7 1 -14.1 1 -2.8 1 12M115 755.1l1 -3.2 1 5.2 1 -2.8 1 -2.7 1 -3.4 1 1.1 1 6.9 1 4.5 1 -4.6 1 -6.3 1 6.6 1 -3.8 1 3.7 1 6.9 1 -6.4 1 -8.3 1 16 1 1.6 1 -.1M138 755.2l1 -7.5 1 7 1 -8.6 1 12.3 1 -6.3 1 12.1 1 -19.6 1 13 1 -10 1 17.4 1 -9.3 1 -5.4 1 1.1 1 3.7 1 -5.5 1 .2M156 762.4l1 -8.5 1 3 1 .6 1 -9.3 1 27.8 1 -3.5 1 -19.5 1 6.2 1 -.8 1 -9.2 1 3 1 7.4 1 9.8 1 -30 1 20.7 1 .5 1 -4.2 1 -8 1 13 1 -4.4M185 750.0l1 17.8 1 -11.9 1 57.9 1 -67.9M191 735.2l1 -7.8 1 23.6 1 4.5 1 6.1 1 4.4 1 -17.1M199 761.7l1 -1.1 1 -12.7 1 42.4 1 -28.3 1 9.7 1 -8.5 1 1.9 1 -5.9 1 -19.3 1 24.2 1 -12.2 1 8.7 1 8.9 1 -4.3 1 40.8 1 -61.6 1 4.7M218 744.9l1 17.2 1 -4.7 1 -3.8 1 28.8M224 753.9l1 21.1 1 -24.8 1 -6.7 1 -2.2 1 22.9 1 17.6 1 -3.7 1 -14.6 1 14.3 1 -5.5 1 2.3 1 3.3 1 -12.1 1 26.5 1 -25.7 1 3.7 1 30.8 1 -21.4 1 4.4 1 -22.7M246 780.9l1 -2.7 1 -7.4 1 26.6 1 -29.6 1 13.8 1 -4.9 1 -1.4 1 5.2 1 -.9 1 9.3 1 -20.6M267 757.5l1 6.3 1 -6.3 1 -16.4 1 -17.2 1 39.2 1 -21 1 14.4 1 -1.5 1 10.4 1 -15.7 1 3.2 1 -.8 1 -13.6 1 12.4"/>
<path vector-effect="non-scaling-stroke" d="M86 720.5l1 11.6 1 -12 1 -1.3 1 23.5 1 1.1 1 -19.1 1 2.2 1 26.5 1 6.6 1 -35.8 1 13.2 1 -12.1 1 2.9 1 5.4 1 -4 1 -18.2 1 10.3 1 -7.8 1 24.7 1 29.2 1 -35.4 1 -6.3M110 724.4l1 -10.5 1 17.6 1 -17.2 1 -10.2 1 51.5 1 -.7 1 1.9 1 -4.2 1 -.6 1 5 1 4.3 1 -10.8 1 9 1 -2.9 1 1 1 4.3 1 -13.3 1 9.4 1 -1.6 1 4.1 1 -7.8 1 -.5 1 -7.3 1 7.1 1 5.3 1 -3.6 1 7.3 1 -.1 1 -1.8 1 -3.7 1 -8.7 1 14.3 1 -6 1 -1.3 1 -3.8 1 14.9 1 -11.5 1 -9.5 1 11.6 1 4.7 1 -1 1 -9.3 1 8.3 1 3.8 1 -6.6 1 1.9 1 -13.1 1 16.6 1 -8.4 1 2.5 1 -4.3 1 -2.2 1 -11.5 1 16.2 1 5.5 1 2.2 1 -8.1 1 7.4 1 -1.1 1 -8.1 1 2.5 1 15.5 1 -18.4 1 -6.8 1 18.8 1 4.6M185 754.5l1 12.7 1 -9.7 1 -33.1 1 9.5 1 19 1 9.7 1 -1 1 30.6 1 -39.9 1 -34 1 47.2 1 10.4 1 -7.2 1 -15.2 1 31 1 -34.2 1 2.2 1 9.9 1 -3.2 1 17.9 1 9.8 1 -13.7 1 7.5 1 14.9 1 -41.1 1 21.7 1 -20.1 1 2.3 1 7 1 -19.3 1 16.3 1 .6M230 785.2l1 -.9 1 -23 1 25.7 1 17.3 1 -20.9 1 -3.8 1 21.5 1 -36.8 1 29.3 1 -14.9 1 22.2 1 -22.1 1 19.3 1 -26.3 1 -15.3 1 21.8 1 -10.7 1 20.1 1 -24.4 1 24.6 1 -8.7 1 11.1 1 -13.4 1 8.2 1 -5.9 1 -8.9 1 -.2M268 753.6l1 15.7 1 -18.7 1 10.1 1 -1.2 1 -3.7M282 765.2l1 -22.1 1 7.3 1 -11.9 1 20.5 1 16 1 -50.9 1 39.3 1 -6 1 5.4 1 -15.4 1 9.1"/>
<path vector-effect="non-scaling-stroke" d="M115 751.5l1 1.6 1 6.5 1 4.7 1 -13 1 -13.2 1 23.6 1 -2.5 1 -6.8 1 -4.2 1 9.4 1 14.7 1 -20.8 1 2.1 1 9.7 1 -9.3 1 5.7 1 -.5 1 -3.5 1 -10.4 1 25.4 1 -3.7 1 -9.2 1 -2.4 1 3.9 1 -6.6 1 8.3 1 7.7 1 -13.6 1 1.3 1 -1 1 3.5 1 -5.5 1 6.4 1 -4.9 1 .3 1 -4.3 1 4 1 10.7 1 -34.1 1 8.2 1 13.9 1 -8.4 1 1.3 1 15.2 1 -7.5 1 17.5 1 -17.6 1 5.5 1 -7.7 1 5.4 1 -4.5 1 1.6 1 4.7 1 -9.6 1 1.3 1 5.9M173 746.4l1 2.6 1 3.6 1 -2.8M185 743.6l1 17.3 1 -14.1 1 19.6 1 -4.6 1 6.8 1 -10.5 1 11.1 1 19.3 1 -22.1 1 -16.5 1 -11.8 1 48 1 -30.4 1 14.4 1 5.8 1 1.5 1 -35.5 1 27.8 1 -17.8 1 43.1 1 -26.1 1 -16.6 1 10.6 1 4.7 1 -30.7 1 39 1 1.2 1 -20.6 1 -3.9 1 -14.4 1 22.4 1 -5.8M230 776.5l1 -5.2 1 7.3 1 -15.2M235 790.2l1 -10.3 1 -1.6 1 -2.4 1 -4 1 10 1 1.2 1 -12.9 1 19.2 1 -10.1 1 31 1 -29.8 1 8.8 1 -3.6 1 -8.3 1 3.1 1 -2.2 1 -.4 1 4.3 1 -1.3 1 13.4 1 7.8 1 -31.1M267 751.6l1 -1.3M270 744.7l1 8.9 1 -22.1 1 19.5 1 24.7 1 -15.9"/>
<path vector-effect="non-scaling-stroke" d="M177 753.7l1 13.1 1 -15.5M262 739.4l1 15.1 1 -29.8 1 46.3"/>
<path vector-effect="non-scaling-stroke" d="M86 709.5l1 -19.9 1 14.6 1 15.9 1 -19.5 1 28.3 1 -18.4 1 13.3 1 2.6 1 -16.5 1 23.9 1 -43.8 1 43.7 1 -11.7 1 3.4 1 4 1 3.6 1 -49.4 1 31.4 1 -4.8 1 -4.7 1 15.1 1 3.8 1 6.7 1 -35.1 1 46.7 1 -23.3 1 -23.3 1 16.7 1 39.6 1 9.3M118 758.5l1 -5 1 1 1 .3 1 -28.8 1 39.6 1 -11.2 1 -1.8 1 5.3 1 -2.8 1 8.8 1 -.1 1 -6.4 1 .8M133 742.8l1 11.7 1 8.3 1 -7.4 1 10.5 1 -4.9 1 -5.4 1 -1.8 1 -11.3 1 12.2 1 -5.7 1 17.9 1 -13.1 1 -5.1 1 .7 1 11.5 1 -.6 1 -4.5 1 5.4 1 -11.9 1 6.7 1 9.5 1 -9.7 1 -12.9 1 16.6 1 -9.5 1 -3 1 11.5 1 3 1 -12.5 1 13.8M165 757.1l1 -4.2 1 -3.2 1 10.9 1 -2.3 1 -.6 1 -4.9 1 -24.2M174 752.3l1 6.6 1 -15.2M180 767.5l1 -14.6 1 5.9 1 19.9 1 -19.4M218 759.3l1 -8.6 1 -.3 1 2.5 1 6 1 -7.6 1 12.8 1 -16.1 1 7.5M228 778.3l1 -38.8 1 35.7 1 6.7 1 -5.3 1 9.7 1 -16.8 1 10 1 5.2 1 -9.6 1 17.6 1 2.4 1 -25.3 1 -42.6M243 774.2l1 6.6 1 -23 1 14.6 1 4.1 1 -2.6 1 1.4 1 -7.4 1 -1.2 1 21 1 -4.3 1 -6.4 1 27.7 1 -28.1 1 -5.3 1 -27.5 1 22.8 1 -24.4 1 -16.1"/>
<path vector-effect="non-scaling-stroke" d="M79 755.2l1 -15.6 1 32.9 1 -7.5 1 -4.6M86 708.7l1 29.8 1 -20.6 1 27.8 1 -26.3 1 -7.2 1 11.7 1 -10.4 1 5.7 1 16.9 1 -17.6 1 33.3 1 -39.3 1 4.2 1 6.9 1 20.4 1 -8.1 1 12.7 1 8.4 1 4.2 1 -37.8 1 -6.4 1 2.1 1 -1 1 -9.8 1 11.5 1 22.7 1 -19.2 1 .7M177 759.7l1 -4.7 1 6.3M185 764.1l1 -17.6 1 -17.4 1 33.1 1 -17.3 1 45.1 1 -13.5 1 -9.9 1 -30.5 1 33.4 1 19.3 1 -21.3 1 -1.8 1 -3.6 1 5.9 1 2.4M202 763.5l1 -1 1 -4.7 1 18.4 1 6.7 1 3.2 1 -19.5 1 -12.4 1 -6.7 1 29.2 1 -6.6 1 .2 1 5.4 1 .6 1 -9.8 1 -2.2M230 784.4l1 -17.6 1 13.7 1 -2.8 1 4.4 1 -8.4 1 21.3 1 -19 1 4.7 1 -.6 1 23.4 1 -12.7 1 2.4 1 -9.1M245 796.2l1 -16.8 1 12.1 1 2.9 1 -22 1 6.9 1 18.1 1 -25.9 1 14.9 1 -4.3 1 .2 1 2.5 1 -2.7"/>
</g>
<path d="M661.4 804.6L663.6 798.8M680.2 792.6L682.6 785.0M693.0 775.7L695.5 773.2M707.9 807.7L710.5 821.2M707.8 839.3L709.0 839.8M694.0 755.5L697.0 757.0" fill="none" stroke="#3cb44b" stroke-opacity=".78"/>
<path d="M605 756.3H1152" stroke="#111" stroke-opacity=".68" stroke-width="1" fill="none"/>
<path d="M608.3 757.1L610.7 731.3L612.4 750.9M618.2 753.0L620.2 736.4L621.9 761.2L623.8 728.2L625.6 744.7M631.0 751.9L633.5 728.2L636.2 757.1L638.8 771.6L641.3 744.7M650.2 749.9L653.3 757.1L655.8 741.6M729.1 747.8L730.6 760.2L733.3 762.3M740.5 750.9L742.6 759.2L744.2 750.5M818.9 756.1L825.7 749.3L828.2 753.4L831.3 751.9L833.3 753.0L836.0 746.8L838.1 761.2M843.7 765.4L846.4 754.0L847.8 763.3L849.3 733.3L850.9 757.1L853.0 746.8L856.1 751.9L859.2 756.1L861.2 750.9L862.7 726.1L864.3 748.8L867.4 750.9L870.5 762.3L873.2 760.2L875.7 767.4L877.4 731.3L878.8 763.3L880.9 750.9L884.0 748.8L886.0 771.6L888.5 751.9M894.3 750.9L896.4 748.8M903.6 750.9L905.7 750.9L907.3 732.3L909.2 742.6L910.8 755.0L912.9 754.0L915.0 757.1L917.4 755.5M922.2 760.2L925.3 745.7L928.4 748.8L930.5 757.1L933.6 750.9M929.0 757.1L933.1 750.9M948.6 747.8L950.7 772.6L952.3 750.9L954.4 769.5M975.0 764.3L978.6 749.9M982.7 750.9L985.8 750.9L988.9 767.4L991.0 759.2L994.0 748.8M997.8 767.9L998.8 768.9M1003.3 743.7L1005.4 757.1L1006.9 736.4M1038.5 780.9L1040.5 787.1M1044.7 781.9L1046.7 779.8L1048.2 785.0L1049.8 781.9M1053.3 785.0L1055.0 787.1L1057.5 793.3M1061.2 788.1L1063.3 774.7L1065.3 779.8L1068.4 778.8M1076.7 771.6L1079.8 784.0L1083.9 778.8L1085.4 754.0M1120.9 765.7L1122.9 763.8L1125.2 749.1L1126.4 761.8L1128.7 751.0" fill="none" stroke="#c22fc2" stroke-width="2" stroke-linejoin="round" stroke-opacity=".95"/>
<path d="M577.5 605.5V880M571.5 618.6H580M573.5 631.8H577.5M573.5 645.1H577.5M573.5 658.3H577.5M573.5 671.5H577.5M571.5 684.8H580M573.5 698.0H577.5M573.5 711.2H577.5M573.5 724.4H577.5M573.5 737.7H577.5M571.5 750.9H580M573.5 764.1H577.5M573.5 777.4H577.5M573.5 790.6H577.5M573.5 803.8H577.5M571.5 817.0H580M573.5 830.3H577.5M573.5 843.5H577.5M573.5 856.7H577.5M573.5 870.0H577.5" stroke="#000" fill="none"/>
<rect x="1041.5" y="615.5" width="127" height="63" fill="#fff" fill-opacity=".95" stroke="#e5e5e5" stroke-opacity=".4"/>
<path d="M1052 635.3H1072" stroke="#3cb44b" stroke-width="1.2"/><path d="M1052 658.2H1072" stroke="#e833e8" stroke-width="2"/>

<g>
<rect x="1179" y="629" width="2" height="28" fill="#26aae1"/>
<rect x="1179" y="689" width="2" height="28" fill="#26aae1"/>
<rect x="1179" y="781" width="2" height="28" fill="#26aae1"/>
<path d="M1189 685.5H1199M1189 717.5H1199M1189 777.5H1199" stroke="#d0d0d0"/>
<!-- logo -->
<g transform="translate(1193.05 613.9)">
<path d="M-2.9 -7.8L.2 -10L3.2 -7.6L-2.3 -4Z" fill="#0da850"/>
<path d="M3.1 -7.5L6.9 -6.8L7.9 -3.2L3.7 -3L1 -4.4Z" fill="#00aaa0"/>
<path d="M3.7 -2.8L7.9 -3L10 .1L7.6 3.3L5.8 1.2Z" fill="#2aa9e0"/>
<path d="M4.3 .7L7.4 3.5L6.8 7L3.4 7.2L3.2 4.8Z" fill="#8b2f8f"/>
<path d="M2.8 3.2L3.1 7.3L-.2 10.2L-3.2 7.3L-.2 5Z" fill="#ed0b63"/>
<path d="M-7.7 3.2L-3.4 3.4L-.9 4.4L-3.4 7L-6.9 6.7Z" fill="#f05a1e"/>
<path d="M-7.6 -3L-5.5 -.4L-3 2.9L-7.7 3L-10 -.1Z" fill="#f89b18"/>
<path d="M-6.9 -7L-3.1 -7.8L-3.1 -3.6L-4.5 -1L-7.6 -3.3Z" fill="#a8cf22"/>
</g>
<!-- pan -->
<g transform="translate(1195 642)" fill="#a1a6a9" stroke="none">
<path d="M0 -8.2L3.4 -4.4H1.1V-1.1H4.4V-3.4L8.2 0L4.4 3.4V1.1H1.1V4.4H3.4L0 8.2L-3.4 4.4H-1.1V1.1H-4.4V3.4L-8.2 0L-4.4 -3.4V-1.1H-1.1V-4.4H-3.4Z"/>
</g>
<!-- box zoom -->
<g fill="none" stroke="#a1a6a9">
<rect x="1187.5" y="662.5" width="15" height="15" stroke-dasharray="2 2" stroke-width="1"/>
<circle cx="1199" cy="666.8" r="4.4" stroke="#fff" stroke-width="4.4" fill="#fff"/>
<path d="M1196 670L1191.6 674.5" stroke="#fff" stroke-width="4" stroke-linecap="round"/>
<circle cx="1199" cy="666.8" r="4.4" stroke-width="1.7" fill="#fff"/>
<path d="M1196 670L1191.6 674.5" stroke-width="2" stroke-linecap="round"/>
</g>
<!-- wheel zoom -->
<g fill="none" stroke="#a1a6a9" stroke-width="1.5">
<rect x="1186.8" y="696.8" width="6.3" height="11.4" rx="3.1"/>
<path d="M1188.8 699.9H1191.1M1188.8 702.4H1191.1" stroke-width="1"/>
<circle cx="1200" cy="700.3" r="3.4"/>
<path d="M1198.3 703.6L1196.6 708.4" stroke-linecap="round"/>
</g>
<!-- save -->
<g fill="none" stroke="#a1a6a9" stroke-width="1.2">
<rect x="1187.6" y="726.6" width="14.8" height="14.8"/>
<path d="M1190.5 726.6V732.3H1199.5V726.6" />
<path d="M1196.8 728.2V730.8" stroke-width="1.6"/>
</g>
<!-- reset -->
<g fill="none" stroke="#a1a6a9" stroke-width="1.6">
<path d="M1188.5 760.6A6.6 6.4 0 0 1 1201.3 759.8"/>
<path d="M1201.5 763A6.6 6.4 0 0 1 1188.7 763.8"/>
<path d="M1198.2 759.2L1204.2 759.6L1201.4 763.8Z" fill="#a1a6a9" stroke="none"/>
<path d="M1191.8 764.3L1185.8 763.9L1188.6 759.7Z" fill="#a1a6a9" stroke="none"/>
</g>
<!-- hover -->
<g fill="none" stroke="#a1a6a9" stroke-width="1.2">
<path d="M1190.2 788.6H1199.8Q1200.4 788.6 1200.4 789.2V796.8Q1200.4 797.4 1199.8 797.4H1197L1195 800.2L1193 797.4H1190.2Q1189.6 797.4 1189.6 796.8V789.2Q1189.6 788.6 1190.2 788.6Z" fill="#fff"/>
<rect x="1191.3" y="790.2" width="7.4" height="5.4" fill="#cfd1d2" stroke="none"/>
</g>
</g>

</svg>
<span class="t" id="t53" style="left:554.50px;top:608.79px;font-size:11px;color:#444;transform:scaleX(1.0041);">10</span>
<span class="t" id="t54" style="left:560.60px;top:674.94px;font-size:11px;color:#444;transform:scaleX(1.0122);">5</span>
<span class="t" id="t55" style="left:560.60px;top:741.09px;font-size:11px;color:#444;transform:scaleX(1.0122);">0</span>
<span class="t" id="t56" style="left:557.00px;top:807.24px;font-size:11px;color:#444;transform:scaleX(1.0019);">-5</span>
<span class="t" id="t57" style="left:1077.30px;top:624.90px;font-size:13px;color:#444;transform:scaleX(0.9857);">Other proteins</span>
<span class="t" id="t58" style="left:1077.30px;top:647.80px;font-size:13px;color:#444;transform:scaleX(0.9659);">Query</span>
<div class="a" style="left:541.5px;top:750.6px;width:0;height:0"><span id="ylab" style="position:absolute;white-space:nowrap;font-size:13px;font-style:italic;color:#444;line-height:16px;transform:translate(-50%,-50%) rotate(-90deg) scaleX(1);display:block">Log2 Heavy / Light change</span></div>
</body></html>
